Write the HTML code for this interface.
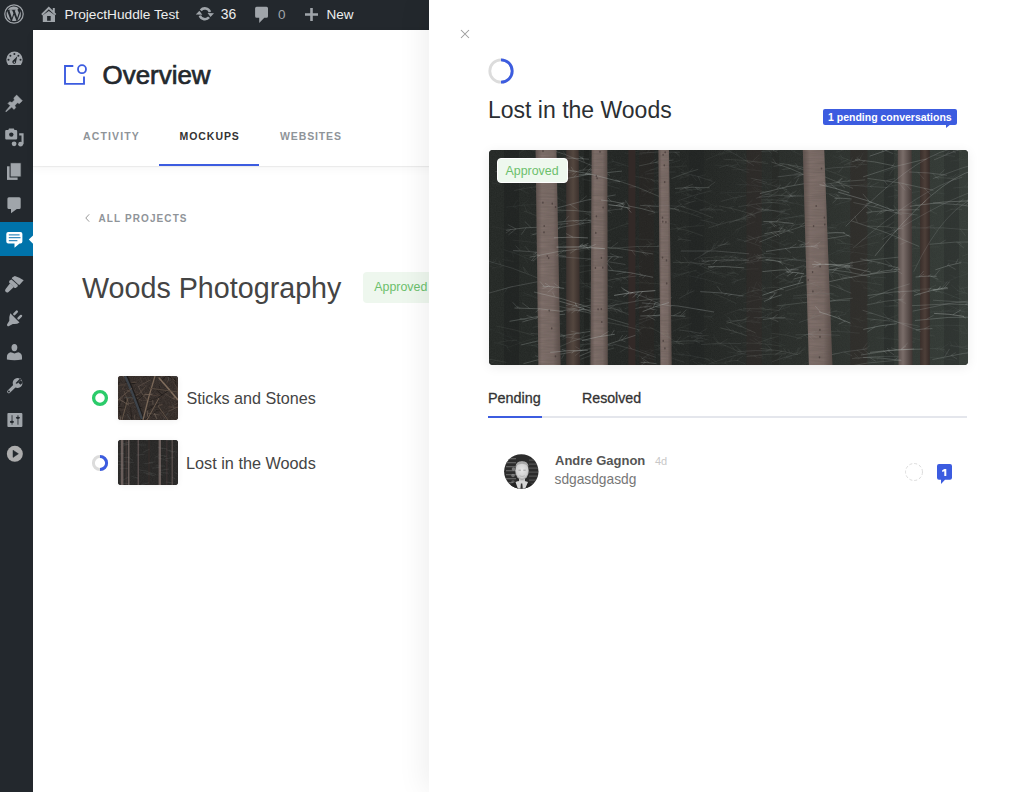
<!DOCTYPE html>
<html><head><meta charset="utf-8">
<style>
*{box-sizing:border-box;margin:0;padding:0}
html,body{width:1024px;height:792px;overflow:hidden;background:#fff;font-family:"Liberation Sans",sans-serif}
.a{position:absolute;white-space:nowrap}
#bar{position:absolute;left:0;top:0;width:1024px;height:30px;background:#23282d}
#side{position:absolute;left:0;top:30px;width:33px;height:762px;background:#23282d}
#main{position:absolute;left:33px;top:30px;width:991px;height:762px;background:#fff}
#hdr{position:absolute;left:33px;top:30px;width:991px;height:136px;background:#fff;box-shadow:0 1px 1px rgba(0,0,0,.055),0 3px 10px rgba(0,0,0,.035)}
#panel{position:absolute;left:429px;top:0;width:595px;height:792px;background:#fff;box-shadow:-4px 0 28px rgba(0,0,0,.07)}
svg{position:absolute;overflow:visible}
</style></head><body>
<div id="bar">
  <!-- WP logo -->
  <svg style="left:4px;top:4px" width="20" height="20" viewBox="0 0 20 20">
    <circle cx="10" cy="10" r="9.2" fill="none" stroke="#a0a5aa" stroke-width="1.2"/>
    <path fill="#a0a5aa" d="M2.6,10 a7.4,7.4 0 0 0 4.2,6.7 L3.2,6.9 A7.3,7.3 0 0 0 2.6,10z M15,9.6 c0-1-.4-1.6-.7-2.2 c-.4-.6-.7-1.1-.7-1.7 c0-.7.5-1.3 1.2-1.3 h.1 A7.4,7.4 0 0 0 3.7,5.8 h.5 c.8,0 2-.1 2-.1 c.4,0 .4.6 0,.6 c0,0-.4,0-.8.1 l2.5,7.5 1.5-4.6 -1.1-2.9 c-.4,0-.7-.1-.7-.1 c-.4,0-.3-.6 0-.6 c0,0 1.2.1 1.9.1 c.8,0 2-.1 2-.1 c.4,0 .4.6 0,.6 c0,0-.4,0-.8.1 l2.5,7.4 .7-2.3 c.3-.9.5-1.6.5-2.2z M10.1,10.7 l-2.1,6.1 a7.4,7.4 0 0 0 4.5-.1 l-.1-.1z M16.1,6.8 c0,.2.1.5.1.8 c0,.8-.1,1.6-.6,2.7 l-2.2,6.5 A7.4,7.4 0 0 0 16.1,6.8z"/>
  </svg>
  <!-- home -->
  <svg style="left:38px;top:2px" width="24" height="24" viewBox="0 0 24 24">
    <path fill="#a0a5aa" d="M3.2,12.1 L10.8,4.5 L14.8,8.5 V6 H16.8 V10.5 L18.3,12 L17,13.3 L10.8,7.2 L4.5,13.4z"/>
    <path fill="#a0a5aa" fill-rule="evenodd" d="M4.8,20 V13.2 L10.8,8.9 L17,13.2 V20z M9.1,14.1 H12.7 V18.8 H9.1z"/>
  </svg>
  <div class="a" style="left:64.5px;top:7.7px;font-size:13.7px;line-height:13.7px;color:#eee">ProjectHuddle Test</div>
  <!-- updates -->
  <svg style="left:190px;top:2px" width="28" height="26" viewBox="0 0 28 26">
    <g fill="none" stroke="#a0a5aa" stroke-width="2.6"><path d="M10.76,8.33 A5.4,5.4 0 0 1 19.97,9.95"/><path d="M19.04,15.27 A5.4,5.4 0 0 1 9.83,13.65"/></g>
    <g fill="#a0a5aa"><path d="M17.6,11 L24,11.2 L20.5,15.1z"/><path d="M5.8,12.4 L9.4,8.7 L12.3,12.8z"/></g>
  </svg>
  <div class="a" style="left:220.8px;top:7.8px;font-size:13.9px;line-height:13.9px;color:#eee">36</div>
  <!-- comment -->
  <svg style="left:250px;top:2px" width="24" height="24" viewBox="0 0 24 24">
    <path fill="#a0a5aa" d="M6.6,4.8 H16.5 Q18,4.8 18,6.3 V14.3 Q18,15.8 16.5,15.8 H14.3 L9.2,20.9 V15.8 H6.6 Q5.1,15.8 5.1,14.3 V6.3 Q5.1,4.8 6.6,4.8z"/>
  </svg>
  <div class="a" style="left:278px;top:7.8px;font-size:13.5px;line-height:13.5px;color:#a0a5aa">0</div>
  <!-- plus -->
  <svg style="left:305px;top:8px" width="13" height="13" viewBox="0 0 13 13">
    <path fill="#a0a5aa" d="M5.2,0 H7.8 V5.2 H13 V7.8 H7.8 V13 H5.2 V7.8 H0 V5.2 H5.2z"/>
  </svg>
  <div class="a" style="left:326.4px;top:8.1px;font-size:13.5px;line-height:13.5px;color:#eee">New</div>
</div>

<div id="side"></div>
<div style="position:absolute;left:0;top:222px;width:33px;height:34px;background:#0073aa"></div>
<svg style="left:0;top:0" width="33" height="792" viewBox="0 0 33 792">
  <g fill="#a0a5aa">
    <!-- dashboard -->
    <path d="M8.16,65 A8.2,8.2 0 1 1 20.84,65z"/>
    <!-- pin -->
    <path stroke="#a0a5aa" stroke-width=".6" stroke-linejoin="round" d="M6.15,111.75 L11.70,107.12 L13.96,109.38 L15.66,107.68 L14.81,105.42 L17.36,102.87 L19.48,103.58 L22.30,100.75 L16.65,95.10 L13.82,97.92 L14.53,100.04 L11.98,102.59 L9.72,101.74 L8.02,103.44 L10.28,105.70 L5.65,111.25z"/>
    <!-- media -->
    <path d="M6.3,130 H8.3 L9,128.6 H13.8 L14.5,130 H16 Q17.2,130 17.2,131.2 V138.3 Q17.2,139.5 16,139.5 H6.3 Q5.2,139.5 5.2,138.3 V131.2 Q5.2,130 6.3,130z"/>
    <path d="M19.2,133.2 H23.6 V144.2 H21.5 V135.4 H19.2z"/>
    <circle cx="14.1" cy="143.8" r="2.4"/><circle cx="20.6" cy="144.2" r="2.4"/>
    <!-- pages -->
    <rect x="7" y="166.3" width="10.6" height="13.6"/>
    <rect x="10.1" y="162.7" width="11.1" height="14.3" stroke="#23282d" stroke-width="1"/>
    <!-- comments -->
    <path d="M7.4,198.7 Q7.4,197.2 8.9,197.2 H19.2 Q20.7,197.2 20.7,198.7 V207.5 Q20.7,209 19.2,209 H16.8 L11,213.3 V209 H8.9 Q7.4,209 7.4,207.5z"/>
    <!-- brush -->
    <path d="M12.18,277.58 L14.8,275.94 Q19.5,277.2 23.67,280.37 L19.4,284.97 L18.09,284.15 L11.85,278.57z"/>
    <path d="M11.5,279.5 L17.8,285.1 L17.5,286.4 L15.8,288.1 L14.6,288 L9.1,282.5 Q8.9,281.4 9.6,280.6z"/>
    <path d="M10.1,283.2 L13.9,287 L8.5,292 Q7,293.2 5.6,291.8 Q4.5,290.4 5.6,289z"/>
    <!-- plugin -->
    <path d="M10.3,313.3 L19.5,322.5 Q16.5,324.6 12.8,323.9 L9.1,325.9 Q8.2,326.6 7.3,325.7 Q6.5,324.8 7.3,323.9 L9.3,320.8 Q8.8,317.2 10.3,313.3z"/>
    <path stroke="#a0a5aa" stroke-width="2.4" stroke-linecap="round" d="M14.3,314.2 L16.8,311.6 M18.5,318.4 L21,315.9"/>
    <!-- users -->
    <ellipse cx="14.4" cy="347.6" rx="2.9" ry="3.7"/>
    <path d="M6.9,359.6 V357 Q6.9,353.3 10.5,352.2 Q12.5,352.5 14.5,353.6 Q16.5,352.5 18.5,352.2 Q22,353.3 22,357 V359.6 Q14.5,360.8 6.9,359.6z"/>
    <!-- tools -->
    <path fill-rule="evenodd" d="M17.6,378.1 A4.9,4.9 0 1 1 17.59,378.1z M18.1,382.4 L20.5,380 L22.9,382.4 L20.5,384.8z M15.4,383.2 L20.3,378.3 L21.4,379.4 L16.5,384.3z"/>
    <path stroke="#a0a5aa" stroke-width="3.3" stroke-linecap="round" d="M15.6,385 L8.8,391.6"/>
    <!-- settings -->
    <rect x="7.4" y="412.9" width="15" height="14" rx="1"/>
  </g>
  <!-- dashboard details -->
  <g fill="#23282d"><circle cx="14.4" cy="53.9" r="1"/><circle cx="10.4" cy="55.8" r="1"/><circle cx="18.4" cy="55.8" r="1"/><circle cx="8.5" cy="59.8" r="1"/><circle cx="20.5" cy="59.8" r="1"/>
    <path d="M17.3,56.3 L16.1,61.6 A1.9,1.9 0 1 1 12.7,60.8z"/></g>
  <circle cx="14.4" cy="62.2" r=".7" fill="#a0a5aa"/>
  <circle cx="11.3" cy="134.6" r="2.2" fill="#23282d"/>
  <circle cx="8.9" cy="391.5" r=".95" fill="#23282d"/>
  <g fill="#5b6065"><rect x="11.3" y="415.2" width="1.5" height="9.5"/><rect x="17.2" y="415.2" width="1.5" height="9.5"/></g>
  <g fill="#23282d"><ellipse cx="11.9" cy="421.9" rx="2.1" ry="1.1"/><ellipse cx="17.9" cy="417.8" rx="2.1" ry="1.1"/></g>
  <circle cx="14.85" cy="453.8" r="8" fill="#adadad"/>
  <path d="M13,450.2 L18.4,453.8 L13,457.4z" fill="#23282d" stroke="#23282d" stroke-width=".5" stroke-linejoin="round"/>
  <!-- active icon -->
  <path fill="#fff" d="M8.3,232 H20.4 Q22.4,232 22.4,234 V241.5 Q22.4,243.5 20.4,243.5 H19.6 L14.5,247.8 V243.5 H8.3 Q6.3,243.5 6.3,241.5 V234 Q6.3,232 8.3,232z"/>
  <g stroke="#3a8dbf" stroke-width="1.3"><path d="M8.8,234.9 H19.6 M8.8,237.7 H20.5 M8.8,240.7 H17.4"/></g>
  <path fill="#fff" d="M33,235.5 L28.8,239.6 L33,243.7z"/>
</svg>
<div id="main"></div>
<div id="hdr">
  <svg style="left:31px;top:34px" width="24" height="22" viewBox="0 0 24 22">
    <path fill="none" stroke="#3c5ce0" stroke-width="1.9" d="M9.3,2 H1 V19.9 H20 V12.6"/>
    <circle cx="18" cy="5.2" r="4" fill="none" stroke="#3c5ce0" stroke-width="1.8"/>
  </svg>
  <div class="a" style="left:69.6px;top:33.3px;font-size:25.9px;line-height:25.9px;color:#23282d;-webkit-text-stroke:0.7px #23282d">Overview</div>
  <div class="a" style="left:50px;top:100.8px;font-size:10.5px;line-height:10.5px;font-weight:bold;letter-spacing:1.13px;color:#8f9499">ACTIVITY</div>
  <div class="a" style="left:146.5px;top:100.8px;font-size:10.5px;line-height:10.5px;font-weight:bold;letter-spacing:0.95px;color:#333">MOCKUPS</div>
  <div class="a" style="left:247px;top:100.8px;font-size:10.5px;line-height:10.5px;font-weight:bold;letter-spacing:0.88px;color:#8f9499">WEBSITES</div>
  <div class="a" style="left:125.8px;top:133.5px;width:100px;height:2px;background:#3c5ce0"></div>
</div>

<!-- body content -->
<svg style="left:85px;top:214.3px" width="5" height="8" viewBox="0 0 5 8"><path d="M4.2,0.3 L0.8,4 L4.2,7.7" fill="none" stroke="#999" stroke-width="1"/></svg>
<div class="a" style="left:98.5px;top:214.1px;font-size:10px;line-height:10px;font-weight:bold;letter-spacing:1.1px;color:#8f9499">ALL PROJECTS</div>
<div class="a" style="left:82px;top:274px;font-size:28.7px;line-height:28.7px;color:#444">Woods Photography</div>
<div class="a" style="left:363px;top:271.5px;width:80px;height:31.5px;border-radius:4px;background:#eef7ee"></div>
<div class="a" style="left:374.3px;top:281.2px;font-size:12.4px;line-height:12.4px;color:#6cbf6c">Approved</div>

<svg style="left:90.6px;top:389px" width="18" height="18" viewBox="0 0 18 18"><circle cx="9" cy="9" r="6.4" fill="none" stroke="#2bcb6a" stroke-width="3.3"/></svg>
<div class="a" style="left:118px;top:376px;width:60px;height:44px;border-radius:3px;background:#3a302c;box-shadow:0 1px 6px rgba(0,0,0,.06)"></div>
<svg class="a" style="left:118px;top:376px" width="60" height="44" viewBox="0 0 60 44"><defs><clipPath id="sc"><rect width="60" height="44" rx="3"/></clipPath><filter id="snz" x="0" y="0" width="100%" height="100%"><feTurbulence type="fractalNoise" baseFrequency="1.2" numOctaves="2" seed="4"/><feColorMatrix values="0 0 0 0 .45  0 0 0 0 .38  0 0 0 0 .33  0 0 0 .2 0"/></filter></defs><g clip-path="url(#sc)"><rect width="60" height="44" fill="#2a2320"/><rect width="60" height="44" filter="url(#snz)"/><path d="M38.6,35.1 l-10.7,8.0" stroke="#1a1614" stroke-width="0.8" opacity=".7"/><path d="M32.1,40.4 l-4.4,3.7" stroke="#5a4a40" stroke-width="0.9" opacity=".7"/><path d="M2.9,20.3 l6.4,6.3" stroke="#16120f" stroke-width="0.5" opacity=".7"/><path d="M46.2,17.0 l10.5,6.8" stroke="#7a6b5f" stroke-width="0.5" opacity=".7"/><path d="M50.8,2.5 l-1.6,4.1" stroke="#5a4a40" stroke-width="1.0" opacity=".7"/><path d="M-4.6,36.8 l-4.8,0.6" stroke="#6b5a4e" stroke-width="0.6" opacity=".7"/><path d="M62.3,24.1 l-2.8,4.5" stroke="#1a1614" stroke-width="0.5" opacity=".7"/><path d="M62.6,15.7 l7.5,0.5" stroke="#6b5a4e" stroke-width="0.6" opacity=".7"/><path d="M18.2,39.1 l-2.6,9.2" stroke="#1a1614" stroke-width="0.6" opacity=".7"/><path d="M16.7,39.2 l0.4,6.5" stroke="#7a6b5f" stroke-width="0.7" opacity=".7"/><path d="M7.3,8.8 l-13.2,2.6" stroke="#4d423c" stroke-width="0.9" opacity=".7"/><path d="M-3.7,37.5 l3.8,8.5" stroke="#5a4a40" stroke-width="0.7" opacity=".7"/><path d="M44.5,28.7 l-4.3,0.6" stroke="#6b5a4e" stroke-width="1.0" opacity=".7"/><path d="M60.9,13.6 l3.9,7.9" stroke="#585c5c" stroke-width="0.7" opacity=".7"/><path d="M36.3,37.2 l2.5,5.7" stroke="#7a6b5f" stroke-width="1.0" opacity=".7"/><path d="M1.4,13.4 l-4.5,12.3" stroke="#4d423c" stroke-width="0.6" opacity=".7"/><path d="M44.2,-0.0 l-3.5,5.3" stroke="#585c5c" stroke-width="0.4" opacity=".7"/><path d="M5.4,32.2 l-4.8,0.0" stroke="#5a4a40" stroke-width="0.4" opacity=".7"/><path d="M37.0,44.9 l11.1,1.1" stroke="#4d423c" stroke-width="0.9" opacity=".7"/><path d="M26.9,17.8 l12.9,2.3" stroke="#5a4a40" stroke-width="0.9" opacity=".7"/><path d="M18.4,6.2 l-9.2,0.5" stroke="#6b5a4e" stroke-width="0.8" opacity=".7"/><path d="M50.2,0.8 l0.9,4.5" stroke="#585c5c" stroke-width="0.7" opacity=".7"/><path d="M4.9,44.8 l-1.8,4.5" stroke="#16120f" stroke-width="0.7" opacity=".7"/><path d="M29.2,34.4 l0.4,6.2" stroke="#7a6b5f" stroke-width="0.9" opacity=".7"/><path d="M2.9,39.4 l-0.5,4.9" stroke="#7a6b5f" stroke-width="0.9" opacity=".7"/><path d="M7.6,21.6 l-0.4,9.0" stroke="#16120f" stroke-width="0.6" opacity=".7"/><path d="M50.0,36.8 l-5.9,8.4" stroke="#585c5c" stroke-width="0.6" opacity=".7"/><path d="M34.2,31.1 l-5.1,2.9" stroke="#1a1614" stroke-width="0.8" opacity=".7"/><path d="M62.0,13.4 l10.5,6.6" stroke="#7a6b5f" stroke-width="0.7" opacity=".7"/><path d="M12.5,31.3 l1.4,11.9" stroke="#1a1614" stroke-width="0.8" opacity=".7"/><path d="M20.0,9.8 l6.2,11.8" stroke="#7a6b5f" stroke-width="0.6" opacity=".7"/><path d="M54.0,42.0 l-7.7,11.4" stroke="#4d423c" stroke-width="0.7" opacity=".7"/><path d="M32.1,4.0 l-11.6,6.5" stroke="#7a6b5f" stroke-width="0.6" opacity=".7"/><path d="M0.5,31.2 l2.5,9.5" stroke="#16120f" stroke-width="0.7" opacity=".7"/><path d="M60.6,11.3 l-2.1,12.4" stroke="#4d423c" stroke-width="0.8" opacity=".7"/><path d="M-3.1,3.6 l1.9,10.0" stroke="#6b5a4e" stroke-width="0.9" opacity=".7"/><path d="M7.6,33.8 l-13.8,0.6" stroke="#6b5a4e" stroke-width="0.4" opacity=".7"/><path d="M4.3,12.1 l4.3,2.8" stroke="#5a4a40" stroke-width="0.6" opacity=".7"/><path d="M19.6,30.8 l5.1,1.2" stroke="#1a1614" stroke-width="0.9" opacity=".7"/><path d="M-5.0,16.9 l4.8,5.8" stroke="#5a4a40" stroke-width="0.8" opacity=".7"/><path d="M33.3,47.1 l-1.0,6.2" stroke="#4d423c" stroke-width="0.7" opacity=".7"/><path d="M18.8,26.4 l-11.9,1.6" stroke="#7a6b5f" stroke-width="0.6" opacity=".7"/><path d="M34.5,24.1 l0.5,4.7" stroke="#7a6b5f" stroke-width="0.7" opacity=".7"/><path d="M62.0,47.3 l-2.3,6.5" stroke="#1a1614" stroke-width="0.4" opacity=".7"/><path d="M2.6,25.6 l-1.6,4.3" stroke="#1a1614" stroke-width="0.9" opacity=".7"/><path d="M34.5,18.2 l-8.4,0.6" stroke="#7a6b5f" stroke-width="1.0" opacity=".7"/><path d="M21.6,46.9 l-9.2,2.6" stroke="#4d423c" stroke-width="0.8" opacity=".7"/><path d="M16.1,8.6 l13.4,0.8" stroke="#4d423c" stroke-width="0.7" opacity=".7"/><path d="M15.0,20.8 l9.1,3.7" stroke="#7a6b5f" stroke-width="0.5" opacity=".7"/><path d="M-2.2,2.4 l2.7,7.8" stroke="#16120f" stroke-width="0.6" opacity=".7"/><path d="M60.5,37.2 l4.3,4.1" stroke="#6b5a4e" stroke-width="0.8" opacity=".7"/><path d="M15.0,21.6 l-8.7,0.2" stroke="#585c5c" stroke-width="0.8" opacity=".7"/><path d="M47.0,1.4 l-4.6,4.3" stroke="#16120f" stroke-width="0.8" opacity=".7"/><path d="M38.0,34.5 l6.8,0.6" stroke="#1a1614" stroke-width="0.8" opacity=".7"/><path d="M36.4,-3.0 l5.6,5.7" stroke="#5a4a40" stroke-width="0.9" opacity=".7"/><path d="M33.2,-4.2 l-5.9,4.9" stroke="#16120f" stroke-width="0.8" opacity=".7"/><path d="M61.7,30.0 l-11.1,5.3" stroke="#7a6b5f" stroke-width="0.6" opacity=".7"/><path d="M54.6,5.6 l7.2,9.7" stroke="#5a4a40" stroke-width="0.6" opacity=".7"/><path d="M-4.8,37.1 l-2.6,9.8" stroke="#7a6b5f" stroke-width="0.9" opacity=".7"/><path d="M5.0,20.8 l-1.3,8.4" stroke="#4d423c" stroke-width="0.7" opacity=".7"/><path d="M24.8,24.2 l10.9,1.7" stroke="#4d423c" stroke-width="0.9" opacity=".7"/><path d="M50.4,30.8 l10.9,0.9" stroke="#5a4a40" stroke-width="1.0" opacity=".7"/><path d="M44.1,-2.4 l-4.8,2.6" stroke="#1a1614" stroke-width="0.9" opacity=".7"/><path d="M2.8,43.3 l-10.8,0.2" stroke="#7a6b5f" stroke-width="0.5" opacity=".7"/><path d="M37.7,17.4 l8.6,4.8" stroke="#5a4a40" stroke-width="0.7" opacity=".7"/><path d="M41.2,35.3 l5.9,7.1" stroke="#5a4a40" stroke-width="0.8" opacity=".7"/><path d="M56.5,2.3 l1.4,6.3" stroke="#16120f" stroke-width="0.7" opacity=".7"/><path d="M19.7,30.4 l-4.4,1.2" stroke="#4d423c" stroke-width="0.5" opacity=".7"/><path d="M39.2,22.3 l-8.7,2.5" stroke="#16120f" stroke-width="0.5" opacity=".7"/><path d="M-0.6,7.7 l-5.3,3.1" stroke="#6b5a4e" stroke-width="0.9" opacity=".7"/><path d="M55.4,19.5 l1.5,4.2" stroke="#5a4a40" stroke-width="0.8" opacity=".7"/><path d="M1.0,31.1 l4.2,1.2" stroke="#16120f" stroke-width="0.7" opacity=".7"/><path d="M22.3,20.0 l-4.2,0.5" stroke="#16120f" stroke-width="0.4" opacity=".7"/><path d="M45.8,-2.1 l12.0,6.1" stroke="#1a1614" stroke-width="0.9" opacity=".7"/><path d="M47.5,-0.5 l-8.1,2.3" stroke="#6b5a4e" stroke-width="0.5" opacity=".7"/><path d="M38.7,14.1 l4.9,4.5" stroke="#16120f" stroke-width="0.8" opacity=".7"/><path d="M50.7,15.4 l-4.5,5.3" stroke="#4d423c" stroke-width="0.9" opacity=".7"/><path d="M25.3,41.0 l-0.5,9.5" stroke="#16120f" stroke-width="0.5" opacity=".7"/><path d="M7.6,-1.6 l5.0,0.6" stroke="#6b5a4e" stroke-width="0.4" opacity=".7"/><path d="M57.2,21.0 l-2.2,2.1" stroke="#7a6b5f" stroke-width="0.6" opacity=".7"/><path d="M60.4,44.8 l4.3,6.9" stroke="#6b5a4e" stroke-width="0.5" opacity=".7"/><path d="M6.1,15.2 l4.5,11.9" stroke="#6b5a4e" stroke-width="0.7" opacity=".7"/><path d="M2.7,39.2 l-7.4,7.3" stroke="#5a4a40" stroke-width="0.7" opacity=".7"/><path d="M-2.8,44.9 l5.3,12.2" stroke="#1a1614" stroke-width="0.4" opacity=".7"/><path d="M27.0,40.8 l10.3,5.5" stroke="#4d423c" stroke-width="0.6" opacity=".7"/><path d="M42.2,34.4 l4.5,2.6" stroke="#5a4a40" stroke-width="0.7" opacity=".7"/><path d="M41.0,28.3 l-10.4,3.0" stroke="#1a1614" stroke-width="0.6" opacity=".7"/><path d="M27.8,10.3 l-7.3,8.1" stroke="#6b5a4e" stroke-width="0.9" opacity=".7"/><path d="M7.3,6.3 l9.6,1.3" stroke="#1a1614" stroke-width="1.0" opacity=".7"/><path d="M-4.6,-1.7 l-5.8,4.8" stroke="#5a4a40" stroke-width="0.4" opacity=".7"/><path d="M53.5,40.2 l-2.7,13.1" stroke="#1a1614" stroke-width="0.4" opacity=".7"/><path d="M57.9,21.5 l-3.5,0.7" stroke="#6b5a4e" stroke-width="0.8" opacity=".7"/><path d="M29.8,37.2 l12.0,1.8" stroke="#7a6b5f" stroke-width="0.6" opacity=".7"/><path d="M-1.4,-3.0 l-5.0,0.4" stroke="#16120f" stroke-width="0.8" opacity=".7"/><path d="M8.2,7.6 l-11.4,2.7" stroke="#5a4a40" stroke-width="0.7" opacity=".7"/><path d="M59.5,27.3 l-4.8,2.3" stroke="#5a4a40" stroke-width="0.7" opacity=".7"/><path d="M20.0,17.9 l-6.5,5.8" stroke="#6b5a4e" stroke-width="0.8" opacity=".7"/><path d="M58.9,11.6 l1.9,11.9" stroke="#6b5a4e" stroke-width="0.7" opacity=".7"/><path d="M4.7,21.1 l-4.5,3.8" stroke="#7a6b5f" stroke-width="0.6" opacity=".7"/><path d="M4.1,-0.6 l2.8,2.7" stroke="#7a6b5f" stroke-width="1.0" opacity=".7"/><path d="M41.6,9.9 l0.1,5.7" stroke="#1a1614" stroke-width="0.5" opacity=".7"/><path d="M15.0,15.2 l7.3,2.3" stroke="#4d423c" stroke-width="0.6" opacity=".7"/><path d="M48.8,-5.0 l8.3,10.4" stroke="#6b5a4e" stroke-width="0.7" opacity=".7"/><path d="M26.0,39.1 l-6.3,11.9" stroke="#1a1614" stroke-width="0.4" opacity=".7"/><path d="M24.9,0.8 l-7.5,5.3" stroke="#4d423c" stroke-width="0.4" opacity=".7"/><path d="M6.9,9.2 l-3.2,5.2" stroke="#5a4a40" stroke-width="0.7" opacity=".7"/><path d="M46.7,-3.5 l12.7,5.1" stroke="#585c5c" stroke-width="0.6" opacity=".7"/><path d="M55.2,46.3 l-1.9,5.2" stroke="#7a6b5f" stroke-width="0.5" opacity=".7"/><path d="M9.1,14.3 l8.5,4.8" stroke="#6b5a4e" stroke-width="0.8" opacity=".7"/><path d="M1.7,23.6 l9.3,5.5" stroke="#7a6b5f" stroke-width="0.9" opacity=".7"/><path d="M25.4,18.2 l3.9,6.8" stroke="#6b5a4e" stroke-width="0.7" opacity=".7"/><path d="M25.4,18.8 l-9.9,8.9" stroke="#16120f" stroke-width="0.7" opacity=".7"/><path d="M29.4,-4.9 l11.4,4.8" stroke="#1a1614" stroke-width="0.4" opacity=".7"/><path d="M63.5,-3.2 l-2.0,8.1" stroke="#4d423c" stroke-width="0.6" opacity=".7"/><path d="M10.1,10.0 l7.4,5.4" stroke="#4d423c" stroke-width="0.9" opacity=".7"/><path d="M50.0,14.8 l-9.9,6.8" stroke="#1a1614" stroke-width="0.9" opacity=".7"/><path d="M54.5,28.4 l1.4,4.4" stroke="#585c5c" stroke-width="0.5" opacity=".7"/><path d="M21.7,0.1 l3.6,10.7" stroke="#4d423c" stroke-width="0.9" opacity=".7"/><path d="M9.0,38.0 l5.5,8.9" stroke="#585c5c" stroke-width="0.7" opacity=".7"/><path d="M1.4,5.7 l-2.3,3.4" stroke="#16120f" stroke-width="0.8" opacity=".7"/><path d="M8,0 Q15,16 25,44" stroke="#1a1816" stroke-width="3.6" fill="none" opacity=".8"/><path d="M7,0 Q14,15 24,43" stroke="#3d434a" stroke-width="2.4" fill="none"/><path d="M37,0 Q30,22 25,44" stroke="#7a6858" stroke-width="1.3" fill="none"/><path d="M41,2 Q50,12 60,24" stroke="#7f6c5c" stroke-width="1.6" fill="none"/><path d="M31,12 L60,16" stroke="#55493f" stroke-width="1" fill="none"/><path d="M0,24 L14,12" stroke="#5f5046" stroke-width="1" fill="none"/><path d="M29,44 L41,22" stroke="#6e5e50" stroke-width="1" fill="none"/><path d="M4,44 L10,22" stroke="#6a5a4c" stroke-width=".9" fill="none"/><path d="M50,44 L40,30" stroke="#625446" stroke-width=".9" fill="none"/></g></svg>
<div class="a" style="left:186.5px;top:389.9px;font-size:16.15px;line-height:16.15px;color:#444">Sticks and Stones</div>

<svg style="left:91px;top:454px" width="18" height="18" viewBox="0 0 18 18">
  <circle cx="9" cy="9" r="6.6" fill="none" stroke="#dcdcdc" stroke-width="3"/>
  <path d="M9,2.4 A6.6,6.6 0 0 1 9,15.6" fill="none" stroke="#3c5ce0" stroke-width="3"/>
</svg>
<div class="a" style="left:118px;top:440px;width:60px;height:45px;border-radius:3px;background:#2a2826;box-shadow:0 1px 6px rgba(0,0,0,.06)"></div>
<svg class="a" style="left:118px;top:440px" width="60" height="45" viewBox="0 0 60 45"><defs><clipPath id="wc"><rect width="60" height="45" rx="3"/></clipPath><filter id="wnz" x="0" y="0" width="100%" height="100%"><feTurbulence type="fractalNoise" baseFrequency="1.1" numOctaves="2" seed="8"/><feColorMatrix values="0 0 0 0 .5  0 0 0 0 .52  0 0 0 0 .5  0 0 0 .09 0"/></filter></defs><g clip-path="url(#wc)"><rect width="60" height="45" fill="#242322"/><rect width="60" height="45" filter="url(#wnz)"/><rect x="2.8" y="0" width="2.6" height="45" fill="#6a5e5b"/><rect x="7.5" y="0" width="1.5" height="45" fill="#3b3331"/><rect x="9.9" y="0" width="1.6" height="45" fill="#655a57"/><rect x="19.6" y="0" width="1.3" height="45" fill="#5c5250"/><rect x="30" y="0" width="2" height="45" fill="#312b29"/><rect x="40.6" y="0" width="2.4" height="45" fill="#6a5e5b"/><rect x="48" y="0" width="1.5" height="45" fill="#383030"/><rect x="53.6" y="0" width="1.2" height="45" fill="#5a504e"/><path d="M11.1,17.5 l-5.2,0.1" stroke="#8d9592" stroke-width=".4" opacity=".35"/><path d="M30.8,22.6 l6.8,-0.8" stroke="#8d9592" stroke-width=".4" opacity=".35"/><path d="M47.3,26.1 l-9.5,-0.3" stroke="#8d9592" stroke-width=".4" opacity=".35"/><path d="M47.9,16.3 l-7.2,-1.6" stroke="#8d9592" stroke-width=".4" opacity=".35"/><path d="M4.7,3.9 l5.5,-1.5" stroke="#8d9592" stroke-width=".4" opacity=".35"/><path d="M55.8,12.4 l-8.0,-2.8" stroke="#8d9592" stroke-width=".4" opacity=".35"/><path d="M5.3,43.3 l5.1,0.4" stroke="#8d9592" stroke-width=".4" opacity=".35"/><path d="M50.3,33.2 l-7.3,-0.6" stroke="#8d9592" stroke-width=".4" opacity=".35"/><path d="M5.5,5.4 l5.4,-1.0" stroke="#8d9592" stroke-width=".4" opacity=".35"/><path d="M0.2,17.6 l-4.2,1.6" stroke="#8d9592" stroke-width=".4" opacity=".35"/><path d="M36.8,17.4 l3.8,-1.8" stroke="#8d9592" stroke-width=".4" opacity=".35"/><path d="M6.0,13.2 l-8.6,1.5" stroke="#8d9592" stroke-width=".4" opacity=".35"/><path d="M10.0,28.5 l-8.4,0.3" stroke="#8d9592" stroke-width=".4" opacity=".35"/><path d="M34.2,28.2 l7.5,-0.9" stroke="#8d9592" stroke-width=".4" opacity=".35"/><path d="M25.5,23.8 l9.3,-0.9" stroke="#8d9592" stroke-width=".4" opacity=".35"/><path d="M5.1,40.0 l5.3,-2.8" stroke="#8d9592" stroke-width=".4" opacity=".35"/><path d="M6.9,25.3 l-7.2,-0.8" stroke="#8d9592" stroke-width=".4" opacity=".35"/><path d="M19.6,4.6 l8.5,0.6" stroke="#8d9592" stroke-width=".4" opacity=".35"/><path d="M3.7,21.8 l-8.8,-1.4" stroke="#8d9592" stroke-width=".4" opacity=".35"/><path d="M51.0,29.0 l-9.5,1.5" stroke="#8d9592" stroke-width=".4" opacity=".35"/><path d="M36.9,35.9 l-8.9,-2.0" stroke="#8d9592" stroke-width=".4" opacity=".35"/><path d="M9.4,4.2 l-4.1,-0.1" stroke="#8d9592" stroke-width=".4" opacity=".35"/><path d="M26.5,14.5 l-8.4,0.6" stroke="#8d9592" stroke-width=".4" opacity=".35"/><path d="M55.4,43.1 l-7.4,-1.2" stroke="#8d9592" stroke-width=".4" opacity=".35"/><path d="M48.9,8.8 l-5.3,-0.7" stroke="#8d9592" stroke-width=".4" opacity=".35"/><path d="M40.8,33.4 l3.6,1.7" stroke="#8d9592" stroke-width=".4" opacity=".35"/><path d="M28.0,0.3 l9.9,-2.3" stroke="#8d9592" stroke-width=".4" opacity=".35"/><path d="M0.2,17.1 l-5.4,-0.5" stroke="#8d9592" stroke-width=".4" opacity=".35"/><path d="M56.3,32.1 l3.1,2.0" stroke="#8d9592" stroke-width=".4" opacity=".35"/><path d="M45.1,8.8 l-5.4,-1.5" stroke="#8d9592" stroke-width=".4" opacity=".35"/><path d="M29.9,31.4 l-8.5,-1.5" stroke="#8d9592" stroke-width=".4" opacity=".35"/><path d="M20.2,38.2 l-6.6,-1.9" stroke="#8d9592" stroke-width=".4" opacity=".35"/><path d="M59.2,12.2 l-8.0,-1.6" stroke="#8d9592" stroke-width=".4" opacity=".35"/><path d="M5.8,21.5 l9.9,1.3" stroke="#8d9592" stroke-width=".4" opacity=".35"/><path d="M14.7,20.4 l-3.9,-3.0" stroke="#8d9592" stroke-width=".4" opacity=".35"/><path d="M46.0,16.2 l3.1,-0.2" stroke="#8d9592" stroke-width=".4" opacity=".35"/><path d="M57.4,39.1 l-3.5,-2.0" stroke="#8d9592" stroke-width=".4" opacity=".35"/><path d="M48.2,0.5 l6.6,-0.0" stroke="#8d9592" stroke-width=".4" opacity=".35"/><path d="M50.4,21.2 l-3.2,-1.0" stroke="#8d9592" stroke-width=".4" opacity=".35"/><path d="M46.7,19.6 l-7.2,-1.9" stroke="#8d9592" stroke-width=".4" opacity=".35"/><path d="M25.3,32.5 l8.7,1.6" stroke="#8d9592" stroke-width=".4" opacity=".35"/><path d="M22.7,45.0 l8.3,-2.3" stroke="#8d9592" stroke-width=".4" opacity=".35"/><path d="M46.9,19.0 l9.8,-1.9" stroke="#8d9592" stroke-width=".4" opacity=".35"/><path d="M25.3,12.2 l6.3,-3.0" stroke="#8d9592" stroke-width=".4" opacity=".35"/><path d="M38.0,34.6 l-8.3,-2.6" stroke="#8d9592" stroke-width=".4" opacity=".35"/></g></svg>
<div class="a" style="left:186px;top:455.3px;font-size:16.25px;line-height:16.25px;color:#444">Lost in the Woods</div>

<div id="panel">
  <svg style="left:32px;top:30px" width="8" height="8" viewBox="0 0 8 8"><path d="M0,0 L8,8 M8,0 L0,8" stroke="#9a9a9a" stroke-width="1.05"/></svg>
  <svg style="left:59px;top:57.5px" width="26" height="26" viewBox="0 0 26 26">
    <circle cx="13" cy="13" r="11.2" fill="none" stroke="#dcdcdc" stroke-width="2.8"/>
    <path d="M13,1.8 A11.2,11.2 0 0 1 13,24.2" fill="none" stroke="#3c5ce0" stroke-width="2.8"/>
  </svg>
  <div class="a" style="left:59px;top:98.9px;font-size:23px;line-height:23px;color:#2b2f33">Lost in the Woods</div>
  <div class="a" style="left:393.5px;top:108.7px;width:134.5px;height:16px;border-radius:2px;background:#3c5ce0"></div>
  <svg style="left:517px;top:124px" width="6" height="5" viewBox="0 0 6 5"><path d="M0,0 H5 L0,4z" fill="#3c5ce0"/></svg>
  <div class="a" style="left:399px;top:111.6px;font-size:10.5px;line-height:10.5px;font-weight:bold;color:#fff">1 pending conversations</div>

  <div class="a" style="left:59.5px;top:149.5px;width:479px;height:215px;border-radius:4px;background:#2b2f2c;box-shadow:0 2px 12px rgba(0,0,0,.08)"></div>
  <svg class="a" style="left:59.5px;top:149.5px;border-radius:4px" width="479" height="215" viewBox="0 0 479 215">
<defs><clipPath id="fc"><rect width="479" height="215" rx="4"/></clipPath><linearGradient id="bg" x1="0" y1="0" x2="1" y2="0"><stop offset="0" stop-color="#222623"/><stop offset=".35" stop-color="#1f2220"/><stop offset=".7" stop-color="#242724"/><stop offset="1" stop-color="#2a2f2b"/></linearGradient><linearGradient id="tr" x1="0" y1="0" x2="1" y2="0"><stop offset="0" stop-color="#5f524e"/><stop offset=".25" stop-color="#85746f"/><stop offset=".7" stop-color="#7e6e69"/><stop offset="1" stop-color="#574a46"/></linearGradient><linearGradient id="trd" x1="0" y1="0" x2="1" y2="0"><stop offset="0" stop-color="#3b322f"/><stop offset=".5" stop-color="#54473f"/><stop offset="1" stop-color="#372d2a"/></linearGradient><filter id="nz" x="0" y="0" width="100%" height="100%"><feTurbulence type="fractalNoise" baseFrequency=".8" numOctaves="2" seed="3"/><feColorMatrix values="0 0 0 0 .55  0 0 0 0 .58  0 0 0 0 .56  0 0 0 .07 0"/></filter><filter id="nz2" x="0" y="0" width="100%" height="100%"><feTurbulence type="fractalNoise" baseFrequency=".05 .6" numOctaves="2" seed="9"/><feColorMatrix values="0 0 0 0 .1  0 0 0 0 .08  0 0 0 0 .07  0 0 0 .5 0"/><feComposite in2="SourceGraphic" operator="in"/></filter><linearGradient id="tri" x1="0" y1="0" x2="1" y2="0"><stop offset="0" stop-color="#5a4f4c"/><stop offset=".35" stop-color="#7a6d69"/><stop offset="1" stop-color="#3f3533"/></linearGradient><linearGradient id="trj" x1="0" y1="0" x2="1" y2="0"><stop offset="0" stop-color="#3a2f2b"/><stop offset=".5" stop-color="#4d3f39"/><stop offset="1" stop-color="#342a27"/></linearGradient><linearGradient id="hz" x1="0" y1="0" x2="1" y2="0"><stop offset=".45" stop-color="#46504a" stop-opacity="0"/><stop offset="1" stop-color="#46504a" stop-opacity=".35"/></linearGradient></defs><g clip-path="url(#fc)">
<rect width="479" height="215" fill="url(#bg)"/>
<rect width="479" height="215" filter="url(#nz)"/>
<rect width="479" height="215" fill="url(#hz)"/>
<rect x="15" y="0" width="15" height="215" fill="#1c1f1d" opacity="0.4"/>
<rect x="95" y="0" width="5" height="215" fill="#1b1d1b" opacity="0.5"/>
<rect x="150" y="0" width="15" height="215" fill="#2c2624" opacity="0.4"/>
<rect x="200" y="0" width="15" height="215" fill="#1f2321" opacity="0.35"/>
<rect x="257.4" y="0" width="15.300000000000011" height="215" fill="#342b28" opacity="0.45"/>
<rect x="283" y="0" width="7" height="215" fill="#242422" opacity="0.35"/>
<rect x="361.4" y="0" width="17.0" height="215" fill="#302826" opacity="0.45"/>
<rect x="395" y="0" width="10" height="215" fill="#202321" opacity="0.35"/>
<rect x="455" y="0" width="15" height="215" fill="#252927" opacity="0.35"/>
<path d="M214.8,120.4 Q225.5,122.9 236.2,127.2" stroke="#8c9591" stroke-width="0.60" fill="none" opacity="0.12"/>
<path d="M226.1,123.5 l7.3,-0.6" stroke="#8c9591" stroke-width="0.48" opacity="0.10"/>
<path d="M223.2,122.6 l3.4,-1.2" stroke="#8c9591" stroke-width="0.48" opacity="0.10"/>
<path d="M224.8,123.1 l5.8,-2.2" stroke="#8c9591" stroke-width="0.48" opacity="0.10"/>
<path d="M232.2,125.7 l3.4,-0.5" stroke="#8c9591" stroke-width="0.48" opacity="0.10"/>
<path d="M222.1,122.3 l2.2,2.4" stroke="#8c9591" stroke-width="0.48" opacity="0.10"/>
<path d="M286.7,42.0 Q272.5,40.9 258.2,42.0" stroke="#8c9591" stroke-width="0.60" fill="none" opacity="0.18"/>
<path d="M267.5,41.5 l-4.4,-3.9" stroke="#8c9591" stroke-width="0.48" opacity="0.14"/>
<path d="M275.2,41.4 l-4.3,1.6" stroke="#8c9591" stroke-width="0.48" opacity="0.14"/>
<path d="M269.6,41.4 l-2.6,-2.7" stroke="#8c9591" stroke-width="0.48" opacity="0.14"/>
<path d="M273.6,41.4 l-8.7,-4.3" stroke="#8c9591" stroke-width="0.48" opacity="0.14"/>
<path d="M461.1,11.2 Q480.7,7.9 500.3,7.7" stroke="#8c9591" stroke-width="0.60" fill="none" opacity="0.11"/>
<path d="M491.4,8.0 l4.0,-2.8" stroke="#8c9591" stroke-width="0.48" opacity="0.09"/>
<path d="M467.5,10.3 l5.1,-2.9" stroke="#8c9591" stroke-width="0.48" opacity="0.09"/>
<path d="M346.9,2.4 Q363.0,-3.6 379.1,-6.9" stroke="#8c9591" stroke-width="0.60" fill="none" opacity="0.17"/>
<path d="M364.9,-3.5 l6.5,-7.4" stroke="#8c9591" stroke-width="0.48" opacity="0.13"/>
<path d="M361.7,-2.6 l4.7,-3.4" stroke="#8c9591" stroke-width="0.48" opacity="0.13"/>
<path d="M374.0,-5.8 l8.2,5.5" stroke="#8c9591" stroke-width="0.48" opacity="0.13"/>
<path d="M352.3,0.4 l3.4,-2.6" stroke="#8c9591" stroke-width="0.48" opacity="0.13"/>
<path d="M56.0,94.9 Q39.8,91.2 23.6,90.1" stroke="#8c9591" stroke-width="0.60" fill="none" opacity="0.14"/>
<path d="M49.2,93.5 l-3.9,-2.2" stroke="#8c9591" stroke-width="0.48" opacity="0.11"/>
<path d="M171.3,133.8 Q152.0,131.9 132.7,133.2" stroke="#8c9591" stroke-width="0.60" fill="none" opacity="0.17"/>
<path d="M159.9,133.0 l-2.9,-2.9" stroke="#8c9591" stroke-width="0.48" opacity="0.14"/>
<path d="M157.8,132.9 l-3.2,-2.9" stroke="#8c9591" stroke-width="0.48" opacity="0.14"/>
<path d="M153.5,132.7 l-5.3,-3.5" stroke="#8c9591" stroke-width="0.48" opacity="0.14"/>
<path d="M162.3,133.1 l-2.9,1.5" stroke="#8c9591" stroke-width="0.48" opacity="0.14"/>
<path d="M345.7,55.3 Q354.0,52.1 362.4,50.4" stroke="#8c9591" stroke-width="0.60" fill="none" opacity="0.19"/>
<path d="M349.9,53.8 l4.5,-4.5" stroke="#8c9591" stroke-width="0.48" opacity="0.15"/>
<path d="M456.1,43.9 Q451.0,43.1 445.9,43.1" stroke="#8c9591" stroke-width="0.60" fill="none" opacity="0.13"/>
<path d="M453.1,43.5 l-5.0,-2.6" stroke="#8c9591" stroke-width="0.48" opacity="0.10"/>
<path d="M51.8,96.8 Q66.1,98.1 80.5,101.6" stroke="#8c9591" stroke-width="0.60" fill="none" opacity="0.17"/>
<path d="M69.6,99.3 l5.2,7.9" stroke="#8c9591" stroke-width="0.48" opacity="0.14"/>
<path d="M72.2,99.8 l8.6,-4.6" stroke="#8c9591" stroke-width="0.48" opacity="0.14"/>
<path d="M18.8,14.5 Q27.1,17.6 35.3,22.1" stroke="#8c9591" stroke-width="0.60" fill="none" opacity="0.11"/>
<path d="M26.2,17.5 l3.1,-1.1" stroke="#8c9591" stroke-width="0.48" opacity="0.09"/>
<path d="M33.4,21.1 l1.7,5.2" stroke="#8c9591" stroke-width="0.48" opacity="0.09"/>
<path d="M32.8,20.8 l5.5,-2.1" stroke="#8c9591" stroke-width="0.48" opacity="0.09"/>
<path d="M28.9,18.8 l4.1,6.1" stroke="#8c9591" stroke-width="0.48" opacity="0.09"/>
<path d="M21.5,15.5 l3.4,-0.9" stroke="#8c9591" stroke-width="0.48" opacity="0.09"/>
<path d="M495.5,189.2 Q505.5,190.4 515.5,193.3" stroke="#8c9591" stroke-width="0.60" fill="none" opacity="0.17"/>
<path d="M505.9,190.9 l6.5,-2.0" stroke="#8c9591" stroke-width="0.48" opacity="0.14"/>
<path d="M499.9,189.8 l2.9,-1.2" stroke="#8c9591" stroke-width="0.48" opacity="0.14"/>
<path d="M508.4,191.4 l4.9,8.1" stroke="#8c9591" stroke-width="0.48" opacity="0.14"/>
<path d="M504.4,190.6 l3.7,-1.6" stroke="#8c9591" stroke-width="0.48" opacity="0.14"/>
<path d="M371.2,73.6 Q382.9,70.0 394.5,68.3" stroke="#8c9591" stroke-width="0.60" fill="none" opacity="0.15"/>
<path d="M378.4,71.6 l3.1,-5.2" stroke="#8c9591" stroke-width="0.48" opacity="0.12"/>
<path d="M381.9,70.7 l6.9,1.6" stroke="#8c9591" stroke-width="0.48" opacity="0.12"/>
<path d="M377.2,71.9 l3.2,-4.4" stroke="#8c9591" stroke-width="0.48" opacity="0.12"/>
<path d="M473.1,59.5 Q467.2,58.9 461.4,59.2" stroke="#8c9591" stroke-width="0.60" fill="none" opacity="0.21"/>
<path d="M467.8,59.1 l-5.1,4.3" stroke="#8c9591" stroke-width="0.48" opacity="0.17"/>
<path d="M463.5,59.1 l-6.9,2.6" stroke="#8c9591" stroke-width="0.48" opacity="0.17"/>
<path d="M471.0,59.3 l-6.8,-6.1" stroke="#8c9591" stroke-width="0.48" opacity="0.17"/>
<path d="M468.7,59.2 l-4.2,-3.6" stroke="#8c9591" stroke-width="0.48" opacity="0.17"/>
<path d="M190.3,40.8 Q197.7,37.8 205.1,36.0" stroke="#8c9591" stroke-width="0.60" fill="none" opacity="0.11"/>
<path d="M197.8,38.1 l6.4,3.8" stroke="#8c9591" stroke-width="0.48" opacity="0.08"/>
<path d="M335.3,42.9 Q343.2,43.7 351.2,45.9" stroke="#8c9591" stroke-width="0.60" fill="none" opacity="0.19"/>
<path d="M346.7,44.8 l2.5,3.4" stroke="#8c9591" stroke-width="0.48" opacity="0.15"/>
<path d="M344.5,44.3 l9.0,-3.5" stroke="#8c9591" stroke-width="0.48" opacity="0.15"/>
<path d="M347.7,45.0 l8.7,-3.4" stroke="#8c9591" stroke-width="0.48" opacity="0.15"/>
<path d="M349.0,45.3 l4.1,4.0" stroke="#8c9591" stroke-width="0.48" opacity="0.15"/>
<path d="M345.6,44.5 l6.4,6.9" stroke="#8c9591" stroke-width="0.48" opacity="0.15"/>
<path d="M318.7,108.1 Q330.1,108.7 341.4,111.1" stroke="#8c9591" stroke-width="0.60" fill="none" opacity="0.12"/>
<path d="M326.0,108.6 l6.9,-6.2" stroke="#8c9591" stroke-width="0.48" opacity="0.10"/>
<path d="M258.7,170.0 Q266.7,170.9 274.8,173.1" stroke="#8c9591" stroke-width="0.60" fill="none" opacity="0.10"/>
<path d="M262.2,170.5 l3.6,4.9" stroke="#8c9591" stroke-width="0.48" opacity="0.08"/>
<path d="M267.4,171.4 l3.0,-1.2" stroke="#8c9591" stroke-width="0.48" opacity="0.08"/>
<path d="M261.5,170.4 l6.2,-2.7" stroke="#8c9591" stroke-width="0.48" opacity="0.08"/>
<path d="M274.0,172.9 l4.8,8.0" stroke="#8c9591" stroke-width="0.48" opacity="0.08"/>
<path d="M267.4,171.4 l8.2,-5.1" stroke="#8c9591" stroke-width="0.48" opacity="0.08"/>
<path d="M208.1,120.1 Q196.2,122.8 184.4,127.4" stroke="#8c9591" stroke-width="0.60" fill="none" opacity="0.17"/>
<path d="M191.8,124.7 l-9.5,-2.0" stroke="#8c9591" stroke-width="0.48" opacity="0.13"/>
<path d="M201.8,121.7 l-4.0,5.5" stroke="#8c9591" stroke-width="0.48" opacity="0.13"/>
<path d="M200.7,122.0 l-6.3,-2.4" stroke="#8c9591" stroke-width="0.48" opacity="0.13"/>
<path d="M-5.6,208.4 Q6.0,212.7 17.5,218.9" stroke="#8c9591" stroke-width="0.60" fill="none" opacity="0.11"/>
<path d="M10.7,215.4 l1.9,2.9" stroke="#8c9591" stroke-width="0.48" opacity="0.09"/>
<path d="M476.6,198.5 Q484.6,197.9 492.5,198.4" stroke="#8c9591" stroke-width="0.60" fill="none" opacity="0.14"/>
<path d="M485.7,198.2 l3.0,2.3" stroke="#8c9591" stroke-width="0.48" opacity="0.11"/>
<path d="M490.8,198.3 l3.6,-1.4" stroke="#8c9591" stroke-width="0.48" opacity="0.11"/>
<path d="M481.0,198.3 l2.7,1.5" stroke="#8c9591" stroke-width="0.48" opacity="0.11"/>
<path d="M483.5,198.2 l6.0,-4.2" stroke="#8c9591" stroke-width="0.48" opacity="0.11"/>
<path d="M282.2,183.2 Q297.4,184.6 312.7,188.6" stroke="#8c9591" stroke-width="0.60" fill="none" opacity="0.21"/>
<path d="M295.9,185.0 l5.3,-2.6" stroke="#8c9591" stroke-width="0.48" opacity="0.16"/>
<path d="M428.3,114.8 Q416.4,117.6 404.5,122.3" stroke="#8c9591" stroke-width="0.60" fill="none" opacity="0.17"/>
<path d="M420.3,116.9 l-3.5,7.4" stroke="#8c9591" stroke-width="0.48" opacity="0.14"/>
<path d="M418.8,117.4 l-5.1,-0.8" stroke="#8c9591" stroke-width="0.48" opacity="0.14"/>
<path d="M498.1,190.8 Q480.9,183.6 463.6,179.3" stroke="#8c9591" stroke-width="0.60" fill="none" opacity="0.11"/>
<path d="M490.3,187.7 l-8.4,2.7" stroke="#8c9591" stroke-width="0.48" opacity="0.09"/>
<path d="M473.5,182.0 l-3.3,-2.9" stroke="#8c9591" stroke-width="0.48" opacity="0.09"/>
<path d="M477.2,183.2 l-5.5,0.5" stroke="#8c9591" stroke-width="0.48" opacity="0.09"/>
<path d="M479.0,183.7 l-3.8,-7.4" stroke="#8c9591" stroke-width="0.48" opacity="0.09"/>
<path d="M230.2,5.2 Q236.3,3.0 242.4,1.8" stroke="#8c9591" stroke-width="0.60" fill="none" opacity="0.12"/>
<path d="M241.7,1.9 l5.7,-7.6" stroke="#8c9591" stroke-width="0.48" opacity="0.10"/>
<path d="M233.3,4.1 l4.0,-6.6" stroke="#8c9591" stroke-width="0.48" opacity="0.10"/>
<path d="M149.6,100.4 Q160.5,100.5 171.3,102.3" stroke="#8c9591" stroke-width="0.60" fill="none" opacity="0.10"/>
<path d="M167.5,101.7 l3.5,2.5" stroke="#8c9591" stroke-width="0.48" opacity="0.08"/>
<path d="M172.1,198.2 Q166.8,199.2 161.5,201.0" stroke="#8c9591" stroke-width="0.60" fill="none" opacity="0.14"/>
<path d="M163.7,200.3 l-4.9,6.2" stroke="#8c9591" stroke-width="0.48" opacity="0.11"/>
<path d="M79.1,125.7 Q95.6,120.8 112.1,118.6" stroke="#8c9591" stroke-width="0.60" fill="none" opacity="0.21"/>
<path d="M105.6,119.6 l4.8,3.3" stroke="#8c9591" stroke-width="0.48" opacity="0.17"/>
<path d="M102.4,120.1 l6.0,-5.8" stroke="#8c9591" stroke-width="0.48" opacity="0.17"/>
<path d="M355.0,15.2 Q363.3,11.4 371.6,9.1" stroke="#8c9591" stroke-width="0.60" fill="none" opacity="0.21"/>
<path d="M358.2,13.8 l4.8,0.9" stroke="#8c9591" stroke-width="0.48" opacity="0.17"/>
<path d="M366.3,10.8 l4.3,-5.5" stroke="#8c9591" stroke-width="0.48" opacity="0.17"/>
<path d="M370.8,9.4 l3.4,-6.7" stroke="#8c9591" stroke-width="0.48" opacity="0.17"/>
<path d="M370.5,9.5 l1.5,-2.8" stroke="#8c9591" stroke-width="0.48" opacity="0.17"/>
<path d="M360.9,12.7 l2.7,-5.2" stroke="#8c9591" stroke-width="0.48" opacity="0.17"/>
<path d="M316.3,2.3 Q323.8,4.5 331.4,7.9" stroke="#8c9591" stroke-width="0.60" fill="none" opacity="0.17"/>
<path d="M323.6,4.7 l6.3,-2.1" stroke="#8c9591" stroke-width="0.48" opacity="0.13"/>
<path d="M328.3,6.5 l3.5,-0.7" stroke="#8c9591" stroke-width="0.48" opacity="0.13"/>
<path d="M329.9,7.2 l5.2,-2.4" stroke="#8c9591" stroke-width="0.48" opacity="0.13"/>
<path d="M325.1,5.2 l2.6,6.7" stroke="#8c9591" stroke-width="0.48" opacity="0.13"/>
<path d="M323.6,4.7 l4.2,5.2" stroke="#8c9591" stroke-width="0.48" opacity="0.13"/>
<path d="M128.3,140.8 Q142.6,142.8 156.9,147.1" stroke="#8c9591" stroke-width="0.60" fill="none" opacity="0.10"/>
<path d="M146.0,144.2 l4.3,6.1" stroke="#8c9591" stroke-width="0.48" opacity="0.08"/>
<path d="M141.5,143.2 l7.7,5.2" stroke="#8c9591" stroke-width="0.48" opacity="0.08"/>
<path d="M493.2,203.1 Q476.9,197.7 460.6,195.1" stroke="#8c9591" stroke-width="0.60" fill="none" opacity="0.19"/>
<path d="M462.9,195.4 l-2.2,-4.2" stroke="#8c9591" stroke-width="0.48" opacity="0.15"/>
<path d="M469.5,196.7 l-3.9,-4.9" stroke="#8c9591" stroke-width="0.48" opacity="0.15"/>
<path d="M485.3,200.6 l-7.3,1.2" stroke="#8c9591" stroke-width="0.48" opacity="0.15"/>
<path d="M426.9,76.7 Q420.9,75.9 415.0,76.1" stroke="#8c9591" stroke-width="0.60" fill="none" opacity="0.18"/>
<path d="M419.4,76.1 l-6.6,3.5" stroke="#8c9591" stroke-width="0.48" opacity="0.14"/>
<path d="M418.0,76.1 l-5.4,-6.8" stroke="#8c9591" stroke-width="0.48" opacity="0.14"/>
<path d="M418.1,76.1 l-3.7,-2.9" stroke="#8c9591" stroke-width="0.48" opacity="0.14"/>
<path d="M422.2,76.2 l-5.9,2.8" stroke="#8c9591" stroke-width="0.48" opacity="0.14"/>
<path d="M296.5,155.9 Q282.7,157.9 268.9,162.1" stroke="#8c9591" stroke-width="0.60" fill="none" opacity="0.12"/>
<path d="M281.3,158.8 l-6.3,-4.2" stroke="#8c9591" stroke-width="0.48" opacity="0.10"/>
<path d="M291.5,156.7 l-2.6,2.2" stroke="#8c9591" stroke-width="0.48" opacity="0.10"/>
<path d="M-6.0,8.2 Q-17.8,2.5 -29.6,-1.1" stroke="#8c9591" stroke-width="0.60" fill="none" opacity="0.11"/>
<path d="M-20.0,2.2 l-7.2,1.7" stroke="#8c9591" stroke-width="0.48" opacity="0.09"/>
<path d="M-16.3,3.7 l-5.0,1.9" stroke="#8c9591" stroke-width="0.48" opacity="0.09"/>
<path d="M415.2,16.0 Q404.5,18.2 393.8,22.2" stroke="#8c9591" stroke-width="0.60" fill="none" opacity="0.20"/>
<path d="M404.4,18.7 l-4.1,7.2" stroke="#8c9591" stroke-width="0.48" opacity="0.16"/>
<path d="M405.7,18.3 l-5.4,5.3" stroke="#8c9591" stroke-width="0.48" opacity="0.16"/>
<path d="M373.9,177.6 Q363.1,175.5 352.4,175.2" stroke="#8c9591" stroke-width="0.60" fill="none" opacity="0.11"/>
<path d="M369.3,176.8 l-2.8,2.2" stroke="#8c9591" stroke-width="0.48" opacity="0.09"/>
<path d="M362.7,175.9 l-7.7,-4.2" stroke="#8c9591" stroke-width="0.48" opacity="0.09"/>
<path d="M367.0,176.5 l-5.2,-5.6" stroke="#8c9591" stroke-width="0.48" opacity="0.09"/>
<path d="M236.8,164.3 Q244.9,161.0 253.0,159.1" stroke="#8c9591" stroke-width="0.60" fill="none" opacity="0.14"/>
<path d="M244.0,161.6 l3.6,1.3" stroke="#8c9591" stroke-width="0.48" opacity="0.11"/>
<path d="M251.1,159.5 l9.2,2.5" stroke="#8c9591" stroke-width="0.48" opacity="0.11"/>
<path d="M249.6,159.9 l5.1,0.8" stroke="#8c9591" stroke-width="0.48" opacity="0.11"/>
<path d="M482.3,156.9 Q477.1,158.0 472.0,159.9" stroke="#8c9591" stroke-width="0.60" fill="none" opacity="0.10"/>
<path d="M475.9,158.6 l-4.2,7.4" stroke="#8c9591" stroke-width="0.48" opacity="0.08"/>
<path d="M476.3,158.5 l-8.7,-1.4" stroke="#8c9591" stroke-width="0.48" opacity="0.08"/>
<path d="M474.5,159.0 l-4.5,8.0" stroke="#8c9591" stroke-width="0.48" opacity="0.08"/>
<path d="M478.9,157.7 l-3.2,-1.2" stroke="#8c9591" stroke-width="0.48" opacity="0.08"/>
<path d="M481.6,140.0 Q486.6,139.8 491.6,140.4" stroke="#8c9591" stroke-width="0.60" fill="none" opacity="0.19"/>
<path d="M485.8,140.0 l3.5,-3.5" stroke="#8c9591" stroke-width="0.48" opacity="0.16"/>
<path d="M24.0,136.3 Q18.6,137.4 13.3,139.4" stroke="#8c9591" stroke-width="0.60" fill="none" opacity="0.15"/>
<path d="M18.2,137.8 l-4.9,8.0" stroke="#8c9591" stroke-width="0.48" opacity="0.12"/>
<path d="M19.0,137.5 l-3.0,4.4" stroke="#8c9591" stroke-width="0.48" opacity="0.12"/>
<path d="M236.2,115.5 Q221.9,119.7 207.5,126.4" stroke="#8c9591" stroke-width="0.60" fill="none" opacity="0.15"/>
<path d="M212.3,124.2 l-7.8,-3.8" stroke="#8c9591" stroke-width="0.48" opacity="0.12"/>
<path d="M209.9,125.3 l-3.5,6.6" stroke="#8c9591" stroke-width="0.48" opacity="0.12"/>
<path d="M213.5,123.7 l-2.2,5.5" stroke="#8c9591" stroke-width="0.48" opacity="0.12"/>
<path d="M107.5,34.9 Q122.3,31.4 137.1,30.2" stroke="#8c9591" stroke-width="0.60" fill="none" opacity="0.15"/>
<path d="M118.9,32.5 l7.1,-6.7" stroke="#8c9591" stroke-width="0.48" opacity="0.12"/>
<path d="M129.2,31.0 l3.1,-4.1" stroke="#8c9591" stroke-width="0.48" opacity="0.12"/>
<path d="M116.2,33.0 l3.4,0.7" stroke="#8c9591" stroke-width="0.48" opacity="0.12"/>
<path d="M123.3,31.8 l8.3,2.1" stroke="#8c9591" stroke-width="0.48" opacity="0.12"/>
<path d="M116.3,33.0 l3.1,-3.3" stroke="#8c9591" stroke-width="0.48" opacity="0.12"/>
<path d="M224.9,109.4 Q231.8,107.5 238.6,106.7" stroke="#8c9591" stroke-width="0.60" fill="none" opacity="0.12"/>
<path d="M233.8,107.4 l7.9,5.5" stroke="#8c9591" stroke-width="0.48" opacity="0.10"/>
<path d="M232.3,107.7 l5.1,2.8" stroke="#8c9591" stroke-width="0.48" opacity="0.10"/>
<path d="M235.4,107.1 l2.7,-2.5" stroke="#8c9591" stroke-width="0.48" opacity="0.10"/>
<path d="M92.8,28.9 Q111.8,32.3 130.8,38.9" stroke="#8c9591" stroke-width="0.60" fill="none" opacity="0.19"/>
<path d="M118.5,34.9 l4.0,-2.4" stroke="#8c9591" stroke-width="0.48" opacity="0.15"/>
<path d="M449.8,96.8 Q434.5,96.9 419.1,99.6" stroke="#8c9591" stroke-width="0.60" fill="none" opacity="0.12"/>
<path d="M426.3,98.5 l-3.3,-2.2" stroke="#8c9591" stroke-width="0.48" opacity="0.10"/>
<path d="M420.8,99.3 l-4.6,-1.6" stroke="#8c9591" stroke-width="0.48" opacity="0.10"/>
<path d="M379.8,0.3 Q363.8,-7.2 347.8,-11.9" stroke="#8c9591" stroke-width="0.60" fill="none" opacity="0.13"/>
<path d="M372.5,-3.0 l-6.4,0.2" stroke="#8c9591" stroke-width="0.48" opacity="0.11"/>
<path d="M355.8,-9.4 l-6.8,-0.0" stroke="#8c9591" stroke-width="0.48" opacity="0.11"/>
<path d="M370.2,-4.0 l-1.9,-3.9" stroke="#8c9591" stroke-width="0.48" opacity="0.11"/>
<path d="M363.7,-6.5 l-3.2,0.8" stroke="#8c9591" stroke-width="0.48" opacity="0.11"/>
<path d="M371.0,-3.6 l-8.7,1.3" stroke="#8c9591" stroke-width="0.48" opacity="0.11"/>
<path d="M190.4,119.6 Q204.1,113.0 217.7,108.8" stroke="#8c9591" stroke-width="0.60" fill="none" opacity="0.11"/>
<path d="M196.8,116.7 l5.4,2.0" stroke="#8c9591" stroke-width="0.48" opacity="0.09"/>
<path d="M211.6,110.8 l3.9,-0.1" stroke="#8c9591" stroke-width="0.48" opacity="0.09"/>
<path d="M175.7,152.7 Q167.5,149.1 159.3,146.9" stroke="#8c9591" stroke-width="0.60" fill="none" opacity="0.19"/>
<path d="M161.4,147.5 l-3.6,2.0" stroke="#8c9591" stroke-width="0.48" opacity="0.15"/>
<path d="M163.4,148.1 l-9.2,2.9" stroke="#8c9591" stroke-width="0.48" opacity="0.15"/>
<path d="M25.1,40.6 Q40.6,37.0 56.2,35.9" stroke="#8c9591" stroke-width="0.60" fill="none" opacity="0.21"/>
<path d="M41.4,37.5 l6.0,4.4" stroke="#8c9591" stroke-width="0.48" opacity="0.17"/>
<path d="M32.1,39.1 l3.4,-2.1" stroke="#8c9591" stroke-width="0.48" opacity="0.17"/>
<path d="M45.4,36.9 l3.2,-2.8" stroke="#8c9591" stroke-width="0.48" opacity="0.17"/>
<path d="M50.6,36.4 l6.1,-3.7" stroke="#8c9591" stroke-width="0.48" opacity="0.17"/>
<path d="M30.6,39.4 l9.1,4.0" stroke="#8c9591" stroke-width="0.48" opacity="0.17"/>
<path d="M17.7,197.9 Q35.6,190.6 53.5,186.3" stroke="#8c9591" stroke-width="0.60" fill="none" opacity="0.12"/>
<path d="M46.6,188.0 l5.0,2.8" stroke="#8c9591" stroke-width="0.48" opacity="0.10"/>
<path d="M40.9,189.7 l6.9,4.2" stroke="#8c9591" stroke-width="0.48" opacity="0.10"/>
<path d="M389.8,141.9 Q382.0,139.1 374.1,137.6" stroke="#8c9591" stroke-width="0.60" fill="none" opacity="0.14"/>
<path d="M386.1,140.7 l-5.0,2.7" stroke="#8c9591" stroke-width="0.48" opacity="0.11"/>
<path d="M377.1,138.2 l-5.3,-5.0" stroke="#8c9591" stroke-width="0.48" opacity="0.11"/>
<path d="M380.7,139.1 l-3.5,-3.7" stroke="#8c9591" stroke-width="0.48" opacity="0.11"/>
<path d="M381.2,139.2 l-1.7,-3.6" stroke="#8c9591" stroke-width="0.48" opacity="0.11"/>
<path d="M247.8,153.8 Q235.8,147.5 223.9,143.3" stroke="#8c9591" stroke-width="0.60" fill="none" opacity="0.18"/>
<path d="M241.6,150.7 l-6.1,1.9" stroke="#8c9591" stroke-width="0.48" opacity="0.14"/>
<path d="M150.8,199.7 Q158.6,201.8 166.5,205.2" stroke="#8c9591" stroke-width="0.60" fill="none" opacity="0.15"/>
<path d="M156.2,201.3 l6.7,-2.1" stroke="#8c9591" stroke-width="0.48" opacity="0.12"/>
<path d="M156.5,201.4 l5.1,7.9" stroke="#8c9591" stroke-width="0.48" opacity="0.12"/>
<path d="M43.7,177.3 Q58.5,174.3 73.4,173.7" stroke="#8c9591" stroke-width="0.60" fill="none" opacity="0.19"/>
<path d="M67.9,174.0 l3.3,-2.8" stroke="#8c9591" stroke-width="0.48" opacity="0.15"/>
<path d="M57.7,175.0 l6.9,-5.0" stroke="#8c9591" stroke-width="0.48" opacity="0.15"/>
<path d="M64.1,174.3 l7.0,4.3" stroke="#8c9591" stroke-width="0.48" opacity="0.15"/>
<path d="M312.3,164.1 Q305.1,163.3 297.9,163.7" stroke="#8c9591" stroke-width="0.60" fill="none" opacity="0.12"/>
<path d="M308.8,163.8 l-4.8,3.3" stroke="#8c9591" stroke-width="0.48" opacity="0.09"/>
<path d="M307.1,163.7 l-6.6,2.4" stroke="#8c9591" stroke-width="0.48" opacity="0.09"/>
<path d="M301.2,163.6 l-6.7,-4.5" stroke="#8c9591" stroke-width="0.48" opacity="0.09"/>
<path d="M304.4,163.6 l-3.2,1.9" stroke="#8c9591" stroke-width="0.48" opacity="0.09"/>
<path d="M303.8,148.2 Q319.8,146.7 335.8,147.8" stroke="#8c9591" stroke-width="0.60" fill="none" opacity="0.22"/>
<path d="M329.7,147.5 l2.6,-2.8" stroke="#8c9591" stroke-width="0.48" opacity="0.18"/>
<path d="M322.0,147.3 l5.7,3.5" stroke="#8c9591" stroke-width="0.48" opacity="0.18"/>
<path d="M309.2,147.8 l7.1,6.1" stroke="#8c9591" stroke-width="0.48" opacity="0.18"/>
<path d="M331.6,147.6 l6.1,5.4" stroke="#8c9591" stroke-width="0.48" opacity="0.18"/>
<path d="M138.2,127.6 Q130.6,129.3 123.1,132.3" stroke="#8c9591" stroke-width="0.60" fill="none" opacity="0.13"/>
<path d="M124.1,131.9 l-6.0,-2.0" stroke="#8c9591" stroke-width="0.48" opacity="0.10"/>
<path d="M133.0,128.9 l-2.1,4.7" stroke="#8c9591" stroke-width="0.48" opacity="0.10"/>
<path d="M125.3,131.4 l-4.5,8.9" stroke="#8c9591" stroke-width="0.48" opacity="0.10"/>
<path d="M130.8,129.6 l-8.0,-3.3" stroke="#8c9591" stroke-width="0.48" opacity="0.10"/>
<path d="M198.8,26.4 Q193.4,27.3 188.0,29.2" stroke="#8c9591" stroke-width="0.60" fill="none" opacity="0.11"/>
<path d="M192.2,27.9 l-4.6,4.1" stroke="#8c9591" stroke-width="0.48" opacity="0.09"/>
<path d="M194.6,27.3 l-5.0,-1.7" stroke="#8c9591" stroke-width="0.48" opacity="0.09"/>
<path d="M193.3,27.6 l-6.5,-1.9" stroke="#8c9591" stroke-width="0.48" opacity="0.09"/>
<path d="M192.1,27.9 l-3.1,-1.1" stroke="#8c9591" stroke-width="0.48" opacity="0.09"/>
<path d="M194.5,27.3 l-4.4,-2.9" stroke="#8c9591" stroke-width="0.48" opacity="0.09"/>
<path d="M487.2,101.6 Q480.3,103.3 473.4,106.1" stroke="#8c9591" stroke-width="0.60" fill="none" opacity="0.18"/>
<path d="M483.0,102.7 l-3.8,8.0" stroke="#8c9591" stroke-width="0.48" opacity="0.15"/>
<path d="M-11.7,136.6 Q-23.9,132.7 -36.1,130.9" stroke="#8c9591" stroke-width="0.60" fill="none" opacity="0.21"/>
<path d="M-28.0,132.3 l-4.2,3.0" stroke="#8c9591" stroke-width="0.48" opacity="0.17"/>
<path d="M122.2,90.4 Q113.5,93.3 104.9,97.6" stroke="#8c9591" stroke-width="0.60" fill="none" opacity="0.19"/>
<path d="M118.5,91.7 l-3.1,3.3" stroke="#8c9591" stroke-width="0.48" opacity="0.15"/>
<path d="M110.0,95.2 l-4.8,-1.0" stroke="#8c9591" stroke-width="0.48" opacity="0.15"/>
<path d="M115.5,92.8 l-4.7,-1.3" stroke="#8c9591" stroke-width="0.48" opacity="0.15"/>
<path d="M116.4,92.5 l-4.9,-1.5" stroke="#8c9591" stroke-width="0.48" opacity="0.15"/>
<path d="M123.7,137.6 Q113.0,132.6 102.4,129.3" stroke="#8c9591" stroke-width="0.60" fill="none" opacity="0.21"/>
<path d="M111.5,132.4 l-3.2,0.9" stroke="#8c9591" stroke-width="0.48" opacity="0.17"/>
<path d="M199.8,122.2 Q191.4,123.5 183.1,126.0" stroke="#8c9591" stroke-width="0.60" fill="none" opacity="0.13"/>
<path d="M187.5,124.8 l-2.6,-1.9" stroke="#8c9591" stroke-width="0.48" opacity="0.10"/>
<path d="M196.8,122.7 l-5.2,3.4" stroke="#8c9591" stroke-width="0.48" opacity="0.10"/>
<path d="M185.4,125.4 l-3.1,-1.4" stroke="#8c9591" stroke-width="0.48" opacity="0.10"/>
<path d="M314.7,77.3 Q331.3,76.2 347.8,77.8" stroke="#8c9591" stroke-width="0.60" fill="none" opacity="0.16"/>
<path d="M339.4,77.2 l6.2,-2.6" stroke="#8c9591" stroke-width="0.48" opacity="0.13"/>
<path d="M331.2,76.9 l5.5,5.4" stroke="#8c9591" stroke-width="0.48" opacity="0.13"/>
<path d="M340.6,77.2 l3.7,2.8" stroke="#8c9591" stroke-width="0.48" opacity="0.13"/>
<path d="M342.2,77.4 l6.7,2.7" stroke="#8c9591" stroke-width="0.48" opacity="0.13"/>
<path d="M335.5,77.0 l5.5,5.9" stroke="#8c9591" stroke-width="0.48" opacity="0.13"/>
<path d="M73.4,32.6 Q60.2,35.2 46.9,39.9" stroke="#8c9591" stroke-width="0.60" fill="none" opacity="0.16"/>
<path d="M51.3,38.4 l-2.7,-1.7" stroke="#8c9591" stroke-width="0.48" opacity="0.13"/>
<path d="M57.4,36.5 l-6.2,-2.7" stroke="#8c9591" stroke-width="0.48" opacity="0.13"/>
<path d="M68.3,33.7 l-3.0,5.2" stroke="#8c9591" stroke-width="0.48" opacity="0.13"/>
<path d="M363.3,167.9 Q368.5,168.9 373.7,170.8" stroke="#8c9591" stroke-width="0.60" fill="none" opacity="0.12"/>
<path d="M366.9,168.7 l5.1,4.0" stroke="#8c9591" stroke-width="0.48" opacity="0.10"/>
<path d="M368.2,169.1 l5.0,-2.4" stroke="#8c9591" stroke-width="0.48" opacity="0.10"/>
<path d="M372.8,170.5 l3.9,-0.6" stroke="#8c9591" stroke-width="0.48" opacity="0.10"/>
<path d="M216.3,160.2 Q212.3,159.5 208.2,159.5" stroke="#8c9591" stroke-width="0.60" fill="none" opacity="0.16"/>
<path d="M212.6,159.7 l-3.7,3.5" stroke="#8c9591" stroke-width="0.48" opacity="0.13"/>
<path d="M484.3,146.2 Q476.0,142.6 467.8,140.5" stroke="#8c9591" stroke-width="0.60" fill="none" opacity="0.20"/>
<path d="M475.7,142.9 l-9.4,1.7" stroke="#8c9591" stroke-width="0.48" opacity="0.16"/>
<path d="M469.3,140.9 l-7.2,-6.1" stroke="#8c9591" stroke-width="0.48" opacity="0.16"/>
<path d="M476.5,143.1 l-3.6,-6.6" stroke="#8c9591" stroke-width="0.48" opacity="0.16"/>
<path d="M474.3,142.4 l-5.7,-7.5" stroke="#8c9591" stroke-width="0.48" opacity="0.16"/>
<path d="M183.9,181.3 Q193.2,176.6 202.5,173.5" stroke="#8c9591" stroke-width="0.60" fill="none" opacity="0.15"/>
<path d="M189.4,178.6 l3.7,-5.7" stroke="#8c9591" stroke-width="0.48" opacity="0.12"/>
<path d="M192.7,177.2 l7.0,1.4" stroke="#8c9591" stroke-width="0.48" opacity="0.12"/>
<path d="M234.4,134.7 Q217.2,128.8 200.0,125.7" stroke="#8c9591" stroke-width="0.60" fill="none" opacity="0.15"/>
<path d="M228.0,132.6 l-4.5,2.0" stroke="#8c9591" stroke-width="0.48" opacity="0.12"/>
<path d="M249.3,159.4 Q262.3,160.1 275.2,162.8" stroke="#8c9591" stroke-width="0.60" fill="none" opacity="0.13"/>
<path d="M260.7,160.4 l3.5,2.1" stroke="#8c9591" stroke-width="0.48" opacity="0.10"/>
<path d="M105.0,180.5 Q100.7,179.4 96.5,179.1" stroke="#8c9591" stroke-width="0.60" fill="none" opacity="0.15"/>
<path d="M97.9,179.2 l-4.7,3.2" stroke="#8c9591" stroke-width="0.48" opacity="0.12"/>
<path d="M249.5,11.8 Q263.2,10.6 277.0,11.5" stroke="#8c9591" stroke-width="0.60" fill="none" opacity="0.12"/>
<path d="M266.7,11.1 l2.7,1.7" stroke="#8c9591" stroke-width="0.48" opacity="0.10"/>
<path d="M264.1,11.1 l6.9,3.8" stroke="#8c9591" stroke-width="0.48" opacity="0.10"/>
<path d="M263.6,11.1 l3.9,-4.0" stroke="#8c9591" stroke-width="0.48" opacity="0.10"/>
<path d="M265.4,11.1 l5.2,-3.3" stroke="#8c9591" stroke-width="0.48" opacity="0.10"/>
<path d="M272.7,11.3 l3.9,2.3" stroke="#8c9591" stroke-width="0.48" opacity="0.10"/>
<path d="M297.3,30.2 Q281.3,28.6 265.4,29.7" stroke="#8c9591" stroke-width="0.60" fill="none" opacity="0.10"/>
<path d="M275.6,29.3 l-2.7,-2.1" stroke="#8c9591" stroke-width="0.48" opacity="0.08"/>
<path d="M283.5,29.3 l-3.5,1.7" stroke="#8c9591" stroke-width="0.48" opacity="0.08"/>
<path d="M276.3,29.3 l-3.3,1.4" stroke="#8c9591" stroke-width="0.48" opacity="0.08"/>
<path d="M235.8,105.3 Q244.2,106.2 252.7,108.4" stroke="#8c9591" stroke-width="0.60" fill="none" opacity="0.13"/>
<path d="M241.1,106.0 l5.4,6.4" stroke="#8c9591" stroke-width="0.48" opacity="0.10"/>
<path d="M241.6,106.1 l2.0,3.1" stroke="#8c9591" stroke-width="0.48" opacity="0.10"/>
<path d="M249.2,107.5 l4.0,4.9" stroke="#8c9591" stroke-width="0.48" opacity="0.10"/>
<path d="M245.8,106.8 l6.3,-4.7" stroke="#8c9591" stroke-width="0.48" opacity="0.10"/>
<path d="M42.5,195.6 Q50.8,194.0 59.1,193.8" stroke="#8c9591" stroke-width="0.60" fill="none" opacity="0.20"/>
<path d="M51.2,194.3 l5.1,1.5" stroke="#8c9591" stroke-width="0.48" opacity="0.16"/>
<path d="M45.4,195.1 l4.5,2.7" stroke="#8c9591" stroke-width="0.48" opacity="0.16"/>
<path d="M48.4,194.6 l5.4,-5.5" stroke="#8c9591" stroke-width="0.48" opacity="0.16"/>
<path d="M179.5,73.4 Q183.9,73.9 188.4,75.0" stroke="#8c9591" stroke-width="0.60" fill="none" opacity="0.13"/>
<path d="M185.3,74.3 l4.8,5.5" stroke="#8c9591" stroke-width="0.48" opacity="0.10"/>
<path d="M13.0,14.7 Q31.0,11.4 49.0,11.0" stroke="#8c9591" stroke-width="0.60" fill="none" opacity="0.21"/>
<path d="M41.5,11.3 l7.1,3.1" stroke="#8c9591" stroke-width="0.48" opacity="0.17"/>
<path d="M167.0,210.1 Q153.6,206.2 140.2,204.6" stroke="#8c9591" stroke-width="0.60" fill="none" opacity="0.13"/>
<path d="M158.0,207.7 l-3.0,0.4" stroke="#8c9591" stroke-width="0.48" opacity="0.10"/>
<path d="M151.3,206.3 l-5.7,-6.9" stroke="#8c9591" stroke-width="0.48" opacity="0.10"/>
<path d="M271.0,178.7 Q278.8,175.2 286.5,173.1" stroke="#8c9591" stroke-width="0.60" fill="none" opacity="0.10"/>
<path d="M282.0,174.5 l3.4,-7.0" stroke="#8c9591" stroke-width="0.48" opacity="0.08"/>
<path d="M275.3,176.9 l6.7,3.0" stroke="#8c9591" stroke-width="0.48" opacity="0.08"/>
<path d="M132.4,89.2 Q148.4,88.4 164.4,90.1" stroke="#8c9591" stroke-width="0.60" fill="none" opacity="0.13"/>
<path d="M146.5,89.0 l5.7,-5.6" stroke="#8c9591" stroke-width="0.48" opacity="0.10"/>
<path d="M162.5,89.9 l7.9,3.7" stroke="#8c9591" stroke-width="0.48" opacity="0.10"/>
<path d="M214.4,166.0 Q219.0,166.1 223.6,167.0" stroke="#8c9591" stroke-width="0.60" fill="none" opacity="0.15"/>
<path d="M216.2,166.1 l4.0,2.6" stroke="#8c9591" stroke-width="0.48" opacity="0.12"/>
<path d="M220.4,166.5 l4.7,2.9" stroke="#8c9591" stroke-width="0.48" opacity="0.12"/>
<path d="M222.1,166.7 l3.8,-2.3" stroke="#8c9591" stroke-width="0.48" opacity="0.12"/>
<path d="M218.9,166.3 l5.1,6.1" stroke="#8c9591" stroke-width="0.48" opacity="0.12"/>
<path d="M45.0,81.0 Q52.4,78.3 59.8,76.9" stroke="#8c9591" stroke-width="0.60" fill="none" opacity="0.10"/>
<path d="M55.4,77.8 l6.2,-5.9" stroke="#8c9591" stroke-width="0.48" opacity="0.08"/>
<path d="M50.4,79.2 l4.6,1.3" stroke="#8c9591" stroke-width="0.48" opacity="0.08"/>
<path d="M55.3,77.9 l2.2,-3.3" stroke="#8c9591" stroke-width="0.48" opacity="0.08"/>
<path d="M48.6,79.8 l3.2,0.8" stroke="#8c9591" stroke-width="0.48" opacity="0.08"/>
<path d="M53.6,78.3 l8.4,2.1" stroke="#8c9591" stroke-width="0.48" opacity="0.08"/>
<path d="M-6.2,116.7 Q0.0,113.6 6.3,111.7" stroke="#8c9591" stroke-width="0.60" fill="none" opacity="0.15"/>
<path d="M-2.1,114.8 l7.5,2.9" stroke="#8c9591" stroke-width="0.48" opacity="0.12"/>
<path d="M5.5,111.9 l3.0,-4.9" stroke="#8c9591" stroke-width="0.48" opacity="0.12"/>
<path d="M3.7,112.5 l1.6,-3.7" stroke="#8c9591" stroke-width="0.48" opacity="0.12"/>
<path d="M268.7,192.8 Q279.1,188.6 289.5,186.3" stroke="#8c9591" stroke-width="0.60" fill="none" opacity="0.21"/>
<path d="M281.2,188.4 l3.9,0.8" stroke="#8c9591" stroke-width="0.48" opacity="0.16"/>
<path d="M275.6,190.2 l6.0,2.1" stroke="#8c9591" stroke-width="0.48" opacity="0.16"/>
<path d="M281.1,188.5 l1.8,-3.7" stroke="#8c9591" stroke-width="0.48" opacity="0.16"/>
<path d="M140.5,16.9 Q131.6,13.2 122.7,11.1" stroke="#8c9591" stroke-width="0.60" fill="none" opacity="0.19"/>
<path d="M131.0,13.4 l-5.6,1.9" stroke="#8c9591" stroke-width="0.48" opacity="0.16"/>
<path d="M134.8,14.7 l-7.2,1.3" stroke="#8c9591" stroke-width="0.48" opacity="0.16"/>
<path d="M124.5,11.5 l-8.6,3.0" stroke="#8c9591" stroke-width="0.48" opacity="0.16"/>
<path d="M124.4,11.5 l-1.3,-3.0" stroke="#8c9591" stroke-width="0.48" opacity="0.16"/>
<path d="M259.7,145.1 Q269.3,146.4 278.8,149.4" stroke="#8c9591" stroke-width="0.60" fill="none" opacity="0.14"/>
<path d="M269.7,146.9 l7.4,-5.4" stroke="#8c9591" stroke-width="0.48" opacity="0.11"/>
<path d="M262.8,145.6 l5.7,-3.5" stroke="#8c9591" stroke-width="0.48" opacity="0.11"/>
<path d="M273.8,147.9 l4.7,-3.4" stroke="#8c9591" stroke-width="0.48" opacity="0.11"/>
<path d="M269.9,147.0 l6.8,5.7" stroke="#8c9591" stroke-width="0.48" opacity="0.11"/>
<path d="M276.4,148.7 l3.1,-0.8" stroke="#8c9591" stroke-width="0.48" opacity="0.11"/>
<path d="M181.6,79.4 Q198.4,76.0 215.3,75.4" stroke="#8c9591" stroke-width="0.60" fill="none" opacity="0.18"/>
<path d="M195.1,77.2 l3.0,1.8" stroke="#8c9591" stroke-width="0.48" opacity="0.14"/>
<path d="M193.8,77.3 l3.8,-2.5" stroke="#8c9591" stroke-width="0.48" opacity="0.14"/>
<path d="M206.7,75.9 l5.8,-3.6" stroke="#8c9591" stroke-width="0.48" opacity="0.14"/>
<path d="M34.9,30.7 Q41.2,27.4 47.6,25.1" stroke="#8c9591" stroke-width="0.60" fill="none" opacity="0.15"/>
<path d="M40.9,27.8 l3.7,-3.7" stroke="#8c9591" stroke-width="0.48" opacity="0.12"/>
<path d="M70.6,14.3 Q57.5,11.2 44.4,10.2" stroke="#8c9591" stroke-width="0.60" fill="none" opacity="0.16"/>
<path d="M56.2,11.5 l-5.1,-6.8" stroke="#8c9591" stroke-width="0.48" opacity="0.13"/>
<path d="M65.2,13.1 l-4.5,3.5" stroke="#8c9591" stroke-width="0.48" opacity="0.13"/>
<path d="M383.6,112.9 Q377.3,113.1 371.0,114.4" stroke="#8c9591" stroke-width="0.60" fill="none" opacity="0.15"/>
<path d="M379.6,113.2 l-4.5,5.8" stroke="#8c9591" stroke-width="0.48" opacity="0.12"/>
<path d="M306.3,108.5 Q300.4,109.3 294.6,111.0" stroke="#8c9591" stroke-width="0.60" fill="none" opacity="0.19"/>
<path d="M298.3,110.0 l-4.0,4.3" stroke="#8c9591" stroke-width="0.48" opacity="0.15"/>
<path d="M301.0,109.4 l-6.2,-2.7" stroke="#8c9591" stroke-width="0.48" opacity="0.15"/>
<path d="M304.2,108.8 l-5.6,4.8" stroke="#8c9591" stroke-width="0.48" opacity="0.15"/>
<path d="M304.1,108.9 l-2.7,2.0" stroke="#8c9591" stroke-width="0.48" opacity="0.15"/>
<path d="M223.2,213.5 Q230.3,212.7 237.3,213.1" stroke="#8c9591" stroke-width="0.60" fill="none" opacity="0.17"/>
<path d="M235.1,213.0 l3.6,1.4" stroke="#8c9591" stroke-width="0.48" opacity="0.13"/>
<path d="M77.0,198.6 Q60.3,201.7 43.6,207.5" stroke="#8c9591" stroke-width="0.60" fill="none" opacity="0.16"/>
<path d="M70.3,200.0 l-6.7,6.1" stroke="#8c9591" stroke-width="0.48" opacity="0.13"/>
<path d="M50.5,205.3 l-5.3,-3.2" stroke="#8c9591" stroke-width="0.48" opacity="0.13"/>
<path d="M66.8,200.8 l-4.9,-0.6" stroke="#8c9591" stroke-width="0.48" opacity="0.13"/>
<path d="M268.0,169.2 Q284.8,161.2 301.6,156.1" stroke="#8c9591" stroke-width="0.60" fill="none" opacity="0.16"/>
<path d="M293.8,158.6 l2.9,-6.2" stroke="#8c9591" stroke-width="0.48" opacity="0.13"/>
<path d="M58.8,78.7 Q50.1,81.3 41.4,85.5" stroke="#8c9591" stroke-width="0.60" fill="none" opacity="0.21"/>
<path d="M44.6,84.0 l-3.7,-1.1" stroke="#8c9591" stroke-width="0.48" opacity="0.17"/>
<path d="M55.7,79.6 l-2.8,7.2" stroke="#8c9591" stroke-width="0.48" opacity="0.17"/>
<path d="M17.3,212.4 Q5.0,209.4 -7.4,208.4" stroke="#8c9591" stroke-width="0.60" fill="none" opacity="0.21"/>
<path d="M2.5,209.5 l-9.8,1.9" stroke="#8c9591" stroke-width="0.48" opacity="0.17"/>
<path d="M6.9,210.2 l-4.5,2.6" stroke="#8c9591" stroke-width="0.48" opacity="0.17"/>
<path d="M88.3,45.1 Q81.5,45.0 74.8,46.0" stroke="#8c9591" stroke-width="0.60" fill="none" opacity="0.10"/>
<path d="M85.0,45.1 l-8.0,5.3" stroke="#8c9591" stroke-width="0.48" opacity="0.08"/>
<path d="M86.1,45.1 l-2.7,-2.1" stroke="#8c9591" stroke-width="0.48" opacity="0.08"/>
<path d="M82.4,45.2 l-4.5,2.6" stroke="#8c9591" stroke-width="0.48" opacity="0.08"/>
<path d="M17.1,57.2 Q34.2,54.4 51.2,54.4" stroke="#8c9591" stroke-width="0.60" fill="none" opacity="0.15"/>
<path d="M25.6,56.0 l3.4,1.4" stroke="#8c9591" stroke-width="0.48" opacity="0.12"/>
<path d="M38.0,54.8 l3.6,3.5" stroke="#8c9591" stroke-width="0.48" opacity="0.12"/>
<path d="M24.3,56.1 l4.6,-6.0" stroke="#8c9591" stroke-width="0.48" opacity="0.12"/>
<path d="M32.8,55.2 l6.5,-5.1" stroke="#8c9591" stroke-width="0.48" opacity="0.12"/>
<path d="M24.0,56.2 l5.0,3.2" stroke="#8c9591" stroke-width="0.48" opacity="0.12"/>
<path d="M321.8,57.5 Q307.4,53.1 293.0,51.0" stroke="#8c9591" stroke-width="0.60" fill="none" opacity="0.15"/>
<path d="M303.8,52.9 l-8.5,3.1" stroke="#8c9591" stroke-width="0.48" opacity="0.12"/>
<path d="M309.6,54.2 l-5.7,-6.6" stroke="#8c9591" stroke-width="0.48" opacity="0.12"/>
<path d="M31.6,192.8 Q16.4,184.6 1.2,179.1" stroke="#8c9591" stroke-width="0.60" fill="none" opacity="0.10"/>
<path d="M10.8,182.8 l-2.4,-4.9" stroke="#8c9591" stroke-width="0.48" opacity="0.08"/>
<path d="M23.3,188.5 l-1.9,-3.0" stroke="#8c9591" stroke-width="0.48" opacity="0.08"/>
<path d="M19.4,186.6 l-2.2,-7.4" stroke="#8c9591" stroke-width="0.48" opacity="0.08"/>
<path d="M3.3,179.9 l-9.8,1.5" stroke="#8c9591" stroke-width="0.48" opacity="0.08"/>
<path d="M21.5,187.6 l-1.9,-6.5" stroke="#8c9591" stroke-width="0.48" opacity="0.08"/>
<path d="M14.5,99.4 Q30.0,104.2 45.5,111.6" stroke="#8c9591" stroke-width="0.60" fill="none" opacity="0.16"/>
<path d="M24.4,102.7 l5.4,-1.3" stroke="#8c9591" stroke-width="0.48" opacity="0.13"/>
<path d="M21.6,101.7 l8.5,-0.5" stroke="#8c9591" stroke-width="0.48" opacity="0.13"/>
<path d="M35.3,107.0 l3.5,6.5" stroke="#8c9591" stroke-width="0.48" opacity="0.13"/>
<path d="M43.2,110.5 l6.2,-1.2" stroke="#8c9591" stroke-width="0.48" opacity="0.13"/>
<path d="M23.0,102.2 l1.9,5.3" stroke="#8c9591" stroke-width="0.48" opacity="0.13"/>
<path d="M444.9,5.2 Q455.5,4.9 466.1,6.3" stroke="#8c9591" stroke-width="0.60" fill="none" opacity="0.22"/>
<path d="M453.2,5.2 l6.2,-2.1" stroke="#8c9591" stroke-width="0.48" opacity="0.17"/>
<path d="M103.5,142.5 Q111.9,143.9 120.4,146.7" stroke="#8c9591" stroke-width="0.60" fill="none" opacity="0.13"/>
<path d="M112.3,144.3 l7.7,6.2" stroke="#8c9591" stroke-width="0.48" opacity="0.10"/>
<path d="M107.4,143.2 l3.4,-2.0" stroke="#8c9591" stroke-width="0.48" opacity="0.10"/>
<path d="M112.8,144.4 l3.8,-1.3" stroke="#8c9591" stroke-width="0.48" opacity="0.10"/>
<path d="M114.3,144.8 l8.6,-2.9" stroke="#8c9591" stroke-width="0.48" opacity="0.10"/>
<path d="M-14.4,33.1 Q-29.9,34.7 -45.4,38.9" stroke="#8c9591" stroke-width="0.60" fill="none" opacity="0.12"/>
<path d="M-34.4,36.2 l-4.5,3.7" stroke="#8c9591" stroke-width="0.48" opacity="0.10"/>
<path d="M-43.0,38.2 l-7.0,-2.7" stroke="#8c9591" stroke-width="0.48" opacity="0.10"/>
<path d="M-26.5,34.7 l-3.9,-2.2" stroke="#8c9591" stroke-width="0.48" opacity="0.10"/>
<path d="M-29.5,35.2 l-8.1,-4.5" stroke="#8c9591" stroke-width="0.48" opacity="0.10"/>
<path d="M-41.0,37.7 l-9.0,-3.5" stroke="#8c9591" stroke-width="0.48" opacity="0.10"/>
<path d="M135.4,159.0 Q142.4,155.7 149.4,153.6" stroke="#8c9591" stroke-width="0.60" fill="none" opacity="0.20"/>
<path d="M141.5,156.3 l6.0,0.3" stroke="#8c9591" stroke-width="0.48" opacity="0.16"/>
<path d="M141.0,156.5 l3.7,-5.6" stroke="#8c9591" stroke-width="0.48" opacity="0.16"/>
<path d="M143.6,155.5 l2.8,-5.1" stroke="#8c9591" stroke-width="0.48" opacity="0.16"/>
<path d="M145.5,154.9 l3.1,0.8" stroke="#8c9591" stroke-width="0.48" opacity="0.16"/>
<path d="M99.5,161.1 Q115.2,158.1 130.8,157.7" stroke="#8c9591" stroke-width="0.60" fill="none" opacity="0.17"/>
<path d="M104.4,160.3 l5.7,-4.3" stroke="#8c9591" stroke-width="0.48" opacity="0.14"/>
<path d="M290.4,79.3 Q297.6,80.4 304.7,82.7" stroke="#8c9591" stroke-width="0.60" fill="none" opacity="0.11"/>
<path d="M298.2,80.9 l5.4,3.8" stroke="#8c9591" stroke-width="0.48" opacity="0.09"/>
<path d="M293.6,79.9 l2.6,4.0" stroke="#8c9591" stroke-width="0.48" opacity="0.09"/>
<path d="M469.8,139.2 Q480.0,136.4 490.3,135.3" stroke="#8c9591" stroke-width="0.60" fill="none" opacity="0.18"/>
<path d="M479.4,136.9 l4.3,1.5" stroke="#8c9591" stroke-width="0.48" opacity="0.15"/>
<path d="M144.7,176.2 Q157.9,169.6 171.2,165.4" stroke="#8c9591" stroke-width="0.60" fill="none" opacity="0.19"/>
<path d="M157.0,170.6 l1.2,-3.4" stroke="#8c9591" stroke-width="0.48" opacity="0.15"/>
<path d="M311.5,4.8 Q299.4,-1.8 287.4,-6.3" stroke="#8c9591" stroke-width="0.60" fill="none" opacity="0.19"/>
<path d="M301.4,-0.4 l-4.8,-5.6" stroke="#8c9591" stroke-width="0.48" opacity="0.15"/>
<path d="M306.3,2.0 l-4.4,-6.5" stroke="#8c9591" stroke-width="0.48" opacity="0.15"/>
<path d="M299.2,-1.4 l-3.2,-5.1" stroke="#8c9591" stroke-width="0.48" opacity="0.15"/>
<path d="M290.5,-5.1 l-2.3,-7.8" stroke="#8c9591" stroke-width="0.48" opacity="0.15"/>
<path d="M164.7,178.8 Q149.5,176.2 134.4,176.1" stroke="#8c9591" stroke-width="0.60" fill="none" opacity="0.18"/>
<path d="M157.4,177.7 l-7.2,-5.5" stroke="#8c9591" stroke-width="0.48" opacity="0.15"/>
<path d="M147.1,176.6 l-7.7,-4.4" stroke="#8c9591" stroke-width="0.48" opacity="0.15"/>
<path d="M153.5,177.2 l-4.3,4.0" stroke="#8c9591" stroke-width="0.48" opacity="0.15"/>
<path d="M155.3,177.4 l-6.9,3.9" stroke="#8c9591" stroke-width="0.48" opacity="0.15"/>
<path d="M143.4,176.4 l-5.4,1.8" stroke="#8c9591" stroke-width="0.48" opacity="0.15"/>
<path d="M365.3,35.8 Q372.4,34.3 379.6,33.9" stroke="#8c9591" stroke-width="0.60" fill="none" opacity="0.12"/>
<path d="M371.8,34.6 l7.8,3.8" stroke="#8c9591" stroke-width="0.48" opacity="0.10"/>
<path d="M374.2,34.3 l4.6,-4.2" stroke="#8c9591" stroke-width="0.48" opacity="0.10"/>
<path d="M378.7,33.9 l5.0,1.8" stroke="#8c9591" stroke-width="0.48" opacity="0.10"/>
<path d="M115.6,157.0 Q108.1,153.4 100.5,151.0" stroke="#8c9591" stroke-width="0.60" fill="none" opacity="0.20"/>
<path d="M110.4,154.7 l-2.3,-3.8" stroke="#8c9591" stroke-width="0.48" opacity="0.16"/>
<path d="M101.6,151.3 l-9.2,1.6" stroke="#8c9591" stroke-width="0.48" opacity="0.16"/>
<path d="M111.9,155.3 l-2.0,-3.8" stroke="#8c9591" stroke-width="0.48" opacity="0.16"/>
<path d="M107.3,153.4 l-3.9,1.1" stroke="#8c9591" stroke-width="0.48" opacity="0.16"/>
<path d="M266.2,71.6 Q256.0,75.2 245.8,80.5" stroke="#8c9591" stroke-width="0.60" fill="none" opacity="0.14"/>
<path d="M261.6,73.3 l-7.6,-3.7" stroke="#8c9591" stroke-width="0.48" opacity="0.11"/>
<path d="M249.1,78.8 l-5.5,6.0" stroke="#8c9591" stroke-width="0.48" opacity="0.11"/>
<path d="M250.7,78.1 l-3.1,6.4" stroke="#8c9591" stroke-width="0.48" opacity="0.11"/>
<path d="M168.9,204.5 Q182.1,207.3 195.3,212.3" stroke="#8c9591" stroke-width="0.60" fill="none" opacity="0.22"/>
<path d="M178.1,206.7 l1.7,2.6" stroke="#8c9591" stroke-width="0.48" opacity="0.17"/>
<path d="M128.7,120.6 Q140.2,117.3 151.7,115.9" stroke="#8c9591" stroke-width="0.60" fill="none" opacity="0.13"/>
<path d="M149.5,116.2 l4.0,0.9" stroke="#8c9591" stroke-width="0.48" opacity="0.11"/>
<path d="M148.0,116.4 l6.0,-6.6" stroke="#8c9591" stroke-width="0.48" opacity="0.11"/>
<path d="M145.7,116.8 l6.4,2.1" stroke="#8c9591" stroke-width="0.48" opacity="0.11"/>
<path d="M201.7,167.7 Q190.1,168.6 178.6,171.5" stroke="#8c9591" stroke-width="0.60" fill="none" opacity="0.14"/>
<path d="M180.8,171.0 l-3.7,5.4" stroke="#8c9591" stroke-width="0.48" opacity="0.11"/>
<path d="M196.8,168.2 l-6.4,-2.3" stroke="#8c9591" stroke-width="0.48" opacity="0.11"/>
<path d="M-18.6,200.7 Q-25.7,199.3 -32.8,199.1" stroke="#8c9591" stroke-width="0.60" fill="none" opacity="0.14"/>
<path d="M-21.4,200.2 l-6.6,-3.9" stroke="#8c9591" stroke-width="0.48" opacity="0.11"/>
<path d="M-25.4,199.6 l-3.1,-2.6" stroke="#8c9591" stroke-width="0.48" opacity="0.11"/>
<path d="M332.6,18.5 Q345.5,22.4 358.4,28.5" stroke="#8c9591" stroke-width="0.60" fill="none" opacity="0.21"/>
<path d="M345.1,22.8 l6.0,-2.1" stroke="#8c9591" stroke-width="0.48" opacity="0.16"/>
<path d="M-4.7,202.1 Q-10.7,200.5 -16.8,200.0" stroke="#8c9591" stroke-width="0.60" fill="none" opacity="0.14"/>
<path d="M-15.6,200.1 l-5.5,-8.1" stroke="#8c9591" stroke-width="0.48" opacity="0.11"/>
<path d="M-15.6,200.1 l-2.6,1.8" stroke="#8c9591" stroke-width="0.48" opacity="0.11"/>
<path d="M-16.2,200.0 l-5.5,4.3" stroke="#8c9591" stroke-width="0.48" opacity="0.11"/>
<path d="M24.8,111.6 Q19.2,110.2 13.5,109.6" stroke="#8c9591" stroke-width="0.60" fill="none" opacity="0.14"/>
<path d="M19.4,110.4 l-2.6,-3.1" stroke="#8c9591" stroke-width="0.48" opacity="0.11"/>
<path d="M249.8,124.7 Q246.0,122.9 242.3,121.8" stroke="#8c9591" stroke-width="0.60" fill="none" opacity="0.20"/>
<path d="M243.7,122.2 l-5.8,0.5" stroke="#8c9591" stroke-width="0.48" opacity="0.16"/>
<path d="M246.3,123.2 l-6.0,-7.1" stroke="#8c9591" stroke-width="0.48" opacity="0.16"/>
<path d="M245.1,122.7 l-6.5,1.6" stroke="#8c9591" stroke-width="0.48" opacity="0.16"/>
<path d="M246.5,123.3 l-7.5,0.5" stroke="#8c9591" stroke-width="0.48" opacity="0.16"/>
<path d="M57.8,54.5 Q64.9,56.6 71.9,59.9" stroke="#8c9591" stroke-width="0.60" fill="none" opacity="0.12"/>
<path d="M62.9,56.1 l3.5,5.7" stroke="#8c9591" stroke-width="0.48" opacity="0.10"/>
<path d="M60.2,55.2 l5.1,-0.7" stroke="#8c9591" stroke-width="0.48" opacity="0.10"/>
<path d="M63.7,56.4 l7.5,-3.1" stroke="#8c9591" stroke-width="0.48" opacity="0.10"/>
<path d="M66.0,57.3 l3.5,-0.8" stroke="#8c9591" stroke-width="0.48" opacity="0.10"/>
<path d="M60.5,55.3 l6.8,-1.2" stroke="#8c9591" stroke-width="0.48" opacity="0.10"/>
<path d="M165.0,195.9 Q185.0,192.9 204.9,193.0" stroke="#8c9591" stroke-width="0.60" fill="none" opacity="0.18"/>
<path d="M181.8,193.9 l6.2,5.8" stroke="#8c9591" stroke-width="0.48" opacity="0.14"/>
<path d="M188.9,193.4 l7.5,-6.0" stroke="#8c9591" stroke-width="0.48" opacity="0.14"/>
<path d="M404.7,3.0 Q408.9,4.4 413.1,6.5" stroke="#8c9591" stroke-width="0.60" fill="none" opacity="0.15"/>
<path d="M406.9,3.8 l1.4,4.2" stroke="#8c9591" stroke-width="0.48" opacity="0.12"/>
<path d="M412.2,6.0 l5.4,-0.1" stroke="#8c9591" stroke-width="0.48" opacity="0.12"/>
<path d="M350.8,203.3 Q343.2,204.0 335.5,206.0" stroke="#8c9591" stroke-width="0.60" fill="none" opacity="0.13"/>
<path d="M344.0,204.2 l-6.7,4.6" stroke="#8c9591" stroke-width="0.48" opacity="0.10"/>
<path d="M337.8,205.5 l-6.3,7.6" stroke="#8c9591" stroke-width="0.48" opacity="0.10"/>
<path d="M347.0,203.7 l-5.0,-1.6" stroke="#8c9591" stroke-width="0.48" opacity="0.10"/>
<path d="M342.1,204.5 l-5.2,7.0" stroke="#8c9591" stroke-width="0.48" opacity="0.10"/>
<path d="M253.4,203.6 Q240.2,196.6 227.0,191.8" stroke="#8c9591" stroke-width="0.60" fill="none" opacity="0.21"/>
<path d="M245.5,199.6 l-5.9,-7.8" stroke="#8c9591" stroke-width="0.48" opacity="0.17"/>
<path d="M232.7,194.0 l-9.7,1.1" stroke="#8c9591" stroke-width="0.48" opacity="0.17"/>
<path d="M228.4,192.3 l-4.1,-4.9" stroke="#8c9591" stroke-width="0.48" opacity="0.17"/>
<path d="M229.5,192.7 l-5.3,-8.3" stroke="#8c9591" stroke-width="0.48" opacity="0.17"/>
<path d="M237.1,195.8 l-6.8,0.1" stroke="#8c9591" stroke-width="0.48" opacity="0.17"/>
<path d="M69.8,158.3 Q52.1,149.0 34.3,142.7" stroke="#8c9591" stroke-width="0.60" fill="none" opacity="0.15"/>
<path d="M47.1,147.6 l-2.2,-2.6" stroke="#8c9591" stroke-width="0.48" opacity="0.12"/>
<path d="M64.1,155.4 l-3.0,-4.1" stroke="#8c9591" stroke-width="0.48" opacity="0.12"/>
<path d="M40.4,144.9 l-6.9,0.5" stroke="#8c9591" stroke-width="0.48" opacity="0.12"/>
<path d="M43.4,146.1 l-1.4,-3.9" stroke="#8c9591" stroke-width="0.48" opacity="0.12"/>
<path d="M281.5,89.6 Q289.0,92.1 296.5,95.8" stroke="#8c9591" stroke-width="0.60" fill="none" opacity="0.16"/>
<path d="M294.0,94.6 l9.0,-1.8" stroke="#8c9591" stroke-width="0.48" opacity="0.13"/>
<path d="M290.5,93.0 l8.5,-4.1" stroke="#8c9591" stroke-width="0.48" opacity="0.13"/>
<path d="M287.5,91.8 l4.7,5.1" stroke="#8c9591" stroke-width="0.48" opacity="0.13"/>
<path d="M295.1,95.2 l4.8,-1.4" stroke="#8c9591" stroke-width="0.48" opacity="0.13"/>
<path d="M283.8,90.4 l6.2,-1.4" stroke="#8c9591" stroke-width="0.48" opacity="0.13"/>
<path d="M458.8,110.6 Q473.6,111.5 488.4,114.8" stroke="#8c9591" stroke-width="0.60" fill="none" opacity="0.15"/>
<path d="M476.9,112.6 l6.4,3.7" stroke="#8c9591" stroke-width="0.48" opacity="0.12"/>
<path d="M470.8,111.7 l6.4,-3.9" stroke="#8c9591" stroke-width="0.48" opacity="0.12"/>
<path d="M486.3,114.3 l4.3,2.5" stroke="#8c9591" stroke-width="0.48" opacity="0.12"/>
<path d="M469.9,111.6 l2.1,2.6" stroke="#8c9591" stroke-width="0.48" opacity="0.12"/>
<path d="M112.2,194.1 Q101.4,193.8 90.5,195.1" stroke="#8c9591" stroke-width="0.60" fill="none" opacity="0.21"/>
<path d="M94.1,194.7 l-2.7,3.0" stroke="#8c9591" stroke-width="0.48" opacity="0.17"/>
<path d="M100.2,194.3 l-4.3,-3.2" stroke="#8c9591" stroke-width="0.48" opacity="0.17"/>
<path d="M97.0,194.5 l-3.8,4.8" stroke="#8c9591" stroke-width="0.48" opacity="0.17"/>
<path d="M93.1,194.9 l-5.3,5.7" stroke="#8c9591" stroke-width="0.48" opacity="0.17"/>
<path d="M395.9,37.9 Q404.5,35.2 413.1,34.0" stroke="#8c9591" stroke-width="0.60" fill="none" opacity="0.21"/>
<path d="M411.7,34.2 l6.5,3.9" stroke="#8c9591" stroke-width="0.48" opacity="0.17"/>
<path d="M296.9,195.9 Q278.1,188.6 259.3,184.4" stroke="#8c9591" stroke-width="0.60" fill="none" opacity="0.13"/>
<path d="M265.1,185.7 l-2.9,-4.3" stroke="#8c9591" stroke-width="0.48" opacity="0.10"/>
<path d="M268.0,186.5 l-2.5,-4.2" stroke="#8c9591" stroke-width="0.48" opacity="0.10"/>
<path d="M271.1,187.3 l-5.4,2.7" stroke="#8c9591" stroke-width="0.48" opacity="0.10"/>
<path d="M387.6,187.8 Q406.6,188.6 425.5,192.4" stroke="#8c9591" stroke-width="0.60" fill="none" opacity="0.16"/>
<path d="M414.9,190.5 l2.9,-1.5" stroke="#8c9591" stroke-width="0.48" opacity="0.13"/>
<path d="M423.0,191.9 l3.8,-2.6" stroke="#8c9591" stroke-width="0.48" opacity="0.13"/>
<path d="M408.9,189.7 l3.5,3.9" stroke="#8c9591" stroke-width="0.48" opacity="0.13"/>
<path d="M394.1,188.2 l4.5,-1.9" stroke="#8c9591" stroke-width="0.48" opacity="0.13"/>
<path d="M461.2,196.0 Q473.7,195.9 486.2,197.7" stroke="#8c9591" stroke-width="0.60" fill="none" opacity="0.14"/>
<path d="M480.4,197.0 l4.6,2.7" stroke="#8c9591" stroke-width="0.48" opacity="0.11"/>
<path d="M484.7,197.5 l2.6,-2.3" stroke="#8c9591" stroke-width="0.48" opacity="0.11"/>
<path d="M475.6,196.5 l5.7,-2.6" stroke="#8c9591" stroke-width="0.48" opacity="0.11"/>
<path d="M483.6,197.4 l4.6,3.1" stroke="#8c9591" stroke-width="0.48" opacity="0.11"/>
<path d="M16.3,11.2 Q24.6,13.2 32.9,16.6" stroke="#8c9591" stroke-width="0.60" fill="none" opacity="0.20"/>
<path d="M24.3,13.5 l5.3,-2.5" stroke="#8c9591" stroke-width="0.48" opacity="0.16"/>
<path d="M31.0,15.8 l2.2,2.8" stroke="#8c9591" stroke-width="0.48" opacity="0.16"/>
<path d="M27.9,14.7 l4.7,6.9" stroke="#8c9591" stroke-width="0.48" opacity="0.16"/>
<path d="M24.4,13.5 l3.1,-0.4" stroke="#8c9591" stroke-width="0.48" opacity="0.16"/>
<path d="M29.0,15.1 l3.4,-0.4" stroke="#8c9591" stroke-width="0.48" opacity="0.16"/>
<path d="M482.9,169.2 Q490.9,170.7 498.9,173.5" stroke="#8c9591" stroke-width="0.60" fill="none" opacity="0.10"/>
<path d="M491.1,171.1 l5.0,-3.3" stroke="#8c9591" stroke-width="0.48" opacity="0.08"/>
<path d="M80.6,54.3 Q69.0,47.9 57.4,43.5" stroke="#8c9591" stroke-width="0.60" fill="none" opacity="0.16"/>
<path d="M69.0,48.4 l-3.8,0.7" stroke="#8c9591" stroke-width="0.48" opacity="0.12"/>
<path d="M62.5,45.6 l-2.0,-4.3" stroke="#8c9591" stroke-width="0.48" opacity="0.12"/>
<path d="M65.7,46.9 l-2.0,-2.6" stroke="#8c9591" stroke-width="0.48" opacity="0.12"/>
<path d="M66.5,47.3 l-5.8,-0.3" stroke="#8c9591" stroke-width="0.48" opacity="0.12"/>
<path d="M69.9,48.8 l-3.9,-4.9" stroke="#8c9591" stroke-width="0.48" opacity="0.12"/>
<path d="M107.3,159.4 Q125.9,160.2 144.6,163.9" stroke="#8c9591" stroke-width="0.60" fill="none" opacity="0.14"/>
<path d="M119.5,160.2 l5.9,6.8" stroke="#8c9591" stroke-width="0.48" opacity="0.11"/>
<path d="M431.4,41.2 Q415.0,42.9 398.6,47.2" stroke="#8c9591" stroke-width="0.60" fill="none" opacity="0.15"/>
<path d="M409.1,44.7 l-3.4,2.8" stroke="#8c9591" stroke-width="0.48" opacity="0.12"/>
<path d="M410.1,44.5 l-3.9,4.4" stroke="#8c9591" stroke-width="0.48" opacity="0.12"/>
<path d="M424.2,42.1 l-5.2,6.3" stroke="#8c9591" stroke-width="0.48" opacity="0.12"/>
<path d="M331.8,108.5 Q348.8,100.4 365.7,95.3" stroke="#8c9591" stroke-width="0.60" fill="none" opacity="0.13"/>
<path d="M356.5,98.3 l9.4,2.0" stroke="#8c9591" stroke-width="0.48" opacity="0.10"/>
<path d="M354.6,99.0 l2.5,-3.9" stroke="#8c9591" stroke-width="0.48" opacity="0.10"/>
<path d="M488.6,73.5 Q492.9,72.8 497.1,72.8" stroke="#8c9591" stroke-width="0.60" fill="none" opacity="0.19"/>
<path d="M490.5,73.2 l5.1,2.4" stroke="#8c9591" stroke-width="0.48" opacity="0.15"/>
<path d="M496.4,72.8 l7.8,2.5" stroke="#8c9591" stroke-width="0.48" opacity="0.15"/>
<path d="M493.8,72.9 l8.3,2.7" stroke="#8c9591" stroke-width="0.48" opacity="0.15"/>
<path d="M487.4,153.1 Q503.3,153.0 519.2,155.3" stroke="#8c9591" stroke-width="0.60" fill="none" opacity="0.13"/>
<path d="M502.6,153.6 l3.8,-1.4" stroke="#8c9591" stroke-width="0.48" opacity="0.10"/>
<path d="M512.1,154.4 l4.8,-2.2" stroke="#8c9591" stroke-width="0.48" opacity="0.10"/>
<path d="M506.6,153.9 l5.6,3.7" stroke="#8c9591" stroke-width="0.48" opacity="0.10"/>
<path d="M515.7,154.8 l6.2,5.9" stroke="#8c9591" stroke-width="0.48" opacity="0.10"/>
<path d="M499.6,153.4 l6.2,6.0" stroke="#8c9591" stroke-width="0.48" opacity="0.10"/>
<path d="M30.9,10.4 Q42.3,14.6 53.6,20.7" stroke="#8c9591" stroke-width="0.60" fill="none" opacity="0.17"/>
<path d="M40.7,14.4 l8.3,0.6" stroke="#8c9591" stroke-width="0.48" opacity="0.13"/>
<path d="M44.2,16.0 l1.5,3.9" stroke="#8c9591" stroke-width="0.48" opacity="0.13"/>
<path d="M41.2,14.6 l2.3,4.3" stroke="#8c9591" stroke-width="0.48" opacity="0.13"/>
<path d="M246.6,116.0 Q260.4,110.4 274.3,107.2" stroke="#8c9591" stroke-width="0.60" fill="none" opacity="0.14"/>
<path d="M256.3,112.4 l1.8,-3.8" stroke="#8c9591" stroke-width="0.48" opacity="0.11"/>
<path d="M264.8,109.7 l2.2,-2.3" stroke="#8c9591" stroke-width="0.48" opacity="0.11"/>
<path d="M261.6,110.7 l4.2,-6.6" stroke="#8c9591" stroke-width="0.48" opacity="0.11"/>
<path d="M257.2,112.1 l4.9,2.1" stroke="#8c9591" stroke-width="0.48" opacity="0.11"/>
<path d="M258.2,111.7 l4.2,-8.1" stroke="#8c9591" stroke-width="0.48" opacity="0.11"/>
<path d="M344.0,5.9 Q356.5,10.5 369.0,17.3" stroke="#8c9591" stroke-width="0.60" fill="none" opacity="0.13"/>
<path d="M359.8,12.6 l2.0,4.9" stroke="#8c9591" stroke-width="0.48" opacity="0.10"/>
<path d="M365.5,15.4 l3.9,-1.7" stroke="#8c9591" stroke-width="0.48" opacity="0.10"/>
<path d="M331.4,36.9 Q344.9,34.0 358.5,33.2" stroke="#8c9591" stroke-width="0.60" fill="none" opacity="0.19"/>
<path d="M354.4,33.5 l4.4,1.1" stroke="#8c9591" stroke-width="0.48" opacity="0.15"/>
<path d="M346.1,34.3 l4.9,-5.9" stroke="#8c9591" stroke-width="0.48" opacity="0.15"/>
<path d="M350.2,33.9 l8.3,-4.9" stroke="#8c9591" stroke-width="0.48" opacity="0.15"/>
<path d="M3.0,75.9 Q15.9,79.1 28.8,84.4" stroke="#8c9591" stroke-width="0.60" fill="none" opacity="0.11"/>
<path d="M15.5,79.5 l8.9,-3.0" stroke="#8c9591" stroke-width="0.48" opacity="0.09"/>
<path d="M2.7,32.8 Q7.4,33.6 12.2,35.2" stroke="#8c9591" stroke-width="0.60" fill="none" opacity="0.13"/>
<path d="M6.8,33.7 l4.6,-3.1" stroke="#8c9591" stroke-width="0.48" opacity="0.10"/>
<path d="M135.6,3.2 Q144.5,3.2 153.4,4.7" stroke="#8c9591" stroke-width="0.60" fill="none" opacity="0.13"/>
<path d="M140.6,3.3 l3.3,-1.5" stroke="#8c9591" stroke-width="0.48" opacity="0.11"/>
<path d="M440.4,162.1 Q455.5,160.9 470.6,162.1" stroke="#8c9591" stroke-width="0.60" fill="none" opacity="0.15"/>
<path d="M453.7,161.5 l3.9,2.8" stroke="#8c9591" stroke-width="0.48" opacity="0.12"/>
<path d="M457.8,161.5 l7.5,-4.1" stroke="#8c9591" stroke-width="0.48" opacity="0.12"/>
<path d="M452.1,161.6 l4.5,-3.6" stroke="#8c9591" stroke-width="0.48" opacity="0.12"/>
<path d="M451.8,161.6 l3.3,2.8" stroke="#8c9591" stroke-width="0.48" opacity="0.12"/>
<path d="M366.4,97.7 Q378.1,93.9 389.8,92.1" stroke="#8c9591" stroke-width="0.60" fill="none" opacity="0.17"/>
<path d="M371.3,96.2 l4.4,1.8" stroke="#8c9591" stroke-width="0.48" opacity="0.14"/>
<path d="M379.5,94.1 l4.8,1.9" stroke="#8c9591" stroke-width="0.48" opacity="0.14"/>
<path d="M494.0,16.2 Q490.0,14.6 486.0,13.7" stroke="#8c9591" stroke-width="0.60" fill="none" opacity="0.15"/>
<path d="M489.9,14.8 l-9.3,3.4" stroke="#8c9591" stroke-width="0.48" opacity="0.12"/>
<path d="M263.7,12.0 Q258.7,12.7 253.7,14.2" stroke="#8c9591" stroke-width="0.60" fill="none" opacity="0.13"/>
<path d="M260.5,12.5 l-2.9,5.4" stroke="#8c9591" stroke-width="0.48" opacity="0.10"/>
<path d="M254.9,13.9 l-7.1,-1.8" stroke="#8c9591" stroke-width="0.48" opacity="0.10"/>
<path d="M257.0,13.3 l-4.3,-1.2" stroke="#8c9591" stroke-width="0.48" opacity="0.10"/>
<path d="M259.7,12.7 l-3.4,-2.6" stroke="#8c9591" stroke-width="0.48" opacity="0.10"/>
<path d="M75.5,40.5 Q60.5,33.1 45.6,28.3" stroke="#8c9591" stroke-width="0.60" fill="none" opacity="0.10"/>
<path d="M52.1,30.5 l-2.7,-6.9" stroke="#8c9591" stroke-width="0.48" opacity="0.08"/>
<path d="M55.6,31.8 l-9.0,4.2" stroke="#8c9591" stroke-width="0.48" opacity="0.08"/>
<path d="M365.1,68.7 Q352.2,72.7 339.4,79.0" stroke="#8c9591" stroke-width="0.60" fill="none" opacity="0.11"/>
<path d="M355.0,72.2 l-5.5,7.3" stroke="#8c9591" stroke-width="0.48" opacity="0.08"/>
<path d="M347.9,75.1 l-5.9,-0.6" stroke="#8c9591" stroke-width="0.48" opacity="0.08"/>
<path d="M355.5,72.0 l-9.4,-0.0" stroke="#8c9591" stroke-width="0.48" opacity="0.08"/>
<path d="M357.4,71.3 l-1.6,4.4" stroke="#8c9591" stroke-width="0.48" opacity="0.08"/>
<path d="M347.5,75.2 l-1.3,3.6" stroke="#8c9591" stroke-width="0.48" opacity="0.08"/>
<path d="M146.1,1.5 Q157.9,-0.6 169.7,-0.9" stroke="#8c9591" stroke-width="0.60" fill="none" opacity="0.16"/>
<path d="M151.8,0.6 l4.7,2.8" stroke="#8c9591" stroke-width="0.48" opacity="0.13"/>
<path d="M182.1,202.7 Q175.4,199.1 168.8,196.7" stroke="#8c9591" stroke-width="0.60" fill="none" opacity="0.18"/>
<path d="M173.4,198.5 l-5.9,1.8" stroke="#8c9591" stroke-width="0.48" opacity="0.14"/>
<path d="M179.2,201.3 l-6.0,-6.8" stroke="#8c9591" stroke-width="0.48" opacity="0.14"/>
<path d="M176.0,199.7 l-4.4,1.1" stroke="#8c9591" stroke-width="0.48" opacity="0.14"/>
<path d="M172.2,198.0 l-4.8,-6.8" stroke="#8c9591" stroke-width="0.48" opacity="0.14"/>
<path d="M179.4,201.3 l-1.6,-4.7" stroke="#8c9591" stroke-width="0.48" opacity="0.14"/>
<path d="M105.4,139.1 Q100.4,136.6 95.4,135.0" stroke="#8c9591" stroke-width="0.60" fill="none" opacity="0.20"/>
<path d="M96.0,135.2 l-5.6,-6.6" stroke="#8c9591" stroke-width="0.48" opacity="0.16"/>
<path d="M102.4,137.7 l-6.1,0.4" stroke="#8c9591" stroke-width="0.48" opacity="0.16"/>
<path d="M98.8,136.2 l-1.6,-3.9" stroke="#8c9591" stroke-width="0.48" opacity="0.16"/>
<path d="M97.6,135.7 l-5.7,1.5" stroke="#8c9591" stroke-width="0.48" opacity="0.16"/>
<path d="M99.8,136.6 l-5.7,0.7" stroke="#8c9591" stroke-width="0.48" opacity="0.16"/>
<path d="M492.6,6.0 Q511.5,3.2 530.4,3.5" stroke="#8c9591" stroke-width="0.60" fill="none" opacity="0.19"/>
<path d="M507.0,4.4 l4.4,-2.4" stroke="#8c9591" stroke-width="0.48" opacity="0.16"/>
<path d="M522.5,3.5 l5.8,-7.1" stroke="#8c9591" stroke-width="0.48" opacity="0.16"/>
<path d="M499.5,5.1 l4.6,2.0" stroke="#8c9591" stroke-width="0.48" opacity="0.16"/>
<path d="M528.5,3.5 l2.7,-2.5" stroke="#8c9591" stroke-width="0.48" opacity="0.16"/>
<path d="M429.0,73.5 Q434.3,75.4 439.6,78.2" stroke="#8c9591" stroke-width="0.60" fill="none" opacity="0.19"/>
<path d="M435.6,76.2 l2.1,7.4" stroke="#8c9591" stroke-width="0.48" opacity="0.15"/>
<path d="M437.7,77.2 l7.6,-0.5" stroke="#8c9591" stroke-width="0.48" opacity="0.15"/>
<path d="M434.8,75.8 l3.6,-0.6" stroke="#8c9591" stroke-width="0.48" opacity="0.15"/>
<path d="M280.4,44.8 Q287.4,43.9 294.5,44.2" stroke="#8c9591" stroke-width="0.60" fill="none" opacity="0.20"/>
<path d="M285.5,44.3 l4.3,-3.5" stroke="#8c9591" stroke-width="0.48" opacity="0.16"/>
<path d="M116.4,81.8 Q131.3,75.3 146.1,71.4" stroke="#8c9591" stroke-width="0.60" fill="none" opacity="0.18"/>
<path d="M136.1,74.3 l4.7,-4.1" stroke="#8c9591" stroke-width="0.48" opacity="0.15"/>
<path d="M137.9,73.8 l4.6,0.5" stroke="#8c9591" stroke-width="0.48" opacity="0.15"/>
<path d="M131.9,75.7 l6.2,1.0" stroke="#8c9591" stroke-width="0.48" opacity="0.15"/>
<path d="M271.6,51.9 Q284.2,52.2 296.7,54.5" stroke="#8c9591" stroke-width="0.60" fill="none" opacity="0.21"/>
<path d="M277.9,52.2 l6.4,-3.2" stroke="#8c9591" stroke-width="0.48" opacity="0.17"/>
<path d="M292.3,53.8 l5.8,-3.5" stroke="#8c9591" stroke-width="0.48" opacity="0.17"/>
<path d="M330.1,208.1 Q320.9,211.0 311.7,215.4" stroke="#8c9591" stroke-width="0.60" fill="none" opacity="0.12"/>
<path d="M317.2,212.9 l-2.3,6.4" stroke="#8c9591" stroke-width="0.48" opacity="0.09"/>
<path d="M326.5,209.3 l-5.0,5.6" stroke="#8c9591" stroke-width="0.48" opacity="0.09"/>
<path d="M326.9,209.2 l-4.1,-0.2" stroke="#8c9591" stroke-width="0.48" opacity="0.09"/>
<path d="M160.7,20.0 Q179.3,16.5 197.9,15.9" stroke="#8c9591" stroke-width="0.60" fill="none" opacity="0.18"/>
<path d="M192.6,16.1 l4.2,-5.4" stroke="#8c9591" stroke-width="0.48" opacity="0.14"/>
<path d="M186.4,16.5 l8.8,4.5" stroke="#8c9591" stroke-width="0.48" opacity="0.14"/>
<path d="M174.8,17.8 l5.3,-2.7" stroke="#8c9591" stroke-width="0.48" opacity="0.14"/>
<path d="M227.3,56.6 Q216.0,51.1 204.7,47.5" stroke="#8c9591" stroke-width="0.60" fill="none" opacity="0.12"/>
<path d="M217.3,52.1 l-3.7,0.0" stroke="#8c9591" stroke-width="0.48" opacity="0.09"/>
<path d="M212.9,50.4 l-5.9,1.0" stroke="#8c9591" stroke-width="0.48" opacity="0.09"/>
<path d="M207.3,48.3 l-6.1,2.0" stroke="#8c9591" stroke-width="0.48" opacity="0.09"/>
<path d="M208.5,48.7 l-2.6,-2.5" stroke="#8c9591" stroke-width="0.48" opacity="0.09"/>
<path d="M216.7,51.8 l-2.0,-2.9" stroke="#8c9591" stroke-width="0.48" opacity="0.09"/>
<path d="M275.2,21.1 Q259.0,19.0 242.8,19.5" stroke="#8c9591" stroke-width="0.60" fill="none" opacity="0.14"/>
<path d="M260.4,19.7 l-8.6,-3.6" stroke="#8c9591" stroke-width="0.48" opacity="0.11"/>
<path d="M266.0,20.1 l-3.6,-1.8" stroke="#8c9591" stroke-width="0.48" opacity="0.11"/>
<path d="M247.3,19.4 l-6.3,-5.3" stroke="#8c9591" stroke-width="0.48" opacity="0.11"/>
<path d="M60.3,71.6 Q47.7,65.2 35.0,61.1" stroke="#8c9591" stroke-width="0.60" fill="none" opacity="0.21"/>
<path d="M42.3,63.7 l-4.2,-4.3" stroke="#8c9591" stroke-width="0.48" opacity="0.17"/>
<path d="M55.8,69.4 l-7.5,1.3" stroke="#8c9591" stroke-width="0.48" opacity="0.17"/>
<path d="M37.9,62.1 l-2.9,-7.8" stroke="#8c9591" stroke-width="0.48" opacity="0.17"/>
<path d="M72.6,106.4 Q90.7,100.2 108.8,97.0" stroke="#8c9591" stroke-width="0.60" fill="none" opacity="0.18"/>
<path d="M90.2,101.1 l3.7,1.7" stroke="#8c9591" stroke-width="0.48" opacity="0.14"/>
<path d="M146.3,155.7 Q129.6,150.4 113.0,147.9" stroke="#8c9591" stroke-width="0.60" fill="none" opacity="0.20"/>
<path d="M116.0,148.4 l-7.1,-5.6" stroke="#8c9591" stroke-width="0.48" opacity="0.16"/>
<path d="M127.5,150.6 l-7.9,4.5" stroke="#8c9591" stroke-width="0.48" opacity="0.16"/>
<path d="M132.3,151.7 l-4.1,-4.3" stroke="#8c9591" stroke-width="0.48" opacity="0.16"/>
<path d="M138.1,153.3 l-2.8,-2.4" stroke="#8c9591" stroke-width="0.48" opacity="0.16"/>
<path d="M130.1,151.2 l-8.5,2.7" stroke="#8c9591" stroke-width="0.48" opacity="0.16"/>
<path d="M171.5,37.8 Q165.5,38.4 159.6,40.0" stroke="#8c9591" stroke-width="0.60" fill="none" opacity="0.17"/>
<path d="M160.3,39.8 l-6.5,5.9" stroke="#8c9591" stroke-width="0.48" opacity="0.14"/>
<path d="M163.5,39.1 l-3.3,4.5" stroke="#8c9591" stroke-width="0.48" opacity="0.14"/>
<path d="M168.5,38.2 l-3.6,3.1" stroke="#8c9591" stroke-width="0.48" opacity="0.14"/>
<path d="M161.6,39.5 l-7.0,-5.0" stroke="#8c9591" stroke-width="0.48" opacity="0.14"/>
<path d="M166.0,38.6 l-5.6,5.0" stroke="#8c9591" stroke-width="0.48" opacity="0.14"/>
<path d="M275.2,208.4 Q256.7,203.7 238.3,202.0" stroke="#8c9591" stroke-width="0.60" fill="none" opacity="0.15"/>
<path d="M249.0,203.3 l-6.9,-7.1" stroke="#8c9591" stroke-width="0.48" opacity="0.12"/>
<path d="M383.5,105.3 Q365.6,101.5 347.7,100.6" stroke="#8c9591" stroke-width="0.60" fill="none" opacity="0.16"/>
<path d="M355.2,101.1 l-8.8,3.5" stroke="#8c9591" stroke-width="0.48" opacity="0.13"/>
<path d="M364.4,102.1 l-4.0,2.1" stroke="#8c9591" stroke-width="0.48" opacity="0.13"/>
<path d="M-13.8,90.2 Q-30.4,90.3 -47.0,93.1" stroke="#8c9591" stroke-width="0.60" fill="none" opacity="0.10"/>
<path d="M-31.2,91.1 l-5.8,2.8" stroke="#8c9591" stroke-width="0.48" opacity="0.08"/>
<path d="M-30.0,90.9 l-4.9,-2.4" stroke="#8c9591" stroke-width="0.48" opacity="0.08"/>
<path d="M-43.3,92.5 l-8.6,-2.9" stroke="#8c9591" stroke-width="0.48" opacity="0.08"/>
<path d="M-40.3,92.1 l-3.1,-1.8" stroke="#8c9591" stroke-width="0.48" opacity="0.08"/>
<path d="M72.8,132.6 Q92.6,132.4 112.4,135.3" stroke="#8c9591" stroke-width="0.60" fill="none" opacity="0.21"/>
<path d="M102.8,134.1 l6.6,3.5" stroke="#8c9591" stroke-width="0.48" opacity="0.17"/>
<path d="M142.3,25.7 Q158.8,27.9 175.3,32.9" stroke="#8c9591" stroke-width="0.60" fill="none" opacity="0.21"/>
<path d="M162.3,29.4 l7.0,4.9" stroke="#8c9591" stroke-width="0.48" opacity="0.17"/>
<path d="M151.1,27.1 l2.7,-2.0" stroke="#8c9591" stroke-width="0.48" opacity="0.17"/>
<path d="M167.8,30.8 l3.5,-1.4" stroke="#8c9591" stroke-width="0.48" opacity="0.17"/>
<path d="M162.1,29.4 l4.0,2.9" stroke="#8c9591" stroke-width="0.48" opacity="0.17"/>
<path d="M156.1,28.0 l3.9,4.5" stroke="#8c9591" stroke-width="0.48" opacity="0.17"/>
<path d="M28.3,190.1 Q18.8,190.5 9.3,192.5" stroke="#8c9591" stroke-width="0.60" fill="none" opacity="0.18"/>
<path d="M19.2,190.9 l-6.0,-2.9" stroke="#8c9591" stroke-width="0.48" opacity="0.14"/>
<path d="M24.8,190.3 l-2.9,1.7" stroke="#8c9591" stroke-width="0.48" opacity="0.14"/>
<path d="M51.4,42.5 Q55.1,43.8 58.8,45.8" stroke="#8c9591" stroke-width="0.60" fill="none" opacity="0.20"/>
<path d="M56.2,44.5 l4.1,4.8" stroke="#8c9591" stroke-width="0.48" opacity="0.16"/>
<path d="M57.0,44.9 l8.4,-2.3" stroke="#8c9591" stroke-width="0.48" opacity="0.16"/>
<path d="M54.6,43.8 l5.5,-2.3" stroke="#8c9591" stroke-width="0.48" opacity="0.16"/>
<path d="M55.3,44.1 l2.7,2.9" stroke="#8c9591" stroke-width="0.48" opacity="0.16"/>
<path d="M127.8,182.1 Q138.7,180.8 149.7,181.3" stroke="#8c9591" stroke-width="0.60" fill="none" opacity="0.16"/>
<path d="M145.0,181.1 l4.5,4.8" stroke="#8c9591" stroke-width="0.48" opacity="0.12"/>
<path d="M143.3,181.1 l3.4,2.3" stroke="#8c9591" stroke-width="0.48" opacity="0.12"/>
<path d="M147.4,181.2 l5.4,4.2" stroke="#8c9591" stroke-width="0.48" opacity="0.12"/>
<path d="M96.5,75.4 Q87.5,73.6 78.5,73.3" stroke="#8c9591" stroke-width="0.60" fill="none" opacity="0.14"/>
<path d="M92.9,74.8 l-7.2,3.1" stroke="#8c9591" stroke-width="0.48" opacity="0.11"/>
<path d="M91.1,74.5 l-4.3,3.2" stroke="#8c9591" stroke-width="0.48" opacity="0.11"/>
<path d="M99.8,155.7 Q92.6,154.3 85.5,154.1" stroke="#8c9591" stroke-width="0.60" fill="none" opacity="0.16"/>
<path d="M89.2,154.3 l-4.5,2.5" stroke="#8c9591" stroke-width="0.48" opacity="0.13"/>
<path d="M26.2,21.6 Q43.8,13.0 61.4,7.5" stroke="#8c9591" stroke-width="0.60" fill="none" opacity="0.14"/>
<path d="M58.5,8.4 l3.7,-8.8" stroke="#8c9591" stroke-width="0.48" opacity="0.11"/>
<path d="M40.8,15.0 l6.7,-6.8" stroke="#8c9591" stroke-width="0.48" opacity="0.11"/>
<path d="M40.0,15.3 l6.1,0.5" stroke="#8c9591" stroke-width="0.48" opacity="0.11"/>
<path d="M446.0,186.1 Q441.3,184.8 436.5,184.3" stroke="#8c9591" stroke-width="0.60" fill="none" opacity="0.14"/>
<path d="M441.5,185.0 l-3.5,0.7" stroke="#8c9591" stroke-width="0.48" opacity="0.11"/>
<path d="M442.7,185.3 l-7.5,3.1" stroke="#8c9591" stroke-width="0.48" opacity="0.11"/>
<path d="M440.8,184.9 l-7.8,3.1" stroke="#8c9591" stroke-width="0.48" opacity="0.11"/>
<path d="M440.4,184.8 l-5.4,2.0" stroke="#8c9591" stroke-width="0.48" opacity="0.11"/>
<path d="M216.7,9.8 Q232.4,2.6 248.1,-1.9" stroke="#8c9591" stroke-width="0.60" fill="none" opacity="0.17"/>
<path d="M228.8,4.6 l3.4,-3.7" stroke="#8c9591" stroke-width="0.48" opacity="0.14"/>
<path d="M397.2,127.9 Q387.5,126.7 377.7,127.0" stroke="#8c9591" stroke-width="0.60" fill="none" opacity="0.16"/>
<path d="M387.8,127.1 l-5.5,2.0" stroke="#8c9591" stroke-width="0.48" opacity="0.13"/>
<path d="M180.4,58.0 Q196.4,61.5 212.4,67.6" stroke="#8c9591" stroke-width="0.60" fill="none" opacity="0.21"/>
<path d="M202.4,64.0 l5.5,-2.9" stroke="#8c9591" stroke-width="0.48" opacity="0.17"/>
<path d="M206.3,65.4 l6.3,-2.4" stroke="#8c9591" stroke-width="0.48" opacity="0.17"/>
<path d="M48.9,1.6 Q30.9,-3.6 12.9,-5.8" stroke="#8c9591" stroke-width="0.60" fill="none" opacity="0.21"/>
<path d="M40.2,-0.7 l-7.4,1.1" stroke="#8c9591" stroke-width="0.48" opacity="0.17"/>
<path d="M37.0,-1.5 l-6.5,4.9" stroke="#8c9591" stroke-width="0.48" opacity="0.17"/>
<path d="M31.7,-2.7 l-4.1,-4.7" stroke="#8c9591" stroke-width="0.48" opacity="0.17"/>
<path d="M23.3,-4.2 l-3.3,1.4" stroke="#8c9591" stroke-width="0.48" opacity="0.17"/>
<path d="M155.5,22.4 Q173.5,14.8 191.4,10.2" stroke="#8c9591" stroke-width="0.60" fill="none" opacity="0.15"/>
<path d="M176.8,14.5 l4.3,-4.9" stroke="#8c9591" stroke-width="0.48" opacity="0.12"/>
<path d="M172.7,15.8 l6.3,0.6" stroke="#8c9591" stroke-width="0.48" opacity="0.12"/>
<path d="M169.8,16.8 l1.6,-2.7" stroke="#8c9591" stroke-width="0.48" opacity="0.12"/>
<path d="M82.8,196.3 Q96.4,193.4 109.9,192.7" stroke="#8c9591" stroke-width="0.60" fill="none" opacity="0.22"/>
<path d="M101.1,193.4 l2.1,-3.3" stroke="#8c9591" stroke-width="0.48" opacity="0.18"/>
<path d="M107.5,192.9 l8.3,-4.9" stroke="#8c9591" stroke-width="0.48" opacity="0.18"/>
<path d="M89.4,195.0 l3.1,1.7" stroke="#8c9591" stroke-width="0.48" opacity="0.18"/>
<path d="M210.7,59.8 Q216.7,58.5 222.7,58.2" stroke="#8c9591" stroke-width="0.60" fill="none" opacity="0.21"/>
<path d="M221.7,58.3 l5.9,4.1" stroke="#8c9591" stroke-width="0.48" opacity="0.17"/>
<path d="M213.8,59.2 l4.0,-2.6" stroke="#8c9591" stroke-width="0.48" opacity="0.17"/>
<path d="M219.6,58.4 l2.2,-3.1" stroke="#8c9591" stroke-width="0.48" opacity="0.17"/>
<path d="M416.6,182.4 Q428.7,176.7 440.9,173.0" stroke="#8c9591" stroke-width="0.60" fill="none" opacity="0.19"/>
<path d="M421.1,180.4 l3.4,0.0" stroke="#8c9591" stroke-width="0.48" opacity="0.15"/>
<path d="M283.6,147.7 Q269.1,149.0 254.7,152.7" stroke="#8c9591" stroke-width="0.60" fill="none" opacity="0.14"/>
<path d="M261.7,151.1 l-4.1,3.9" stroke="#8c9591" stroke-width="0.48" opacity="0.12"/>
<path d="M86.5,97.0 Q80.5,99.2 74.6,102.4" stroke="#8c9591" stroke-width="0.60" fill="none" opacity="0.21"/>
<path d="M83.4,98.2 l-9.4,-2.7" stroke="#8c9591" stroke-width="0.48" opacity="0.17"/>
<path d="M84.5,97.8 l-8.6,-2.7" stroke="#8c9591" stroke-width="0.48" opacity="0.17"/>
<path d="M298.5,76.2 Q312.6,73.2 326.7,72.4" stroke="#8c9591" stroke-width="0.60" fill="none" opacity="0.22"/>
<path d="M323.3,72.6 l6.2,4.6" stroke="#8c9591" stroke-width="0.48" opacity="0.17"/>
<path d="M324.4,72.6 l7.8,3.8" stroke="#8c9591" stroke-width="0.48" opacity="0.17"/>
<path d="M303.1,75.3 l4.3,-5.9" stroke="#8c9591" stroke-width="0.48" opacity="0.17"/>
<path d="M316.5,73.2 l3.8,-4.0" stroke="#8c9591" stroke-width="0.48" opacity="0.17"/>
<path d="M310.0,74.1 l5.6,3.2" stroke="#8c9591" stroke-width="0.48" opacity="0.17"/>
<path d="M422.6,166.0 Q411.8,169.0 401.1,173.8" stroke="#8c9591" stroke-width="0.60" fill="none" opacity="0.15"/>
<path d="M409.8,170.2 l-8.2,-4.7" stroke="#8c9591" stroke-width="0.48" opacity="0.12"/>
<path d="M184.9,59.1 Q172.0,60.8 159.1,64.7" stroke="#8c9591" stroke-width="0.60" fill="none" opacity="0.19"/>
<path d="M168.7,62.1 l-5.7,-1.8" stroke="#8c9591" stroke-width="0.48" opacity="0.15"/>
<path d="M487.2,42.1 Q494.2,38.3 501.1,35.8" stroke="#8c9591" stroke-width="0.60" fill="none" opacity="0.14"/>
<path d="M493.1,39.1 l8.6,2.6" stroke="#8c9591" stroke-width="0.48" opacity="0.11"/>
<path d="M493.3,39.0 l5.3,2.4" stroke="#8c9591" stroke-width="0.48" opacity="0.11"/>
<path d="M497.9,37.0 l2.9,-8.1" stroke="#8c9591" stroke-width="0.48" opacity="0.11"/>
<path d="M364.6,11.9 Q357.1,8.5 349.6,6.4" stroke="#8c9591" stroke-width="0.60" fill="none" opacity="0.20"/>
<path d="M353.1,7.4 l-2.1,-3.5" stroke="#8c9591" stroke-width="0.48" opacity="0.16"/>
<path d="M355.1,8.1 l-3.8,1.0" stroke="#8c9591" stroke-width="0.48" opacity="0.16"/>
<path d="M359.1,9.6 l-9.0,4.1" stroke="#8c9591" stroke-width="0.48" opacity="0.16"/>
<path d="M353.6,7.6 l-2.2,-2.3" stroke="#8c9591" stroke-width="0.48" opacity="0.16"/>
<path d="M358.7,9.4 l-6.6,3.1" stroke="#8c9591" stroke-width="0.48" opacity="0.16"/>
<path d="M486.7,120.9 Q469.6,126.0 452.6,134.0" stroke="#8c9591" stroke-width="0.60" fill="none" opacity="0.13"/>
<path d="M479.1,123.3 l-6.9,-1.6" stroke="#8c9591" stroke-width="0.48" opacity="0.10"/>
<path d="M467.6,127.5 l-7.3,-2.7" stroke="#8c9591" stroke-width="0.48" opacity="0.10"/>
<path d="M467.2,127.6 l-3.0,-0.0" stroke="#8c9591" stroke-width="0.48" opacity="0.10"/>
<path d="M440.2,176.0 Q457.9,174.5 475.6,175.8" stroke="#8c9591" stroke-width="0.60" fill="none" opacity="0.15"/>
<path d="M446.6,175.5 l5.1,4.3" stroke="#8c9591" stroke-width="0.48" opacity="0.12"/>
<path d="M448.8,175.4 l7.0,4.0" stroke="#8c9591" stroke-width="0.48" opacity="0.12"/>
<path d="M467.4,175.4 l5.8,4.1" stroke="#8c9591" stroke-width="0.48" opacity="0.12"/>
<path d="M413.2,185.7 Q422.6,187.2 431.9,190.2" stroke="#8c9591" stroke-width="0.60" fill="none" opacity="0.14"/>
<path d="M429.7,189.5 l3.2,-1.8" stroke="#8c9591" stroke-width="0.48" opacity="0.12"/>
<path d="M430.7,189.8 l6.7,-2.5" stroke="#8c9591" stroke-width="0.48" opacity="0.12"/>
<path d="M450.4,151.8 Q463.2,156.0 476.1,162.6" stroke="#8c9591" stroke-width="0.60" fill="none" opacity="0.14"/>
<path d="M456.0,153.7 l3.1,-0.1" stroke="#8c9591" stroke-width="0.48" opacity="0.11"/>
<path d="M466.2,157.9 l3.6,4.6" stroke="#8c9591" stroke-width="0.48" opacity="0.11"/>
<path d="M77.8,92.5 Q82.3,92.6 86.8,93.4" stroke="#8c9591" stroke-width="0.60" fill="none" opacity="0.20"/>
<path d="M80.9,92.7 l2.7,2.8" stroke="#8c9591" stroke-width="0.48" opacity="0.16"/>
<path d="M412.4,156.3 Q403.6,155.7 394.9,156.4" stroke="#8c9591" stroke-width="0.60" fill="none" opacity="0.16"/>
<path d="M396.8,156.2 l-4.8,-4.8" stroke="#8c9591" stroke-width="0.48" opacity="0.13"/>
<path d="M421.4,46.5 Q413.4,42.4 405.3,39.7" stroke="#8c9591" stroke-width="0.60" fill="none" opacity="0.21"/>
<path d="M407.8,40.6 l-5.9,-6.8" stroke="#8c9591" stroke-width="0.48" opacity="0.16"/>
<path d="M413.4,42.7 l-5.1,-5.2" stroke="#8c9591" stroke-width="0.48" opacity="0.16"/>
<path d="M412.1,42.2 l-3.4,0.0" stroke="#8c9591" stroke-width="0.48" opacity="0.16"/>
<path d="M363.8,94.6 Q355.9,93.3 348.0,93.2" stroke="#8c9591" stroke-width="0.60" fill="none" opacity="0.20"/>
<path d="M354.5,93.5 l-3.9,-4.1" stroke="#8c9591" stroke-width="0.48" opacity="0.16"/>
<path d="M472.0,149.3 Q453.4,141.4 434.7,136.7" stroke="#8c9591" stroke-width="0.60" fill="none" opacity="0.20"/>
<path d="M449.9,141.1 l-3.5,0.9" stroke="#8c9591" stroke-width="0.48" opacity="0.16"/>
<path d="M464.9,146.4 l-3.4,1.8" stroke="#8c9591" stroke-width="0.48" opacity="0.16"/>
<path d="M182.3,211.6 Q177.3,211.0 172.3,211.2" stroke="#8c9591" stroke-width="0.60" fill="none" opacity="0.17"/>
<path d="M178.8,211.3 l-4.7,4.2" stroke="#8c9591" stroke-width="0.48" opacity="0.13"/>
<path d="M294.6,102.4 Q277.0,92.9 259.4,86.5" stroke="#8c9591" stroke-width="0.60" fill="none" opacity="0.13"/>
<path d="M272.6,91.8 l-3.5,-6.6" stroke="#8c9591" stroke-width="0.48" opacity="0.11"/>
<path d="M214.3,86.0 Q200.8,80.7 187.3,77.7" stroke="#8c9591" stroke-width="0.60" fill="none" opacity="0.21"/>
<path d="M191.1,78.6 l-3.8,2.0" stroke="#8c9591" stroke-width="0.48" opacity="0.17"/>
<path d="M192.8,79.0 l-4.5,0.7" stroke="#8c9591" stroke-width="0.48" opacity="0.17"/>
<path d="M200.6,81.2 l-5.2,3.3" stroke="#8c9591" stroke-width="0.48" opacity="0.17"/>
<path d="M204.0,82.3 l-5.4,2.6" stroke="#8c9591" stroke-width="0.48" opacity="0.17"/>
<path d="M438.0,198.6 Q446.9,198.3 455.7,199.4" stroke="#8c9591" stroke-width="0.60" fill="none" opacity="0.22"/>
<path d="M447.8,198.7 l3.5,-1.9" stroke="#8c9591" stroke-width="0.48" opacity="0.17"/>
<path d="M454.7,199.3 l5.6,6.1" stroke="#8c9591" stroke-width="0.48" opacity="0.17"/>
<path d="M451.1,198.9 l7.1,5.5" stroke="#8c9591" stroke-width="0.48" opacity="0.17"/>
<path d="M451.9,199.0 l7.9,-5.5" stroke="#8c9591" stroke-width="0.48" opacity="0.17"/>
<path d="M446.5,198.6 l2.9,2.8" stroke="#8c9591" stroke-width="0.48" opacity="0.17"/>
<path d="M51.2,109.4 Q56.6,107.0 62.0,105.5" stroke="#8c9591" stroke-width="0.60" fill="none" opacity="0.11"/>
<path d="M60.4,106.0 l3.0,-6.2" stroke="#8c9591" stroke-width="0.48" opacity="0.09"/>
<path d="M455.6,132.2 Q451.3,131.3 447.0,131.1" stroke="#8c9591" stroke-width="0.60" fill="none" opacity="0.11"/>
<path d="M450.2,131.4 l-4.0,-2.7" stroke="#8c9591" stroke-width="0.48" opacity="0.09"/>
<path d="M451.9,131.6 l-6.7,-5.9" stroke="#8c9591" stroke-width="0.48" opacity="0.09"/>
<path d="M90.0,88.6 Q74.0,92.6 58.0,99.4" stroke="#8c9591" stroke-width="0.60" fill="none" opacity="0.12"/>
<path d="M76.2,92.6 l-5.1,-1.8" stroke="#8c9591" stroke-width="0.48" opacity="0.09"/>
<path d="M453.2,160.6 Q468.9,160.2 484.5,162.3" stroke="#8c9591" stroke-width="0.60" fill="none" opacity="0.13"/>
<path d="M464.4,160.7 l6.6,-6.3" stroke="#8c9591" stroke-width="0.48" opacity="0.11"/>
<path d="M466.6,160.7 l8.8,-4.0" stroke="#8c9591" stroke-width="0.48" opacity="0.11"/>
<path d="M315.7,66.8 Q299.4,66.6 283.1,69.1" stroke="#8c9591" stroke-width="0.60" fill="none" opacity="0.13"/>
<path d="M308.2,66.8 l-6.2,-5.7" stroke="#8c9591" stroke-width="0.48" opacity="0.10"/>
<path d="M222.7,40.7 Q206.1,44.3 189.6,50.6" stroke="#8c9591" stroke-width="0.60" fill="none" opacity="0.22"/>
<path d="M202.4,46.1 l-4.4,-1.7" stroke="#8c9591" stroke-width="0.48" opacity="0.17"/>
<path d="M209.1,44.1 l-4.1,3.9" stroke="#8c9591" stroke-width="0.48" opacity="0.17"/>
<path d="M200.7,46.6 l-8.3,-3.6" stroke="#8c9591" stroke-width="0.48" opacity="0.17"/>
<path d="M211.3,43.5 l-3.4,-1.8" stroke="#8c9591" stroke-width="0.48" opacity="0.17"/>
<path d="M203.2,45.8 l-6.1,-2.7" stroke="#8c9591" stroke-width="0.48" opacity="0.17"/>
<path d="M269.4,118.8 Q260.8,118.7 252.1,120.0" stroke="#8c9591" stroke-width="0.60" fill="none" opacity="0.14"/>
<path d="M253.7,119.7 l-3.9,3.2" stroke="#8c9591" stroke-width="0.48" opacity="0.11"/>
<path d="M215.6,38.3 Q200.7,39.5 185.8,43.1" stroke="#8c9591" stroke-width="0.60" fill="none" opacity="0.20"/>
<path d="M206.6,39.3 l-3.1,-1.7" stroke="#8c9591" stroke-width="0.48" opacity="0.16"/>
<path d="M335.2,171.0 Q346.2,166.6 357.2,163.9" stroke="#8c9591" stroke-width="0.60" fill="none" opacity="0.16"/>
<path d="M350.6,165.7 l2.6,-3.7" stroke="#8c9591" stroke-width="0.48" opacity="0.13"/>
<path d="M355.6,164.3 l5.0,-5.3" stroke="#8c9591" stroke-width="0.48" opacity="0.13"/>
<path d="M345.1,167.4 l4.0,-4.5" stroke="#8c9591" stroke-width="0.48" opacity="0.13"/>
<path d="M341.1,168.8 l6.1,2.3" stroke="#8c9591" stroke-width="0.48" opacity="0.13"/>
<path d="M345.3,167.3 l2.4,-2.7" stroke="#8c9591" stroke-width="0.48" opacity="0.13"/>
<path d="M370.6,183.2 Q354.1,181.0 337.6,181.4" stroke="#8c9591" stroke-width="0.60" fill="none" opacity="0.19"/>
<path d="M343.6,181.3 l-6.2,4.6" stroke="#8c9591" stroke-width="0.48" opacity="0.15"/>
<path d="M350.9,181.5 l-2.9,-2.1" stroke="#8c9591" stroke-width="0.48" opacity="0.15"/>
<path d="M340.1,181.3 l-5.2,-3.6" stroke="#8c9591" stroke-width="0.48" opacity="0.15"/>
<path d="M349.3,181.4 l-3.3,-3.9" stroke="#8c9591" stroke-width="0.48" opacity="0.15"/>
<path d="M361.0,182.1 l-6.1,-5.2" stroke="#8c9591" stroke-width="0.48" opacity="0.15"/>
<path d="M95.2,62.8 Q98.9,64.1 102.7,66.1" stroke="#8c9591" stroke-width="0.60" fill="none" opacity="0.21"/>
<path d="M96.8,63.4 l7.9,-3.2" stroke="#8c9591" stroke-width="0.48" opacity="0.17"/>
<path d="M98.5,64.1 l4.8,-1.3" stroke="#8c9591" stroke-width="0.48" opacity="0.17"/>
<path d="M102.2,65.9 l8.2,-3.0" stroke="#8c9591" stroke-width="0.48" opacity="0.17"/>
<path d="M99.9,64.7 l3.1,4.3" stroke="#8c9591" stroke-width="0.48" opacity="0.17"/>
<path d="M247.2,126.7 Q235.6,123.6 224.0,122.4" stroke="#8c9591" stroke-width="0.60" fill="none" opacity="0.12"/>
<path d="M239.8,125.0 l-4.1,2.1" stroke="#8c9591" stroke-width="0.48" opacity="0.10"/>
<path d="M238.7,124.7 l-6.5,3.5" stroke="#8c9591" stroke-width="0.48" opacity="0.10"/>
<path d="M464.4,38.0 Q474.1,36.7 483.9,36.9" stroke="#8c9591" stroke-width="0.60" fill="none" opacity="0.22"/>
<path d="M478.0,36.9 l4.2,2.3" stroke="#8c9591" stroke-width="0.48" opacity="0.17"/>
<path d="M482.9,36.9 l4.8,3.2" stroke="#8c9591" stroke-width="0.48" opacity="0.17"/>
<path d="M475.5,37.0 l4.2,-5.4" stroke="#8c9591" stroke-width="0.48" opacity="0.17"/>
<path d="M478.9,36.9 l3.3,-1.5" stroke="#8c9591" stroke-width="0.48" opacity="0.17"/>
<path d="M7.4,176.0 Q26.3,179.3 45.2,185.7" stroke="#8c9591" stroke-width="0.60" fill="none" opacity="0.21"/>
<path d="M38.5,183.5 l3.0,-0.8" stroke="#8c9591" stroke-width="0.48" opacity="0.17"/>
<path d="M335.2,84.1 Q346.1,87.9 357.0,93.6" stroke="#8c9591" stroke-width="0.60" fill="none" opacity="0.18"/>
<path d="M348.8,89.6 l9.2,-1.8" stroke="#8c9591" stroke-width="0.48" opacity="0.14"/>
<path d="M344.8,87.8 l2.6,7.6" stroke="#8c9591" stroke-width="0.48" opacity="0.14"/>
<path d="M230.6,43.1 Q246.7,41.6 262.7,42.7" stroke="#8c9591" stroke-width="0.60" fill="none" opacity="0.13"/>
<path d="M237.8,42.5 l4.0,-2.4" stroke="#8c9591" stroke-width="0.48" opacity="0.10"/>
<path d="M186.4,21.9 Q171.4,21.8 156.4,24.1" stroke="#8c9591" stroke-width="0.60" fill="none" opacity="0.19"/>
<path d="M173.9,22.2 l-8.6,5.0" stroke="#8c9591" stroke-width="0.48" opacity="0.15"/>
<path d="M305.4,54.0 Q288.7,46.7 272.0,42.2" stroke="#8c9591" stroke-width="0.60" fill="none" opacity="0.11"/>
<path d="M295.1,49.8 l-4.8,0.9" stroke="#8c9591" stroke-width="0.48" opacity="0.08"/>
<path d="M219.9,185.6 Q208.8,185.0 197.7,186.3" stroke="#8c9591" stroke-width="0.60" fill="none" opacity="0.18"/>
<path d="M202.6,185.8 l-3.4,-3.3" stroke="#8c9591" stroke-width="0.48" opacity="0.15"/>
<path d="M215.1,185.4 l-3.9,2.3" stroke="#8c9591" stroke-width="0.48" opacity="0.15"/>
<path d="M199.8,186.1 l-5.2,3.0" stroke="#8c9591" stroke-width="0.48" opacity="0.15"/>
<path d="M216.4,185.4 l-8.9,4.3" stroke="#8c9591" stroke-width="0.48" opacity="0.15"/>
<path d="M321.8,198.2 Q330.9,197.6 339.9,198.6" stroke="#8c9591" stroke-width="0.60" fill="none" opacity="0.14"/>
<path d="M327.7,198.0 l4.7,2.8" stroke="#8c9591" stroke-width="0.48" opacity="0.11"/>
<path d="M336.6,198.3 l4.2,4.6" stroke="#8c9591" stroke-width="0.48" opacity="0.11"/>
<path d="M324.8,198.0 l3.8,3.6" stroke="#8c9591" stroke-width="0.48" opacity="0.11"/>
<path d="M332.4,198.1 l5.2,4.1" stroke="#8c9591" stroke-width="0.48" opacity="0.11"/>
<path d="M34.5,105.8 Q50.6,103.5 66.6,103.8" stroke="#8c9591" stroke-width="0.60" fill="none" opacity="0.17"/>
<path d="M58.3,103.8 l3.3,-2.4" stroke="#8c9591" stroke-width="0.48" opacity="0.14"/>
<path d="M418.9,161.2 Q401.9,167.0 384.8,175.8" stroke="#8c9591" stroke-width="0.60" fill="none" opacity="0.14"/>
<path d="M392.9,171.8 l-6.5,0.2" stroke="#8c9591" stroke-width="0.48" opacity="0.12"/>
<path d="M377.9,14.5 Q373.6,14.2 369.2,14.5" stroke="#8c9591" stroke-width="0.60" fill="none" opacity="0.20"/>
<path d="M373.1,14.4 l-7.0,-5.0" stroke="#8c9591" stroke-width="0.48" opacity="0.16"/>
<path d="M375.3,14.4 l-3.1,-1.7" stroke="#8c9591" stroke-width="0.48" opacity="0.16"/>
<path d="M371.1,14.4 l-5.0,4.1" stroke="#8c9591" stroke-width="0.48" opacity="0.16"/>
<path d="M372.7,14.4 l-6.2,4.2" stroke="#8c9591" stroke-width="0.48" opacity="0.16"/>
<path d="M410.6,78.7 Q391.6,82.7 372.7,89.9" stroke="#8c9591" stroke-width="0.60" fill="none" opacity="0.19"/>
<path d="M388.9,84.3 l-6.5,-2.8" stroke="#8c9591" stroke-width="0.48" opacity="0.15"/>
<path d="M397.4,81.9 l-4.2,5.9" stroke="#8c9591" stroke-width="0.48" opacity="0.15"/>
<path d="M391.9,83.4 l-2.1,4.2" stroke="#8c9591" stroke-width="0.48" opacity="0.15"/>
<path d="M404.7,80.0 l-2.8,2.8" stroke="#8c9591" stroke-width="0.48" opacity="0.15"/>
<path d="M391.3,83.6 l-5.4,-2.7" stroke="#8c9591" stroke-width="0.48" opacity="0.15"/>
<path d="M399.9,156.0 Q411.1,154.6 422.2,154.9" stroke="#8c9591" stroke-width="0.60" fill="none" opacity="0.18"/>
<path d="M407.0,155.3 l3.8,-3.1" stroke="#8c9591" stroke-width="0.48" opacity="0.14"/>
<path d="M412.5,154.9 l3.8,-4.1" stroke="#8c9591" stroke-width="0.48" opacity="0.14"/>
<path d="M414.9,154.9 l6.1,-2.9" stroke="#8c9591" stroke-width="0.48" opacity="0.14"/>
<path d="M497.3,16.6 Q513.8,17.5 530.4,21.0" stroke="#8c9591" stroke-width="0.60" fill="none" opacity="0.12"/>
<path d="M511.5,17.8 l5.8,-4.7" stroke="#8c9591" stroke-width="0.48" opacity="0.09"/>
<path d="M526.2,20.2 l7.4,-3.8" stroke="#8c9591" stroke-width="0.48" opacity="0.09"/>
<path d="M523.9,19.7 l4.5,-2.2" stroke="#8c9591" stroke-width="0.48" opacity="0.09"/>
<path d="M378.1,211.6 Q389.7,209.4 401.3,209.1" stroke="#8c9591" stroke-width="0.60" fill="none" opacity="0.11"/>
<path d="M397.8,209.2 l3.4,2.5" stroke="#8c9591" stroke-width="0.48" opacity="0.09"/>
<path d="M382.7,210.8 l7.5,5.1" stroke="#8c9591" stroke-width="0.48" opacity="0.09"/>
<path d="M382.4,210.8 l9.0,3.4" stroke="#8c9591" stroke-width="0.48" opacity="0.09"/>
<path d="M397.7,209.3 l4.1,-5.2" stroke="#8c9591" stroke-width="0.48" opacity="0.09"/>
<path d="M391.8,209.7 l4.5,1.7" stroke="#8c9591" stroke-width="0.48" opacity="0.09"/>
<path d="M2.3,118.6 Q8.6,116.7 14.8,115.9" stroke="#8c9591" stroke-width="0.60" fill="none" opacity="0.11"/>
<path d="M10.6,116.6 l5.2,3.3" stroke="#8c9591" stroke-width="0.48" opacity="0.09"/>
<path d="M52.7,80.6 Q60.8,82.8 68.9,86.4" stroke="#8c9591" stroke-width="0.60" fill="none" opacity="0.14"/>
<path d="M57.7,82.1 l4.2,4.3" stroke="#8c9591" stroke-width="0.48" opacity="0.11"/>
<path d="M64.6,84.6 l2.6,3.2" stroke="#8c9591" stroke-width="0.48" opacity="0.11"/>
<path d="M107.7,65.1 Q101.2,64.0 94.6,64.0" stroke="#8c9591" stroke-width="0.60" fill="none" opacity="0.11"/>
<path d="M103.0,64.5 l-2.6,-3.3" stroke="#8c9591" stroke-width="0.48" opacity="0.09"/>
<path d="M98.4,64.1 l-6.5,6.1" stroke="#8c9591" stroke-width="0.48" opacity="0.09"/>
<path d="M101.4,64.3 l-6.4,-3.1" stroke="#8c9591" stroke-width="0.48" opacity="0.09"/>
<path d="M274.1,86.0 Q278.1,86.6 282.1,87.8" stroke="#8c9591" stroke-width="0.60" fill="none" opacity="0.11"/>
<path d="M275.3,86.2 l7.2,-3.6" stroke="#8c9591" stroke-width="0.48" opacity="0.09"/>
<path d="M276.2,86.4 l6.8,-3.6" stroke="#8c9591" stroke-width="0.48" opacity="0.09"/>
<path d="M276.3,86.4 l5.4,4.5" stroke="#8c9591" stroke-width="0.48" opacity="0.09"/>
<path d="M278.7,86.9 l6.5,6.1" stroke="#8c9591" stroke-width="0.48" opacity="0.09"/>
<path d="M106.0,115.0 Q89.0,115.7 71.9,119.0" stroke="#8c9591" stroke-width="0.60" fill="none" opacity="0.19"/>
<path d="M83.9,117.0 l-6.0,4.3" stroke="#8c9591" stroke-width="0.48" opacity="0.15"/>
<path d="M74.6,61.7 Q64.7,62.4 54.9,64.8" stroke="#8c9591" stroke-width="0.60" fill="none" opacity="0.19"/>
<path d="M61.0,63.5 l-8.1,4.9" stroke="#8c9591" stroke-width="0.48" opacity="0.15"/>
<path d="M69.4,62.2 l-4.8,4.3" stroke="#8c9591" stroke-width="0.48" opacity="0.15"/>
<path d="M247.3,148.0 Q256.4,143.2 265.6,140.0" stroke="#8c9591" stroke-width="0.60" fill="none" opacity="0.20"/>
<path d="M252.9,145.2 l9.5,2.1" stroke="#8c9591" stroke-width="0.48" opacity="0.16"/>
<path d="M262.8,141.0 l7.3,3.3" stroke="#8c9591" stroke-width="0.48" opacity="0.16"/>
<path d="M263.8,140.7 l4.1,-9.1" stroke="#8c9591" stroke-width="0.48" opacity="0.16"/>
<path d="M258.8,142.6 l2.0,-6.0" stroke="#8c9591" stroke-width="0.48" opacity="0.16"/>
<path d="M217.2,214.7 Q213.1,214.6 208.9,215.2" stroke="#8c9591" stroke-width="0.60" fill="none" opacity="0.20"/>
<path d="M212.8,214.8 l-3.9,3.2" stroke="#8c9591" stroke-width="0.48" opacity="0.16"/>
<path d="M214.0,214.7 l-5.1,-2.7" stroke="#8c9591" stroke-width="0.48" opacity="0.16"/>
<path d="M211.3,214.9 l-4.4,3.7" stroke="#8c9591" stroke-width="0.48" opacity="0.16"/>
<path d="M209.7,215.1 l-5.6,-3.8" stroke="#8c9591" stroke-width="0.48" opacity="0.16"/>
<path d="M392.9,134.9 Q378.6,131.8 364.3,131.0" stroke="#8c9591" stroke-width="0.60" fill="none" opacity="0.18"/>
<path d="M369.7,131.4 l-4.7,-4.4" stroke="#8c9591" stroke-width="0.48" opacity="0.14"/>
<path d="M387.4,133.8 l-2.6,-3.9" stroke="#8c9591" stroke-width="0.48" opacity="0.14"/>
<path d="M483.1,165.4 Q498.4,167.9 513.7,172.8" stroke="#8c9591" stroke-width="0.60" fill="none" opacity="0.22"/>
<path d="M497.0,168.2 l6.8,4.7" stroke="#8c9591" stroke-width="0.48" opacity="0.17"/>
<path d="M499.1,168.7 l4.1,-2.6" stroke="#8c9591" stroke-width="0.48" opacity="0.17"/>
<path d="M500.1,168.9 l6.6,-4.3" stroke="#8c9591" stroke-width="0.48" opacity="0.17"/>
<path d="M488.8,166.4 l6.4,5.8" stroke="#8c9591" stroke-width="0.48" opacity="0.17"/>
<path d="M5.2,192.6 Q12.2,193.9 19.1,196.3" stroke="#8c9591" stroke-width="0.60" fill="none" opacity="0.16"/>
<path d="M16.7,195.5 l4.7,6.5" stroke="#8c9591" stroke-width="0.48" opacity="0.13"/>
<path d="M73.5,204.7 Q56.5,198.2 39.4,194.6" stroke="#8c9591" stroke-width="0.60" fill="none" opacity="0.13"/>
<path d="M61.1,200.3 l-3.0,-3.1" stroke="#8c9591" stroke-width="0.48" opacity="0.10"/>
<path d="M43.7,195.6 l-2.5,-2.4" stroke="#8c9591" stroke-width="0.48" opacity="0.10"/>
<path d="M42.4,195.3 l-5.9,0.8" stroke="#8c9591" stroke-width="0.48" opacity="0.10"/>
<path d="M65.2,201.7 l-5.7,3.6" stroke="#8c9591" stroke-width="0.48" opacity="0.10"/>
<path d="M127.1,18.4 Q121.3,19.2 115.6,20.9" stroke="#8c9591" stroke-width="0.60" fill="none" opacity="0.12"/>
<path d="M123.7,19.0 l-4.8,6.7" stroke="#8c9591" stroke-width="0.48" opacity="0.10"/>
<path d="M120.2,19.7 l-5.3,5.2" stroke="#8c9591" stroke-width="0.48" opacity="0.10"/>
<path d="M117.5,20.4 l-7.1,-2.0" stroke="#8c9591" stroke-width="0.48" opacity="0.10"/>
<path d="M118.3,20.1 l-5.4,7.2" stroke="#8c9591" stroke-width="0.48" opacity="0.10"/>
<path d="M123.4,19.0 l-6.9,-4.5" stroke="#8c9591" stroke-width="0.48" opacity="0.10"/>
<path d="M466.5,210.4 Q450.7,207.4 435.0,206.9" stroke="#8c9591" stroke-width="0.60" fill="none" opacity="0.13"/>
<path d="M455.0,208.5 l-2.0,-2.9" stroke="#8c9591" stroke-width="0.48" opacity="0.10"/>
<path d="M438.9,207.1 l-5.1,-4.8" stroke="#8c9591" stroke-width="0.48" opacity="0.10"/>
<path d="M442.9,207.3 l-6.1,3.4" stroke="#8c9591" stroke-width="0.48" opacity="0.10"/>
<path d="M437.2,207.0 l-5.9,2.0" stroke="#8c9591" stroke-width="0.48" opacity="0.10"/>
<path d="M487.3,72.0 Q506.0,66.7 524.6,64.5" stroke="#8c9591" stroke-width="0.60" fill="none" opacity="0.21"/>
<path d="M515.9,65.7 l4.5,2.3" stroke="#8c9591" stroke-width="0.48" opacity="0.17"/>
<path d="M521.6,64.8 l5.6,-4.1" stroke="#8c9591" stroke-width="0.48" opacity="0.17"/>
<path d="M512.8,66.2 l3.3,-5.1" stroke="#8c9591" stroke-width="0.48" opacity="0.17"/>
<path d="M484.0,196.8 Q496.7,193.8 509.4,192.8" stroke="#8c9591" stroke-width="0.60" fill="none" opacity="0.11"/>
<path d="M503.8,193.3 l2.6,2.2" stroke="#8c9591" stroke-width="0.48" opacity="0.09"/>
<path d="M488.3,195.9 l4.3,-4.7" stroke="#8c9591" stroke-width="0.48" opacity="0.09"/>
<path d="M166.4,93.8 Q162.0,93.8 157.5,94.6" stroke="#8c9591" stroke-width="0.60" fill="none" opacity="0.17"/>
<path d="M158.1,94.5 l-4.9,4.2" stroke="#8c9591" stroke-width="0.48" opacity="0.14"/>
<path d="M162.9,93.9 l-3.9,-2.4" stroke="#8c9591" stroke-width="0.48" opacity="0.14"/>
<path d="M163.2,93.9 l-5.4,3.3" stroke="#8c9591" stroke-width="0.48" opacity="0.14"/>
<path d="M162.0,94.0 l-4.1,-3.8" stroke="#8c9591" stroke-width="0.48" opacity="0.14"/>
<path d="M161.5,94.0 l-3.7,4.3" stroke="#8c9591" stroke-width="0.48" opacity="0.14"/>
<path d="M166.2,57.3 Q160.4,55.1 154.6,53.9" stroke="#8c9591" stroke-width="0.60" fill="none" opacity="0.11"/>
<path d="M157.4,54.6 l-6.5,1.6" stroke="#8c9591" stroke-width="0.48" opacity="0.09"/>
<path d="M161.5,55.7 l-2.3,-2.5" stroke="#8c9591" stroke-width="0.48" opacity="0.09"/>
<path d="M161.4,55.7 l-5.9,3.9" stroke="#8c9591" stroke-width="0.48" opacity="0.09"/>
<path d="M160.9,55.5 l-7.3,4.1" stroke="#8c9591" stroke-width="0.48" opacity="0.09"/>
<path d="M448.2,64.1 Q435.1,57.2 421.9,52.5" stroke="#8c9591" stroke-width="0.60" fill="none" opacity="0.21"/>
<path d="M442.3,61.1 l-3.0,-6.7" stroke="#8c9591" stroke-width="0.48" opacity="0.17"/>
<path d="M434.5,57.5 l-4.2,-0.1" stroke="#8c9591" stroke-width="0.48" opacity="0.17"/>
<path d="M427.9,54.8 l-3.0,-5.8" stroke="#8c9591" stroke-width="0.48" opacity="0.17"/>
<path d="M273.9,36.8 Q260.6,34.4 247.3,34.2" stroke="#8c9591" stroke-width="0.60" fill="none" opacity="0.15"/>
<path d="M268.9,35.9 l-7.4,-3.8" stroke="#8c9591" stroke-width="0.48" opacity="0.12"/>
<path d="M259.8,34.9 l-4.3,-4.1" stroke="#8c9591" stroke-width="0.48" opacity="0.12"/>
<path d="M257.4,34.7 l-4.6,3.6" stroke="#8c9591" stroke-width="0.48" opacity="0.12"/>
<path d="M258.0,34.7 l-7.0,-6.6" stroke="#8c9591" stroke-width="0.48" opacity="0.12"/>
<path d="M252.5,34.4 l-2.9,1.9" stroke="#8c9591" stroke-width="0.48" opacity="0.12"/>
<path d="M77.2,0 L89.7,0 L91.1,215 L77.2,215z" fill="url(#trd)"/>
<path d="M139.4,0 L146.4,0 L146.4,215 L139.4,215z" fill="#322927"/>
<path d="M408.8,0 L422.7,0 L423.5,215 L409.5,215z" fill="url(#tri)"/>
<path d="M431.1,0 L440.8,0 L440.8,215 L431.1,215z" fill="url(#trj)"/>
<path d="M62.4,200.4 Q82.2,190.9 101.9,184.8" stroke="#b0b8b5" stroke-width="0.57" fill="none" opacity="0.29"/>
<path d="M80.9,192.3 l4.4,-6.6" stroke="#b0b8b5" stroke-width="0.46" opacity="0.23"/>
<path d="M92.9,187.8 l3.2,-4.8" stroke="#b0b8b5" stroke-width="0.46" opacity="0.23"/>
<path d="M430.2,96.5 Q396.2,80.8 362.2,70.8" stroke="#b0b8b5" stroke-width="0.70" fill="none" opacity="0.32"/>
<path d="M368.4,72.7 l-2.6,-7.0" stroke="#b0b8b5" stroke-width="0.56" opacity="0.25"/>
<path d="M409.8,87.6 l-4.0,1.3" stroke="#b0b8b5" stroke-width="0.56" opacity="0.25"/>
<path d="M412.2,88.6 l-3.0,-3.4" stroke="#b0b8b5" stroke-width="0.56" opacity="0.25"/>
<path d="M418.5,91.3 l-7.2,3.1" stroke="#b0b8b5" stroke-width="0.56" opacity="0.25"/>
<path d="M149.9,169.9 Q164.0,165.3 178.1,163.1" stroke="#b0b8b5" stroke-width="0.57" fill="none" opacity="0.22"/>
<path d="M164.7,165.8 l3.5,-6.7" stroke="#b0b8b5" stroke-width="0.46" opacity="0.17"/>
<path d="M157.4,167.6 l6.8,-7.0" stroke="#b0b8b5" stroke-width="0.46" opacity="0.17"/>
<path d="M163.8,166.0 l2.2,-3.6" stroke="#b0b8b5" stroke-width="0.46" opacity="0.17"/>
<path d="M165.0,165.7 l2.9,0.8" stroke="#b0b8b5" stroke-width="0.46" opacity="0.17"/>
<path d="M170.7,164.5 l4.2,-4.7" stroke="#b0b8b5" stroke-width="0.46" opacity="0.17"/>
<path d="M378.4,76.0 Q396.4,76.0 414.4,78.9" stroke="#b0b8b5" stroke-width="0.61" fill="none" opacity="0.26"/>
<path d="M396.2,76.7 l4.6,-2.0" stroke="#b0b8b5" stroke-width="0.49" opacity="0.21"/>
<path d="M398.2,76.9 l6.9,-5.2" stroke="#b0b8b5" stroke-width="0.49" opacity="0.21"/>
<path d="M403.8,77.4 l5.0,6.5" stroke="#b0b8b5" stroke-width="0.49" opacity="0.21"/>
<path d="M401.0,77.1 l5.8,5.0" stroke="#b0b8b5" stroke-width="0.49" opacity="0.21"/>
<path d="M412.6,64.5 Q388.5,56.5 364.4,52.5" stroke="#b0b8b5" stroke-width="0.72" fill="none" opacity="0.27"/>
<path d="M397.3,59.8 l-6.9,2.6" stroke="#b0b8b5" stroke-width="0.58" opacity="0.21"/>
<path d="M377.6,55.0 l-4.4,3.1" stroke="#b0b8b5" stroke-width="0.58" opacity="0.21"/>
<path d="M401.8,61.1 l-4.8,-5.5" stroke="#b0b8b5" stroke-width="0.58" opacity="0.21"/>
<path d="M420.8,56.3 Q453.7,50.8 486.6,50.5" stroke="#b0b8b5" stroke-width="0.87" fill="none" opacity="0.37"/>
<path d="M432.7,54.5 l4.1,-3.8" stroke="#b0b8b5" stroke-width="0.70" opacity="0.30"/>
<path d="M478.0,50.7 l3.0,-2.8" stroke="#b0b8b5" stroke-width="0.70" opacity="0.30"/>
<path d="M79.0,14.3 Q53.1,14.5 27.3,18.9" stroke="#b0b8b5" stroke-width="0.66" fill="none" opacity="0.25"/>
<path d="M38.5,17.2 l-7.5,-6.3" stroke="#b0b8b5" stroke-width="0.53" opacity="0.20"/>
<path d="M58.6,15.1 l-4.1,2.8" stroke="#b0b8b5" stroke-width="0.53" opacity="0.20"/>
<path d="M115.6,61.4 Q124.8,59.4 134.0,58.8" stroke="#b0b8b5" stroke-width="0.62" fill="none" opacity="0.28"/>
<path d="M118.8,60.8 l3.5,-3.4" stroke="#b0b8b5" stroke-width="0.50" opacity="0.23"/>
<path d="M130.3,59.1 l3.0,0.9" stroke="#b0b8b5" stroke-width="0.50" opacity="0.23"/>
<path d="M131.8,59.0 l4.0,-5.2" stroke="#b0b8b5" stroke-width="0.50" opacity="0.23"/>
<path d="M132.2,59.0 l4.8,-7.6" stroke="#b0b8b5" stroke-width="0.50" opacity="0.23"/>
<path d="M118.9,60.8 l4.0,2.5" stroke="#b0b8b5" stroke-width="0.50" opacity="0.23"/>
<path d="M50.9,128.7 Q23.2,117.0 -4.5,110.0" stroke="#b0b8b5" stroke-width="0.66" fill="none" opacity="0.22"/>
<path d="M1.5,111.6 l-5.5,-4.4" stroke="#b0b8b5" stroke-width="0.53" opacity="0.17"/>
<path d="M39.6,124.2 l-5.1,-7.1" stroke="#b0b8b5" stroke-width="0.53" opacity="0.17"/>
<path d="M11.6,114.5 l-1.7,-4.0" stroke="#b0b8b5" stroke-width="0.53" opacity="0.17"/>
<path d="M36.5,123.0 l-2.2,-5.6" stroke="#b0b8b5" stroke-width="0.53" opacity="0.17"/>
<path d="M150.5,3.2 Q170.6,1.2 190.7,2.3" stroke="#b0b8b5" stroke-width="0.63" fill="none" opacity="0.22"/>
<path d="M158.4,2.5 l5.3,-6.5" stroke="#b0b8b5" stroke-width="0.50" opacity="0.18"/>
<path d="M169.5,2.0 l3.3,-1.4" stroke="#b0b8b5" stroke-width="0.50" opacity="0.18"/>
<path d="M185.5,2.1 l5.2,4.1" stroke="#b0b8b5" stroke-width="0.50" opacity="0.18"/>
<path d="M186.3,2.1 l4.4,3.0" stroke="#b0b8b5" stroke-width="0.50" opacity="0.18"/>
<path d="M146.3,158.6 Q154.5,156.6 162.8,155.9" stroke="#b0b8b5" stroke-width="0.77" fill="none" opacity="0.29"/>
<path d="M159.5,156.2 l5.1,3.7" stroke="#b0b8b5" stroke-width="0.62" opacity="0.23"/>
<path d="M154.7,156.9 l4.6,1.4" stroke="#b0b8b5" stroke-width="0.62" opacity="0.23"/>
<path d="M150.2,157.7 l2.6,-1.8" stroke="#b0b8b5" stroke-width="0.62" opacity="0.23"/>
<path d="M156.4,156.6 l1.9,-2.7" stroke="#b0b8b5" stroke-width="0.62" opacity="0.23"/>
<path d="M157.7,156.4 l5.3,-6.4" stroke="#b0b8b5" stroke-width="0.62" opacity="0.23"/>
<path d="M54.9,28.6 Q30.7,23.1 6.4,21.5" stroke="#b0b8b5" stroke-width="0.86" fill="none" opacity="0.23"/>
<path d="M47.0,26.9 l-3.0,0.9" stroke="#b0b8b5" stroke-width="0.69" opacity="0.19"/>
<path d="M272.3,1.4 Q280.2,0.5 288.1,0.9" stroke="#b0b8b5" stroke-width="0.57" fill="none" opacity="0.27"/>
<path d="M285.4,0.8 l3.3,1.8" stroke="#b0b8b5" stroke-width="0.46" opacity="0.22"/>
<path d="M284.2,0.8 l2.7,-2.5" stroke="#b0b8b5" stroke-width="0.46" opacity="0.22"/>
<path d="M284.0,0.8 l4.4,-3.3" stroke="#b0b8b5" stroke-width="0.46" opacity="0.22"/>
<path d="M279.8,0.8 l2.7,2.6" stroke="#b0b8b5" stroke-width="0.46" opacity="0.22"/>
<path d="M287.3,0.9 l8.0,-3.4" stroke="#b0b8b5" stroke-width="0.46" opacity="0.22"/>
<path d="M48.8,131.7 Q22.3,135.8 -4.2,144.2" stroke="#b0b8b5" stroke-width="0.65" fill="none" opacity="0.32"/>
<path d="M-1.3,143.3 l-4.3,6.5" stroke="#b0b8b5" stroke-width="0.52" opacity="0.26"/>
<path d="M409.3,107.2 Q374.6,109.3 339.9,117.0" stroke="#b0b8b5" stroke-width="0.85" fill="none" opacity="0.27"/>
<path d="M347.9,115.3 l-6.6,-4.7" stroke="#b0b8b5" stroke-width="0.68" opacity="0.22"/>
<path d="M363.7,112.3 l-4.9,6.4" stroke="#b0b8b5" stroke-width="0.68" opacity="0.22"/>
<path d="M378.4,28.4 Q411.4,31.6 444.4,40.3" stroke="#b0b8b5" stroke-width="0.89" fill="none" opacity="0.27"/>
<path d="M395.0,30.4 l3.4,4.5" stroke="#b0b8b5" stroke-width="0.71" opacity="0.22"/>
<path d="M409.8,32.7 l6.3,7.7" stroke="#b0b8b5" stroke-width="0.71" opacity="0.22"/>
<path d="M416.3,33.9 l5.9,6.2" stroke="#b0b8b5" stroke-width="0.71" opacity="0.22"/>
<path d="M397.4,30.7 l8.5,-2.1" stroke="#b0b8b5" stroke-width="0.71" opacity="0.22"/>
<path d="M434.9,37.9 l6.9,6.9" stroke="#b0b8b5" stroke-width="0.71" opacity="0.22"/>
<path d="M377.8,154.9 Q396.2,150.5 414.6,149.2" stroke="#b0b8b5" stroke-width="0.84" fill="none" opacity="0.24"/>
<path d="M387.4,152.8 l4.5,-2.5" stroke="#b0b8b5" stroke-width="0.67" opacity="0.19"/>
<path d="M409.6,149.6 l7.4,4.0" stroke="#b0b8b5" stroke-width="0.67" opacity="0.19"/>
<path d="M411.5,149.4 l5.4,-6.6" stroke="#b0b8b5" stroke-width="0.67" opacity="0.19"/>
<path d="M404.2,150.2 l5.4,3.1" stroke="#b0b8b5" stroke-width="0.67" opacity="0.19"/>
<path d="M409.4,149.6 l4.3,1.0" stroke="#b0b8b5" stroke-width="0.67" opacity="0.19"/>
<path d="M361.0,150.2 Q324.4,150.1 287.7,155.9" stroke="#b0b8b5" stroke-width="0.58" fill="none" opacity="0.33"/>
<path d="M346.4,150.4 l-7.4,-3.7" stroke="#b0b8b5" stroke-width="0.47" opacity="0.27"/>
<path d="M335.8,150.9 l-3.2,-1.5" stroke="#b0b8b5" stroke-width="0.47" opacity="0.27"/>
<path d="M294.4,154.9 l-4.6,5.8" stroke="#b0b8b5" stroke-width="0.47" opacity="0.27"/>
<path d="M324.0,151.6 l-2.6,2.4" stroke="#b0b8b5" stroke-width="0.47" opacity="0.27"/>
<path d="M364.1,38.4 Q331.5,23.8 298.9,14.7" stroke="#b0b8b5" stroke-width="0.83" fill="none" opacity="0.24"/>
<path d="M312.2,18.6 l-3.5,0.9" stroke="#b0b8b5" stroke-width="0.66" opacity="0.19"/>
<path d="M309.0,17.6 l-2.4,-4.4" stroke="#b0b8b5" stroke-width="0.66" opacity="0.19"/>
<path d="M336.4,27.0 l-7.5,3.0" stroke="#b0b8b5" stroke-width="0.66" opacity="0.19"/>
<path d="M420.2,22.0 Q439.0,22.1 457.9,25.3" stroke="#b0b8b5" stroke-width="0.69" fill="none" opacity="0.32"/>
<path d="M450.9,24.2 l4.9,-4.8" stroke="#b0b8b5" stroke-width="0.55" opacity="0.25"/>
<path d="M428.9,22.2 l6.3,7.0" stroke="#b0b8b5" stroke-width="0.55" opacity="0.25"/>
<path d="M443.6,23.3 l6.6,6.3" stroke="#b0b8b5" stroke-width="0.55" opacity="0.25"/>
<path d="M91.4,209.4 Q108.2,202.3 125.1,198.0" stroke="#b0b8b5" stroke-width="0.63" fill="none" opacity="0.26"/>
<path d="M113.4,201.3 l7.1,-6.2" stroke="#b0b8b5" stroke-width="0.50" opacity="0.21"/>
<path d="M110.7,202.1 l1.7,-3.8" stroke="#b0b8b5" stroke-width="0.50" opacity="0.21"/>
<path d="M109.1,202.7 l3.4,-7.9" stroke="#b0b8b5" stroke-width="0.50" opacity="0.21"/>
<path d="M114.7,171.7 Q132.7,174.4 150.7,180.0" stroke="#b0b8b5" stroke-width="0.80" fill="none" opacity="0.20"/>
<path d="M148.4,179.3 l3.6,4.3" stroke="#b0b8b5" stroke-width="0.64" opacity="0.16"/>
<path d="M429.6,176.0 Q403.7,170.3 377.7,168.7" stroke="#b0b8b5" stroke-width="0.65" fill="none" opacity="0.25"/>
<path d="M386.4,169.4 l-5.1,1.4" stroke="#b0b8b5" stroke-width="0.52" opacity="0.20"/>
<path d="M400.8,170.9 l-6.4,-7.6" stroke="#b0b8b5" stroke-width="0.52" opacity="0.20"/>
<path d="M139.9,164.8 Q118.3,154.7 96.7,148.3" stroke="#b0b8b5" stroke-width="0.59" fill="none" opacity="0.22"/>
<path d="M108.1,152.0 l-2.6,-2.4" stroke="#b0b8b5" stroke-width="0.47" opacity="0.18"/>
<path d="M133.1,161.7 l-2.5,-3.9" stroke="#b0b8b5" stroke-width="0.47" opacity="0.18"/>
<path d="M133.3,161.8 l-2.7,-3.8" stroke="#b0b8b5" stroke-width="0.47" opacity="0.18"/>
<path d="M330.6,207.3 Q354.5,201.1 378.4,198.8" stroke="#b0b8b5" stroke-width="0.80" fill="none" opacity="0.21"/>
<path d="M367.9,200.0 l6.7,4.3" stroke="#b0b8b5" stroke-width="0.64" opacity="0.16"/>
<path d="M375.4,199.1 l5.2,-3.1" stroke="#b0b8b5" stroke-width="0.64" opacity="0.16"/>
<path d="M354.9,202.0 l8.3,3.8" stroke="#b0b8b5" stroke-width="0.64" opacity="0.16"/>
<path d="M373.5,199.3 l5.0,-6.6" stroke="#b0b8b5" stroke-width="0.64" opacity="0.16"/>
<path d="M374.2,199.2 l7.3,5.7" stroke="#b0b8b5" stroke-width="0.64" opacity="0.16"/>
<path d="M323.9,19.8 Q307.1,15.2 290.4,13.3" stroke="#b0b8b5" stroke-width="0.78" fill="none" opacity="0.24"/>
<path d="M294.5,13.8 l-3.1,2.2" stroke="#b0b8b5" stroke-width="0.62" opacity="0.19"/>
<path d="M425.9,170.5 Q459.6,166.1 493.2,167.0" stroke="#b0b8b5" stroke-width="0.84" fill="none" opacity="0.33"/>
<path d="M473.9,166.9 l3.2,1.3" stroke="#b0b8b5" stroke-width="0.67" opacity="0.27"/>
<path d="M437.6,169.1 l7.0,-3.8" stroke="#b0b8b5" stroke-width="0.67" opacity="0.27"/>
<path d="M481.8,166.9 l5.9,-5.8" stroke="#b0b8b5" stroke-width="0.67" opacity="0.27"/>
<path d="M489.5,166.9 l4.5,-3.4" stroke="#b0b8b5" stroke-width="0.67" opacity="0.27"/>
<path d="M488.3,166.9 l5.8,-2.9" stroke="#b0b8b5" stroke-width="0.67" opacity="0.27"/>
<path d="M409.9,118.2 Q390.6,111.9 371.3,108.8" stroke="#b0b8b5" stroke-width="0.66" fill="none" opacity="0.35"/>
<path d="M403.0,116.1 l-6.8,-6.2" stroke="#b0b8b5" stroke-width="0.53" opacity="0.28"/>
<path d="M383.2,111.0 l-3.1,1.4" stroke="#b0b8b5" stroke-width="0.53" opacity="0.28"/>
<path d="M391.3,112.9 l-3.2,1.3" stroke="#b0b8b5" stroke-width="0.53" opacity="0.28"/>
<path d="M379.3,110.3 l-2.6,-1.9" stroke="#b0b8b5" stroke-width="0.53" opacity="0.28"/>
<path d="M403.2,116.1 l-4.1,0.5" stroke="#b0b8b5" stroke-width="0.53" opacity="0.28"/>
<path d="M318.0,24.4 Q303.3,24.4 288.7,26.8" stroke="#b0b8b5" stroke-width="0.82" fill="none" opacity="0.26"/>
<path d="M311.4,24.5 l-6.2,4.0" stroke="#b0b8b5" stroke-width="0.65" opacity="0.21"/>
<path d="M379.8,148.5 Q400.3,139.4 420.7,133.8" stroke="#b0b8b5" stroke-width="0.70" fill="none" opacity="0.27"/>
<path d="M394.8,142.3 l9.2,3.0" stroke="#b0b8b5" stroke-width="0.56" opacity="0.22"/>
<path d="M374.1,207.4 Q393.3,207.4 412.4,210.5" stroke="#b0b8b5" stroke-width="0.87" fill="none" opacity="0.30"/>
<path d="M406.2,209.6 l3.5,-2.8" stroke="#b0b8b5" stroke-width="0.69" opacity="0.24"/>
<path d="M380.7,207.5 l5.9,3.7" stroke="#b0b8b5" stroke-width="0.69" opacity="0.24"/>
<path d="M167.0,207.4 Q145.4,198.8 123.9,193.9" stroke="#b0b8b5" stroke-width="0.58" fill="none" opacity="0.27"/>
<path d="M159.6,204.6 l-7.1,4.4" stroke="#b0b8b5" stroke-width="0.46" opacity="0.21"/>
<path d="M142.1,198.7 l-2.2,-3.6" stroke="#b0b8b5" stroke-width="0.46" opacity="0.21"/>
<path d="M138.5,197.7 l-8.0,4.7" stroke="#b0b8b5" stroke-width="0.46" opacity="0.21"/>
<path d="M143.1,199.0 l-3.7,-3.0" stroke="#b0b8b5" stroke-width="0.46" opacity="0.21"/>
<path d="M363.8,115.7 Q334.2,120.0 304.6,129.1" stroke="#b0b8b5" stroke-width="0.77" fill="none" opacity="0.33"/>
<path d="M348.4,118.3 l-5.6,4.5" stroke="#b0b8b5" stroke-width="0.61" opacity="0.27"/>
<path d="M336.9,120.6 l-6.0,3.8" stroke="#b0b8b5" stroke-width="0.61" opacity="0.27"/>
<path d="M329.7,122.2 l-6.3,-1.8" stroke="#b0b8b5" stroke-width="0.61" opacity="0.27"/>
<path d="M331.6,121.8 l-6.1,-3.1" stroke="#b0b8b5" stroke-width="0.61" opacity="0.27"/>
<path d="M326.9,122.9 l-8.0,5.3" stroke="#b0b8b5" stroke-width="0.61" opacity="0.27"/>
<path d="M423.6,161.2 Q460.2,152.0 496.8,148.8" stroke="#b0b8b5" stroke-width="0.80" fill="none" opacity="0.28"/>
<path d="M484.6,150.0 l6.9,5.3" stroke="#b0b8b5" stroke-width="0.64" opacity="0.22"/>
<path d="M90.9,95.2 Q127.6,96.7 164.2,104.0" stroke="#b0b8b5" stroke-width="0.76" fill="none" opacity="0.30"/>
<path d="M122.2,97.5 l6.7,-5.0" stroke="#b0b8b5" stroke-width="0.61" opacity="0.24"/>
<path d="M152.5,101.8 l5.0,4.1" stroke="#b0b8b5" stroke-width="0.61" opacity="0.24"/>
<path d="M142.6,100.2 l3.8,5.3" stroke="#b0b8b5" stroke-width="0.61" opacity="0.24"/>
<path d="M154.1,102.1 l5.6,3.1" stroke="#b0b8b5" stroke-width="0.61" opacity="0.24"/>
<path d="M89.9,20.5 Q100.4,19.2 110.9,19.7" stroke="#b0b8b5" stroke-width="0.60" fill="none" opacity="0.34"/>
<path d="M102.6,19.6 l6.8,-6.0" stroke="#b0b8b5" stroke-width="0.48" opacity="0.27"/>
<path d="M105.9,19.6 l4.3,3.8" stroke="#b0b8b5" stroke-width="0.48" opacity="0.27"/>
<path d="M94.5,20.0 l2.0,-2.3" stroke="#b0b8b5" stroke-width="0.48" opacity="0.27"/>
<path d="M94.2,20.0 l6.9,-6.4" stroke="#b0b8b5" stroke-width="0.48" opacity="0.27"/>
<path d="M440.3,94.3 Q466.0,91.1 491.7,91.9" stroke="#b0b8b5" stroke-width="0.73" fill="none" opacity="0.30"/>
<path d="M467.4,92.0 l7.5,6.0" stroke="#b0b8b5" stroke-width="0.58" opacity="0.24"/>
<path d="M482.0,91.8 l5.9,2.2" stroke="#b0b8b5" stroke-width="0.58" opacity="0.24"/>
<path d="M451.3,93.1 l5.4,-3.1" stroke="#b0b8b5" stroke-width="0.58" opacity="0.24"/>
<path d="M487.4,91.8 l3.4,3.7" stroke="#b0b8b5" stroke-width="0.58" opacity="0.24"/>
<path d="M468.6,92.0 l4.0,1.9" stroke="#b0b8b5" stroke-width="0.58" opacity="0.24"/>
<path d="M422.3,77.9 Q454.4,76.6 486.5,80.4" stroke="#b0b8b5" stroke-width="0.57" fill="none" opacity="0.25"/>
<path d="M437.4,77.5 l7.4,-2.6" stroke="#b0b8b5" stroke-width="0.45" opacity="0.20"/>
<path d="M444.6,77.6 l3.5,3.0" stroke="#b0b8b5" stroke-width="0.45" opacity="0.20"/>
<path d="M471.1,78.9 l5.5,7.0" stroke="#b0b8b5" stroke-width="0.45" opacity="0.20"/>
<path d="M269.8,47.3 Q288.2,44.8 306.5,45.3" stroke="#b0b8b5" stroke-width="0.66" fill="none" opacity="0.27"/>
<path d="M301.1,45.2 l2.8,1.8" stroke="#b0b8b5" stroke-width="0.53" opacity="0.21"/>
<path d="M292.3,45.4 l5.6,-4.2" stroke="#b0b8b5" stroke-width="0.53" opacity="0.21"/>
<path d="M281.6,46.0 l7.9,-5.4" stroke="#b0b8b5" stroke-width="0.53" opacity="0.21"/>
<path d="M299.6,45.2 l8.2,-4.6" stroke="#b0b8b5" stroke-width="0.53" opacity="0.21"/>
<path d="M428.7,65.1 Q417.4,62.9 406.0,62.5" stroke="#b0b8b5" stroke-width="0.74" fill="none" opacity="0.22"/>
<path d="M409.8,62.7 l-5.5,-7.8" stroke="#b0b8b5" stroke-width="0.59" opacity="0.18"/>
<path d="M424.8,64.3 l-4.3,2.3" stroke="#b0b8b5" stroke-width="0.59" opacity="0.18"/>
<path d="M409.6,62.6 l-2.7,2.2" stroke="#b0b8b5" stroke-width="0.59" opacity="0.18"/>
<path d="M421.7,63.9 l-2.6,1.9" stroke="#b0b8b5" stroke-width="0.59" opacity="0.18"/>
<path d="M321.5,27.4 Q302.0,18.0 282.6,12.0" stroke="#b0b8b5" stroke-width="0.63" fill="none" opacity="0.36"/>
<path d="M314.4,24.1 l-5.8,2.9" stroke="#b0b8b5" stroke-width="0.51" opacity="0.29"/>
<path d="M287.1,13.5 l-3.5,-4.9" stroke="#b0b8b5" stroke-width="0.51" opacity="0.29"/>
<path d="M292.0,15.2 l-7.5,1.1" stroke="#b0b8b5" stroke-width="0.51" opacity="0.29"/>
<path d="M301.3,18.6 l-8.0,0.9" stroke="#b0b8b5" stroke-width="0.51" opacity="0.29"/>
<path d="M312.0,23.0 l-6.7,1.0" stroke="#b0b8b5" stroke-width="0.51" opacity="0.29"/>
<path d="M317.5,111.4 Q293.2,107.4 268.9,107.3" stroke="#b0b8b5" stroke-width="0.60" fill="none" opacity="0.28"/>
<path d="M271.7,107.3 l-3.8,-3.5" stroke="#b0b8b5" stroke-width="0.48" opacity="0.23"/>
<path d="M307.9,110.0 l-4.5,-3.2" stroke="#b0b8b5" stroke-width="0.48" opacity="0.23"/>
<path d="M275.8,107.4 l-2.6,-3.2" stroke="#b0b8b5" stroke-width="0.48" opacity="0.23"/>
<path d="M281.6,107.6 l-4.3,2.7" stroke="#b0b8b5" stroke-width="0.48" opacity="0.23"/>
<path d="M363.7,148.2 Q348.0,149.3 332.2,153.0" stroke="#b0b8b5" stroke-width="0.65" fill="none" opacity="0.31"/>
<path d="M334.0,152.6 l-7.4,-2.0" stroke="#b0b8b5" stroke-width="0.52" opacity="0.25"/>
<path d="M341.2,151.1 l-8.8,-2.4" stroke="#b0b8b5" stroke-width="0.52" opacity="0.25"/>
<path d="M340.5,151.2 l-8.3,-4.4" stroke="#b0b8b5" stroke-width="0.52" opacity="0.25"/>
<path d="M423.0,155.7 Q457.8,152.6 492.7,155.1" stroke="#b0b8b5" stroke-width="0.71" fill="none" opacity="0.33"/>
<path d="M476.3,154.2 l6.1,2.5" stroke="#b0b8b5" stroke-width="0.57" opacity="0.27"/>
<path d="M476.7,154.2 l6.8,-3.2" stroke="#b0b8b5" stroke-width="0.57" opacity="0.27"/>
<path d="M487.1,154.7 l2.7,1.4" stroke="#b0b8b5" stroke-width="0.57" opacity="0.27"/>
<path d="M260.2,103.8 Q226.1,99.6 192.0,101.0" stroke="#b0b8b5" stroke-width="0.70" fill="none" opacity="0.30"/>
<path d="M219.3,100.8 l-5.7,3.6" stroke="#b0b8b5" stroke-width="0.56" opacity="0.24"/>
<path d="M67.3,58.1 Q96.9,49.1 126.5,44.9" stroke="#b0b8b5" stroke-width="0.83" fill="none" opacity="0.32"/>
<path d="M80.7,54.3 l7.8,5.1" stroke="#b0b8b5" stroke-width="0.66" opacity="0.26"/>
<path d="M106.7,48.2 l7.3,4.1" stroke="#b0b8b5" stroke-width="0.66" opacity="0.26"/>
<path d="M90.6,51.7 l7.3,-6.0" stroke="#b0b8b5" stroke-width="0.66" opacity="0.26"/>
<path d="M114.6,46.8 l3.3,-2.8" stroke="#b0b8b5" stroke-width="0.66" opacity="0.26"/>
<path d="M260.1,110.3 Q236.4,108.9 212.7,111.4" stroke="#b0b8b5" stroke-width="0.64" fill="none" opacity="0.35"/>
<path d="M249.7,109.9 l-3.8,-2.5" stroke="#b0b8b5" stroke-width="0.51" opacity="0.28"/>
<path d="M220.2,110.7 l-8.6,3.9" stroke="#b0b8b5" stroke-width="0.51" opacity="0.28"/>
<path d="M228.4,110.2 l-5.4,4.1" stroke="#b0b8b5" stroke-width="0.51" opacity="0.28"/>
<path d="M228.0,110.2 l-3.5,3.3" stroke="#b0b8b5" stroke-width="0.51" opacity="0.28"/>
<path d="M215.1,111.1 l-3.2,-2.8" stroke="#b0b8b5" stroke-width="0.51" opacity="0.28"/>
<path d="M104.2,198.2 Q69.4,203.0 34.5,213.6" stroke="#b0b8b5" stroke-width="0.80" fill="none" opacity="0.30"/>
<path d="M92.1,200.1 l-5.7,-3.5" stroke="#b0b8b5" stroke-width="0.64" opacity="0.24"/>
<path d="M75.6,203.1 l-3.0,5.7" stroke="#b0b8b5" stroke-width="0.64" opacity="0.24"/>
<path d="M52.3,208.6 l-6.1,-3.4" stroke="#b0b8b5" stroke-width="0.64" opacity="0.24"/>
<path d="M93.6,199.8 l-7.5,5.9" stroke="#b0b8b5" stroke-width="0.64" opacity="0.24"/>
<path d="M76.0,164.2 Q48.2,165.5 20.5,171.3" stroke="#b0b8b5" stroke-width="0.85" fill="none" opacity="0.34"/>
<path d="M49.5,166.4 l-3.0,2.7" stroke="#b0b8b5" stroke-width="0.68" opacity="0.27"/>
<path d="M58.9,165.4 l-4.4,2.8" stroke="#b0b8b5" stroke-width="0.68" opacity="0.27"/>
<path d="M43.4,167.3 l-5.8,-1.9" stroke="#b0b8b5" stroke-width="0.68" opacity="0.27"/>
<path d="M79.2,73.5 Q67.8,73.9 56.4,76.1" stroke="#b0b8b5" stroke-width="0.66" fill="none" opacity="0.34"/>
<path d="M67.2,74.4 l-5.9,-2.1" stroke="#b0b8b5" stroke-width="0.53" opacity="0.27"/>
<path d="M73.4,73.8 l-6.1,6.9" stroke="#b0b8b5" stroke-width="0.53" opacity="0.27"/>
<path d="M335.6,119.0 Q358.3,120.9 381.0,126.5" stroke="#b0b8b5" stroke-width="0.70" fill="none" opacity="0.35"/>
<path d="M345.4,120.0 l3.0,-1.3" stroke="#b0b8b5" stroke-width="0.56" opacity="0.28"/>
<path d="M372.0,124.4 l7.9,-6.0" stroke="#b0b8b5" stroke-width="0.56" opacity="0.28"/>
<path d="M343.9,119.8 l8.5,-5.1" stroke="#b0b8b5" stroke-width="0.56" opacity="0.28"/>
<path d="M53.9,77.0 Q35.5,77.1 17.1,80.2" stroke="#b0b8b5" stroke-width="0.85" fill="none" opacity="0.32"/>
<path d="M27.2,78.7 l-7.8,6.2" stroke="#b0b8b5" stroke-width="0.68" opacity="0.26"/>
<path d="M37.2,77.7 l-5.1,7.1" stroke="#b0b8b5" stroke-width="0.68" opacity="0.26"/>
<path d="M26.8,78.8 l-8.0,-4.2" stroke="#b0b8b5" stroke-width="0.68" opacity="0.26"/>
<path d="M21.7,79.5 l-4.9,3.7" stroke="#b0b8b5" stroke-width="0.68" opacity="0.26"/>
<path d="M41.8,77.4 l-6.1,-6.1" stroke="#b0b8b5" stroke-width="0.68" opacity="0.26"/>
<path d="M90.3,206.2 Q118.4,193.3 146.5,185.3" stroke="#b0b8b5" stroke-width="0.85" fill="none" opacity="0.32"/>
<path d="M130.0,190.4 l3.7,-5.4" stroke="#b0b8b5" stroke-width="0.68" opacity="0.26"/>
<path d="M133.3,189.3 l4.8,-4.2" stroke="#b0b8b5" stroke-width="0.68" opacity="0.26"/>
<path d="M117.2,195.0 l7.1,0.3" stroke="#b0b8b5" stroke-width="0.68" opacity="0.26"/>
<path d="M131.8,189.8 l4.8,2.2" stroke="#b0b8b5" stroke-width="0.68" opacity="0.26"/>
<path d="M444.0,150.2 Q478.1,151.0 512.3,157.3" stroke="#b0b8b5" stroke-width="0.56" fill="none" opacity="0.37"/>
<path d="M491.8,154.0 l8.9,-3.1" stroke="#b0b8b5" stroke-width="0.45" opacity="0.30"/>
<path d="M101.3,181.4 Q66.6,185.4 31.8,195.0" stroke="#b0b8b5" stroke-width="0.89" fill="none" opacity="0.31"/>
<path d="M87.3,183.2 l-4.9,3.9" stroke="#b0b8b5" stroke-width="0.71" opacity="0.25"/>
<path d="M76.0,185.0 l-1.8,2.6" stroke="#b0b8b5" stroke-width="0.71" opacity="0.25"/>
<path d="M74.8,185.3 l-4.1,-1.5" stroke="#b0b8b5" stroke-width="0.71" opacity="0.25"/>
<path d="M69.7,186.2 l-2.5,3.8" stroke="#b0b8b5" stroke-width="0.71" opacity="0.25"/>
<path d="M89.9,182.9 l-8.3,-1.8" stroke="#b0b8b5" stroke-width="0.71" opacity="0.25"/>
<path d="M334.3,36.0 Q366.0,34.2 397.7,37.5" stroke="#b0b8b5" stroke-width="0.64" fill="none" opacity="0.22"/>
<path d="M377.7,35.9 l4.2,-4.3" stroke="#b0b8b5" stroke-width="0.51" opacity="0.18"/>
<path d="M381.2,36.1 l2.0,2.4" stroke="#b0b8b5" stroke-width="0.51" opacity="0.18"/>
<path d="M352.2,35.4 l3.4,2.9" stroke="#b0b8b5" stroke-width="0.51" opacity="0.18"/>
<path d="M381.4,36.2 l8.3,-3.9" stroke="#b0b8b5" stroke-width="0.51" opacity="0.18"/>
<path d="M443.9,28.6 Q473.3,16.7 502.7,9.7" stroke="#b0b8b5" stroke-width="0.61" fill="none" opacity="0.32"/>
<path d="M499.3,10.6 l3.5,-3.2" stroke="#b0b8b5" stroke-width="0.49" opacity="0.26"/>
<path d="M482.9,15.0 l4.7,1.5" stroke="#b0b8b5" stroke-width="0.49" opacity="0.26"/>
<path d="M483.9,14.7 l5.1,-6.5" stroke="#b0b8b5" stroke-width="0.49" opacity="0.26"/>
<path d="M497.4,11.0 l5.5,2.7" stroke="#b0b8b5" stroke-width="0.49" opacity="0.26"/>
<path d="M498.3,10.8 l5.8,3.0" stroke="#b0b8b5" stroke-width="0.49" opacity="0.26"/>
<path d="M103.3,162.0 Q84.6,154.4 65.9,150.0" stroke="#b0b8b5" stroke-width="0.90" fill="none" opacity="0.36"/>
<path d="M95.3,158.9 l-5.2,1.1" stroke="#b0b8b5" stroke-width="0.72" opacity="0.29"/>
<path d="M95.1,158.8 l-5.3,1.9" stroke="#b0b8b5" stroke-width="0.72" opacity="0.29"/>
<path d="M87.7,156.2 l-1.6,-3.7" stroke="#b0b8b5" stroke-width="0.72" opacity="0.29"/>
<path d="M81.1,154.1 l-4.3,1.7" stroke="#b0b8b5" stroke-width="0.72" opacity="0.29"/>
<path d="M87.6,156.2 l-1.4,-3.1" stroke="#b0b8b5" stroke-width="0.72" opacity="0.29"/>
<path d="M409.2,206.3 Q386.1,205.6 363.0,208.6" stroke="#b0b8b5" stroke-width="0.58" fill="none" opacity="0.27"/>
<path d="M368.5,208.0 l-3.0,-1.0" stroke="#b0b8b5" stroke-width="0.46" opacity="0.21"/>
<path d="M371.7,207.6 l-2.9,1.6" stroke="#b0b8b5" stroke-width="0.46" opacity="0.21"/>
<path d="M391.2,206.3 l-3.3,3.2" stroke="#b0b8b5" stroke-width="0.46" opacity="0.21"/>
<path d="M369.6,207.8 l-4.5,-4.7" stroke="#b0b8b5" stroke-width="0.46" opacity="0.21"/>
<path d="M80.3,18.3 Q63.7,18.0 47.1,20.4" stroke="#b0b8b5" stroke-width="0.71" fill="none" opacity="0.23"/>
<path d="M62.6,18.8 l-7.0,-4.9" stroke="#b0b8b5" stroke-width="0.57" opacity="0.19"/>
<path d="M59.7,19.0 l-6.9,4.4" stroke="#b0b8b5" stroke-width="0.57" opacity="0.19"/>
<path d="M58.5,19.1 l-4.2,5.0" stroke="#b0b8b5" stroke-width="0.57" opacity="0.19"/>
<path d="M152.8,152.9 Q188.9,154.5 225.0,162.0" stroke="#b0b8b5" stroke-width="0.83" fill="none" opacity="0.32"/>
<path d="M173.3,154.3 l4.9,-2.4" stroke="#b0b8b5" stroke-width="0.66" opacity="0.26"/>
<path d="M164.8,153.6 l7.7,-2.7" stroke="#b0b8b5" stroke-width="0.66" opacity="0.26"/>
<path d="M150.0,15.9 Q167.3,11.5 184.5,10.0" stroke="#b0b8b5" stroke-width="0.72" fill="none" opacity="0.26"/>
<path d="M160.9,13.4 l6.4,-4.3" stroke="#b0b8b5" stroke-width="0.57" opacity="0.21"/>
<path d="M174.4,11.1 l5.0,3.9" stroke="#b0b8b5" stroke-width="0.57" opacity="0.21"/>
<path d="M166.1,12.4 l8.2,2.4" stroke="#b0b8b5" stroke-width="0.57" opacity="0.21"/>
<path d="M173.3,11.3 l4.3,-4.7" stroke="#b0b8b5" stroke-width="0.57" opacity="0.21"/>
<path d="M166.9,12.3 l5.4,-3.2" stroke="#b0b8b5" stroke-width="0.57" opacity="0.21"/>
<path d="M65.1,30.8 Q99.1,23.2 133.0,21.1" stroke="#b0b8b5" stroke-width="0.89" fill="none" opacity="0.31"/>
<path d="M116.0,22.5 l4.9,3.1" stroke="#b0b8b5" stroke-width="0.71" opacity="0.25"/>
<path d="M84.9,26.9 l2.8,-2.4" stroke="#b0b8b5" stroke-width="0.71" opacity="0.25"/>
<path d="M321.6,115.4 Q311.2,116.9 300.9,120.2" stroke="#b0b8b5" stroke-width="0.61" fill="none" opacity="0.21"/>
<path d="M305.4,118.8 l-3.2,-0.6" stroke="#b0b8b5" stroke-width="0.49" opacity="0.16"/>
<path d="M317.3,116.1 l-5.6,7.2" stroke="#b0b8b5" stroke-width="0.49" opacity="0.16"/>
<path d="M318.1,115.9 l-2.6,2.3" stroke="#b0b8b5" stroke-width="0.49" opacity="0.16"/>
<path d="M303.1,119.5 l-8.6,-1.4" stroke="#b0b8b5" stroke-width="0.49" opacity="0.16"/>
<path d="M303.0,119.5 l-5.6,4.6" stroke="#b0b8b5" stroke-width="0.49" opacity="0.16"/>
<path d="M139.7,174.4 Q104.4,162.4 69.0,156.2" stroke="#b0b8b5" stroke-width="0.67" fill="none" opacity="0.32"/>
<path d="M97.4,162.1 l-4.0,-5.1" stroke="#b0b8b5" stroke-width="0.54" opacity="0.26"/>
<path d="M378.6,145.5 Q404.8,140.9 431.1,140.6" stroke="#b0b8b5" stroke-width="0.71" fill="none" opacity="0.38"/>
<path d="M424.4,140.8 l7.6,4.2" stroke="#b0b8b5" stroke-width="0.57" opacity="0.30"/>
<path d="M408.8,141.6 l2.7,1.5" stroke="#b0b8b5" stroke-width="0.57" opacity="0.30"/>
<path d="M362.4,143.2 Q348.4,136.8 334.3,132.8" stroke="#b0b8b5" stroke-width="0.73" fill="none" opacity="0.23"/>
<path d="M339.6,134.4 l-5.5,0.4" stroke="#b0b8b5" stroke-width="0.59" opacity="0.19"/>
<path d="M352.4,138.9 l-4.7,-4.4" stroke="#b0b8b5" stroke-width="0.59" opacity="0.19"/>
<path d="M354.3,139.7 l-4.6,-4.3" stroke="#b0b8b5" stroke-width="0.59" opacity="0.19"/>
<path d="M407.6,121.4 Q370.8,124.2 333.9,133.1" stroke="#b0b8b5" stroke-width="0.89" fill="none" opacity="0.35"/>
<path d="M357.9,128.0 l-4.8,-1.1" stroke="#b0b8b5" stroke-width="0.71" opacity="0.28"/>
<path d="M339.7,131.7 l-7.4,-2.6" stroke="#b0b8b5" stroke-width="0.71" opacity="0.28"/>
<path d="M172.2,154.5 Q153.0,145.4 133.8,139.7" stroke="#b0b8b5" stroke-width="0.82" fill="none" opacity="0.24"/>
<path d="M158.1,148.3 l-1.2,-3.4" stroke="#b0b8b5" stroke-width="0.66" opacity="0.19"/>
<path d="M136.5,114.5 Q101.3,107.6 66.1,106.4" stroke="#b0b8b5" stroke-width="0.81" fill="none" opacity="0.24"/>
<path d="M101.2,109.0 l-4.9,1.6" stroke="#b0b8b5" stroke-width="0.65" opacity="0.19"/>
<path d="M333.1,34.8 Q354.7,30.6 376.2,29.9" stroke="#b0b8b5" stroke-width="0.63" fill="none" opacity="0.34"/>
<path d="M349.9,32.1 l2.8,-4.0" stroke="#b0b8b5" stroke-width="0.50" opacity="0.27"/>
<path d="M358.6,31.1 l3.1,-1.6" stroke="#b0b8b5" stroke-width="0.50" opacity="0.27"/>
<path d="M349.5,32.1 l6.5,5.9" stroke="#b0b8b5" stroke-width="0.50" opacity="0.27"/>
<path d="M347.7,32.4 l5.7,-4.5" stroke="#b0b8b5" stroke-width="0.50" opacity="0.27"/>
<path d="M348.9,32.2 l5.0,-3.6" stroke="#b0b8b5" stroke-width="0.50" opacity="0.27"/>
<path d="M317.3,46.1 Q306.3,45.6 295.4,46.9" stroke="#b0b8b5" stroke-width="0.56" fill="none" opacity="0.32"/>
<path d="M303.3,46.2 l-4.6,-5.1" stroke="#b0b8b5" stroke-width="0.45" opacity="0.26"/>
<path d="M301.6,46.3 l-3.9,3.5" stroke="#b0b8b5" stroke-width="0.45" opacity="0.26"/>
<path d="M302.7,46.3 l-7.6,-6.2" stroke="#b0b8b5" stroke-width="0.45" opacity="0.26"/>
<path d="M275.0,151.4 Q283.8,147.3 292.7,144.8" stroke="#b0b8b5" stroke-width="0.90" fill="none" opacity="0.31"/>
<path d="M281.0,148.8 l7.3,-6.7" stroke="#b0b8b5" stroke-width="0.72" opacity="0.25"/>
<path d="M281.3,148.7 l1.6,-3.1" stroke="#b0b8b5" stroke-width="0.72" opacity="0.25"/>
<path d="M279.7,149.3 l2.1,-3.1" stroke="#b0b8b5" stroke-width="0.72" opacity="0.25"/>
<path d="M282.1,148.3 l4.9,-6.9" stroke="#b0b8b5" stroke-width="0.72" opacity="0.25"/>
<path d="M366.9,16.4 Q344.1,16.9 321.2,21.1" stroke="#b0b8b5" stroke-width="0.60" fill="none" opacity="0.26"/>
<path d="M328.3,19.9 l-3.5,-1.9" stroke="#b0b8b5" stroke-width="0.48" opacity="0.21"/>
<path d="M327.8,20.0 l-6.3,6.8" stroke="#b0b8b5" stroke-width="0.48" opacity="0.21"/>
<path d="M354.0,17.0 l-4.5,6.0" stroke="#b0b8b5" stroke-width="0.48" opacity="0.21"/>
<path d="M431.7,181.6 Q402.6,168.4 373.5,160.2" stroke="#b0b8b5" stroke-width="0.79" fill="none" opacity="0.23"/>
<path d="M383.6,163.2 l-6.3,0.7" stroke="#b0b8b5" stroke-width="0.64" opacity="0.19"/>
<path d="M425.3,139.5 Q439.8,138.3 454.3,139.5" stroke="#b0b8b5" stroke-width="0.63" fill="none" opacity="0.21"/>
<path d="M439.1,138.9 l8.0,-3.8" stroke="#b0b8b5" stroke-width="0.50" opacity="0.17"/>
<path d="M444.9,139.0 l8.8,4.6" stroke="#b0b8b5" stroke-width="0.50" opacity="0.17"/>
<path d="M436.3,139.0 l5.0,3.6" stroke="#b0b8b5" stroke-width="0.50" opacity="0.17"/>
<path d="M104.7,16.4 Q75.5,3.1 46.4,-5.3" stroke="#b0b8b5" stroke-width="0.61" fill="none" opacity="0.34"/>
<path d="M76.7,4.8 l-2.6,-3.4" stroke="#b0b8b5" stroke-width="0.48" opacity="0.27"/>
<path d="M95.5,12.4 l-2.4,-6.0" stroke="#b0b8b5" stroke-width="0.48" opacity="0.27"/>
<path d="M68.0,1.6 l-4.6,-4.5" stroke="#b0b8b5" stroke-width="0.48" opacity="0.27"/>
<path d="M119.3,98.7 Q148.7,95.3 178.0,96.5" stroke="#b0b8b5" stroke-width="0.56" fill="none" opacity="0.29"/>
<path d="M167.8,96.2 l6.1,-2.7" stroke="#b0b8b5" stroke-width="0.45" opacity="0.23"/>
<path d="M170.9,96.3 l5.7,2.2" stroke="#b0b8b5" stroke-width="0.45" opacity="0.23"/>
<path d="M148.5,96.5 l6.0,5.3" stroke="#b0b8b5" stroke-width="0.45" opacity="0.23"/>
<path d="M64.4,60.1 Q85.5,59.7 106.7,62.6" stroke="#b0b8b5" stroke-width="0.80" fill="none" opacity="0.30"/>
<path d="M104.3,62.3 l3.7,2.1" stroke="#b0b8b5" stroke-width="0.64" opacity="0.24"/>
<path d="M77.2,106.5 Q50.6,101.3 24.0,100.4" stroke="#b0b8b5" stroke-width="0.67" fill="none" opacity="0.33"/>
<path d="M48.1,102.1 l-4.0,3.1" stroke="#b0b8b5" stroke-width="0.54" opacity="0.26"/>
<path d="M58.1,103.3 l-3.6,-3.7" stroke="#b0b8b5" stroke-width="0.54" opacity="0.26"/>
<path d="M40.5,101.4 l-4.6,-5.2" stroke="#b0b8b5" stroke-width="0.54" opacity="0.26"/>
<path d="M48.4,102.1 l-4.7,1.2" stroke="#b0b8b5" stroke-width="0.54" opacity="0.26"/>
<path d="M31.1,100.7 l-4.4,-5.1" stroke="#b0b8b5" stroke-width="0.54" opacity="0.26"/>
<path d="M89.6,24.8 Q100.4,23.9 111.3,24.8" stroke="#b0b8b5" stroke-width="0.83" fill="none" opacity="0.37"/>
<path d="M98.0,24.4 l8.2,-3.6" stroke="#b0b8b5" stroke-width="0.67" opacity="0.29"/>
<path d="M96.1,24.4 l5.8,-6.4" stroke="#b0b8b5" stroke-width="0.67" opacity="0.29"/>
<path d="M96.1,24.4 l7.4,-4.9" stroke="#b0b8b5" stroke-width="0.67" opacity="0.29"/>
<path d="M374.1,26.9 Q405.9,15.2 437.7,8.9" stroke="#b0b8b5" stroke-width="0.79" fill="none" opacity="0.32"/>
<path d="M402.4,17.6 l2.9,-4.3" stroke="#b0b8b5" stroke-width="0.63" opacity="0.26"/>
<path d="M443.7,139.9 Q451.4,138.7 459.0,138.6" stroke="#b0b8b5" stroke-width="0.81" fill="none" opacity="0.32"/>
<path d="M452.2,138.9 l6.0,-7.0" stroke="#b0b8b5" stroke-width="0.64" opacity="0.26"/>
<path d="M448.4,139.3 l3.6,-2.4" stroke="#b0b8b5" stroke-width="0.64" opacity="0.26"/>
<path d="M181.1,192.1 Q197.9,190.2 214.7,191.0" stroke="#b0b8b5" stroke-width="0.65" fill="none" opacity="0.27"/>
<path d="M206.5,190.8 l4.5,2.3" stroke="#b0b8b5" stroke-width="0.52" opacity="0.21"/>
<path d="M186.6,191.5 l8.5,3.1" stroke="#b0b8b5" stroke-width="0.52" opacity="0.21"/>
<path d="M187.9,191.4 l4.1,-5.1" stroke="#b0b8b5" stroke-width="0.52" opacity="0.21"/>
<path d="M204.6,190.8 l4.6,-3.1" stroke="#b0b8b5" stroke-width="0.52" opacity="0.21"/>
<path d="M258.2,185.9 Q244.7,180.7 231.2,177.8" stroke="#b0b8b5" stroke-width="0.66" fill="none" opacity="0.24"/>
<path d="M241.6,180.4 l-4.5,-3.8" stroke="#b0b8b5" stroke-width="0.53" opacity="0.19"/>
<path d="M247.8,182.2 l-6.7,1.5" stroke="#b0b8b5" stroke-width="0.53" opacity="0.19"/>
<path d="M245.2,181.4 l-2.6,-2.2" stroke="#b0b8b5" stroke-width="0.53" opacity="0.19"/>
<path d="M253.2,184.0 l-1.9,-2.4" stroke="#b0b8b5" stroke-width="0.53" opacity="0.19"/>
<path d="M445.8,27.5 Q456.6,27.5 467.4,29.3" stroke="#b0b8b5" stroke-width="0.59" fill="none" opacity="0.20"/>
<path d="M458.6,28.2 l4.9,-2.0" stroke="#b0b8b5" stroke-width="0.47" opacity="0.16"/>
<path d="M463.1,28.7 l7.2,-4.5" stroke="#b0b8b5" stroke-width="0.47" opacity="0.16"/>
<path d="M462.0,28.5 l5.4,-4.6" stroke="#b0b8b5" stroke-width="0.47" opacity="0.16"/>
<path d="M270.9,43.6 Q298.9,35.4 326.9,31.7" stroke="#b0b8b5" stroke-width="0.86" fill="none" opacity="0.33"/>
<path d="M293.0,37.8 l5.3,2.2" stroke="#b0b8b5" stroke-width="0.68" opacity="0.26"/>
<path d="M305.4,35.2 l4.4,-7.5" stroke="#b0b8b5" stroke-width="0.68" opacity="0.26"/>
<path d="M296.7,37.0 l5.2,-5.5" stroke="#b0b8b5" stroke-width="0.68" opacity="0.26"/>
<path d="M287.8,39.0 l3.7,-4.0" stroke="#b0b8b5" stroke-width="0.68" opacity="0.26"/>
<path d="M333.9,120.5 Q348.6,122.8 363.3,127.5" stroke="#b0b8b5" stroke-width="0.56" fill="none" opacity="0.27"/>
<path d="M361.8,127.0 l3.6,3.7" stroke="#b0b8b5" stroke-width="0.45" opacity="0.21"/>
<path d="M340.4,121.6 l4.1,4.9" stroke="#b0b8b5" stroke-width="0.45" opacity="0.21"/>
<path d="M339.3,121.4 l5.1,8.1" stroke="#b0b8b5" stroke-width="0.45" opacity="0.21"/>
<path d="M349.0,123.5 l5.5,7.7" stroke="#b0b8b5" stroke-width="0.45" opacity="0.21"/>
<path d="M105.1,159.8 Q91.5,159.3 78.0,160.9" stroke="#b0b8b5" stroke-width="0.67" fill="none" opacity="0.27"/>
<path d="M89.3,159.9 l-7.7,-2.6" stroke="#b0b8b5" stroke-width="0.53" opacity="0.22"/>
<path d="M86.2,160.1 l-3.8,3.0" stroke="#b0b8b5" stroke-width="0.53" opacity="0.22"/>
<path d="M81.2,160.5 l-2.7,2.4" stroke="#b0b8b5" stroke-width="0.53" opacity="0.22"/>
<path d="M88.1,160.0 l-5.6,2.8" stroke="#b0b8b5" stroke-width="0.53" opacity="0.22"/>
<path d="M64.8,72.6 Q85.3,69.7 105.8,70.2" stroke="#b0b8b5" stroke-width="0.84" fill="none" opacity="0.33"/>
<path d="M94.2,70.2 l4.3,-2.0" stroke="#b0b8b5" stroke-width="0.67" opacity="0.26"/>
<path d="M99.0,70.1 l4.0,1.4" stroke="#b0b8b5" stroke-width="0.67" opacity="0.26"/>
<path d="M86.5,70.5 l7.8,2.9" stroke="#b0b8b5" stroke-width="0.67" opacity="0.26"/>
<path d="M83.8,70.7 l7.9,3.6" stroke="#b0b8b5" stroke-width="0.67" opacity="0.26"/>
<path d="M75.3,71.4 l4.4,-5.5" stroke="#b0b8b5" stroke-width="0.67" opacity="0.26"/>
<path d="M166.1,62.4 Q152.5,58.0 138.9,55.9" stroke="#b0b8b5" stroke-width="0.75" fill="none" opacity="0.37"/>
<path d="M140.3,56.1 l-4.4,-6.2" stroke="#b0b8b5" stroke-width="0.60" opacity="0.30"/>
<path d="M106.3,191.9 Q73.9,185.0 41.5,183.4" stroke="#b0b8b5" stroke-width="0.68" fill="none" opacity="0.21"/>
<path d="M78.6,187.0 l-5.2,2.6" stroke="#b0b8b5" stroke-width="0.55" opacity="0.17"/>
<path d="M91.0,188.9 l-7.4,1.9" stroke="#b0b8b5" stroke-width="0.55" opacity="0.17"/>
<path d="M69.9,185.8 l-3.4,-2.3" stroke="#b0b8b5" stroke-width="0.55" opacity="0.17"/>
<path d="M67.2,185.5 l-4.9,-5.9" stroke="#b0b8b5" stroke-width="0.55" opacity="0.17"/>
<path d="M105.8,71.4 Q74.7,75.5 43.5,84.8" stroke="#b0b8b5" stroke-width="0.78" fill="none" opacity="0.30"/>
<path d="M70.5,77.7 l-4.1,4.5" stroke="#b0b8b5" stroke-width="0.63" opacity="0.24"/>
<path d="M53.0,82.1 l-2.1,3.3" stroke="#b0b8b5" stroke-width="0.63" opacity="0.24"/>
<path d="M95.1,73.0 l-3.6,-2.6" stroke="#b0b8b5" stroke-width="0.63" opacity="0.24"/>
<path d="M56.3,81.2 l-5.6,3.9" stroke="#b0b8b5" stroke-width="0.63" opacity="0.24"/>
<path d="M171.5,47.0 Q148.9,36.5 126.4,29.8" stroke="#b0b8b5" stroke-width="0.67" fill="none" opacity="0.30"/>
<path d="M157.7,40.9 l-5.1,0.1" stroke="#b0b8b5" stroke-width="0.54" opacity="0.24"/>
<path d="M147.0,36.7 l-6.4,0.4" stroke="#b0b8b5" stroke-width="0.54" opacity="0.24"/>
<path d="M133.7,107.2 Q123.3,106.2 112.9,106.8" stroke="#b0b8b5" stroke-width="0.78" fill="none" opacity="0.32"/>
<path d="M123.7,106.6 l-5.5,4.7" stroke="#b0b8b5" stroke-width="0.63" opacity="0.26"/>
<path d="M115.1,106.7 l-5.5,-4.3" stroke="#b0b8b5" stroke-width="0.63" opacity="0.26"/>
<path d="M129.3,106.9 l-8.1,-3.4" stroke="#b0b8b5" stroke-width="0.63" opacity="0.26"/>
<path d="M129.9,106.9 l-5.6,3.4" stroke="#b0b8b5" stroke-width="0.63" opacity="0.26"/>
<path d="M122.7,106.6 l-6.2,6.9" stroke="#b0b8b5" stroke-width="0.63" opacity="0.26"/>
<path d="M114.6,158.2 Q123.1,158.5 131.5,160.2" stroke="#b0b8b5" stroke-width="0.69" fill="none" opacity="0.22"/>
<path d="M120.6,158.6 l8.2,-5.6" stroke="#b0b8b5" stroke-width="0.55" opacity="0.18"/>
<path d="M128.5,159.6 l4.0,2.9" stroke="#b0b8b5" stroke-width="0.55" opacity="0.18"/>
<path d="M118.6,158.4 l7.1,-2.9" stroke="#b0b8b5" stroke-width="0.55" opacity="0.18"/>
<path d="M125.0,159.1 l3.4,4.3" stroke="#b0b8b5" stroke-width="0.55" opacity="0.18"/>
<path d="M411.9,209.9 Q378.4,211.7 345.0,218.9" stroke="#b0b8b5" stroke-width="0.87" fill="none" opacity="0.24"/>
<path d="M353.8,217.1 l-2.9,-2.2" stroke="#b0b8b5" stroke-width="0.70" opacity="0.19"/>
<path d="M118.5,156.2 Q150.6,149.3 182.8,147.6" stroke="#b0b8b5" stroke-width="0.79" fill="none" opacity="0.27"/>
<path d="M146.0,151.2 l3.8,-2.7" stroke="#b0b8b5" stroke-width="0.63" opacity="0.22"/>
<path d="M103.1,154.8 Q68.2,160.5 33.3,172.0" stroke="#b0b8b5" stroke-width="0.66" fill="none" opacity="0.37"/>
<path d="M91.8,156.8 l-3.3,5.9" stroke="#b0b8b5" stroke-width="0.53" opacity="0.30"/>
<path d="M38.3,170.3 l-7.3,-1.9" stroke="#b0b8b5" stroke-width="0.53" opacity="0.30"/>
<path d="M57.8,164.6 l-7.3,-1.1" stroke="#b0b8b5" stroke-width="0.53" opacity="0.30"/>
<path d="M60.3,163.9 l-3.2,5.7" stroke="#b0b8b5" stroke-width="0.53" opacity="0.30"/>
<path d="M268.7,59.7 Q282.3,59.7 296.0,61.8" stroke="#b0b8b5" stroke-width="0.59" fill="none" opacity="0.24"/>
<path d="M293.2,61.4 l8.8,-2.5" stroke="#b0b8b5" stroke-width="0.47" opacity="0.19"/>
<path d="M276.2,59.8 l5.7,-4.2" stroke="#b0b8b5" stroke-width="0.47" opacity="0.19"/>
<path d="M291.3,61.1 l5.7,-1.8" stroke="#b0b8b5" stroke-width="0.47" opacity="0.19"/>
<path d="M151.3,166.0 Q173.8,164.4 196.3,166.3" stroke="#b0b8b5" stroke-width="0.83" fill="none" opacity="0.36"/>
<path d="M193.4,166.1 l2.5,-2.8" stroke="#b0b8b5" stroke-width="0.67" opacity="0.29"/>
<path d="M191.4,165.9 l6.0,-6.2" stroke="#b0b8b5" stroke-width="0.67" opacity="0.29"/>
<path d="M184.5,165.5 l7.6,-3.6" stroke="#b0b8b5" stroke-width="0.67" opacity="0.29"/>
<path d="M158.4,165.6 l7.8,4.6" stroke="#b0b8b5" stroke-width="0.67" opacity="0.29"/>
<path d="M430.3,59.7 Q403.7,58.9 377.2,62.4" stroke="#b0b8b5" stroke-width="0.68" fill="none" opacity="0.36"/>
<path d="M393.0,60.7 l-5.5,4.3" stroke="#b0b8b5" stroke-width="0.54" opacity="0.29"/>
<path d="M383.3,61.6 l-7.5,-6.2" stroke="#b0b8b5" stroke-width="0.54" opacity="0.29"/>
<path d="M382.8,61.7 l-5.2,2.4" stroke="#b0b8b5" stroke-width="0.54" opacity="0.29"/>
<path d="M397.7,60.3 l-6.9,3.7" stroke="#b0b8b5" stroke-width="0.54" opacity="0.29"/>
<path d="M360.5,85.2 Q335.4,88.2 310.4,95.2" stroke="#b0b8b5" stroke-width="0.89" fill="none" opacity="0.28"/>
<path d="M336.9,88.9 l-5.3,4.2" stroke="#b0b8b5" stroke-width="0.71" opacity="0.23"/>
<path d="M326.3,91.2 l-5.1,6.4" stroke="#b0b8b5" stroke-width="0.71" opacity="0.23"/>
<path d="M333.6,89.6 l-6.3,-1.9" stroke="#b0b8b5" stroke-width="0.71" opacity="0.23"/>
<path d="M313.4,94.4 l-2.0,2.8" stroke="#b0b8b5" stroke-width="0.71" opacity="0.23"/>
<path d="M317.0,93.4 l-8.1,-3.2" stroke="#b0b8b5" stroke-width="0.71" opacity="0.23"/>
<path d="M445.0,9.9 Q467.2,-0.3 489.5,-6.7" stroke="#b0b8b5" stroke-width="0.74" fill="none" opacity="0.30"/>
<path d="M463.9,1.9 l6.2,-7.9" stroke="#b0b8b5" stroke-width="0.59" opacity="0.24"/>
<path d="M456.8,4.8 l3.7,-3.9" stroke="#b0b8b5" stroke-width="0.59" opacity="0.24"/>
<path d="M464.2,1.8 l2.8,1.2" stroke="#b0b8b5" stroke-width="0.59" opacity="0.24"/>
<path d="M467.8,0.4 l4.8,0.6" stroke="#b0b8b5" stroke-width="0.59" opacity="0.24"/>
<path d="M151.1,55.4 Q170.5,55.9 190.0,59.5" stroke="#b0b8b5" stroke-width="0.84" fill="none" opacity="0.22"/>
<path d="M185.5,58.7 l5.5,3.0" stroke="#b0b8b5" stroke-width="0.67" opacity="0.18"/>
<path d="M185.0,58.6 l7.1,-4.2" stroke="#b0b8b5" stroke-width="0.67" opacity="0.18"/>
<path d="M159.1,55.8 l5.2,6.4" stroke="#b0b8b5" stroke-width="0.67" opacity="0.18"/>
<path d="M182.3,28.7 Q195.8,22.9 209.2,19.3" stroke="#b0b8b5" stroke-width="0.58" fill="none" opacity="0.28"/>
<path d="M200.5,21.8 l3.3,-3.4" stroke="#b0b8b5" stroke-width="0.47" opacity="0.22"/>
<path d="M193.5,24.2 l7.1,1.8" stroke="#b0b8b5" stroke-width="0.47" opacity="0.22"/>
<path d="M443.5,209.5 Q474.7,202.1 506.0,199.9" stroke="#b0b8b5" stroke-width="0.80" fill="none" opacity="0.30"/>
<path d="M494.9,200.8 l4.2,2.8" stroke="#b0b8b5" stroke-width="0.64" opacity="0.24"/>
<path d="M461.6,205.6 l5.2,-3.0" stroke="#b0b8b5" stroke-width="0.64" opacity="0.24"/>
<path d="M462.3,205.5 l5.8,3.6" stroke="#b0b8b5" stroke-width="0.64" opacity="0.24"/>
<path d="M487.2,201.7 l5.5,-5.9" stroke="#b0b8b5" stroke-width="0.64" opacity="0.24"/>
<path d="M455.6,206.8 l4.9,-7.9" stroke="#b0b8b5" stroke-width="0.64" opacity="0.24"/>
<path d="M362.6,49.0 Q354.0,48.0 345.4,48.3" stroke="#b0b8b5" stroke-width="0.78" fill="none" opacity="0.38"/>
<path d="M350.6,48.2 l-3.2,-3.9" stroke="#b0b8b5" stroke-width="0.62" opacity="0.30"/>
<path d="M348.4,48.2 l-4.9,5.1" stroke="#b0b8b5" stroke-width="0.62" opacity="0.30"/>
<path d="M348.1,48.2 l-7.9,-3.9" stroke="#b0b8b5" stroke-width="0.62" opacity="0.30"/>
<path d="M270.2,92.2 Q294.4,81.3 318.5,74.6" stroke="#b0b8b5" stroke-width="0.59" fill="none" opacity="0.36"/>
<path d="M310.6,76.9 l6.5,-5.5" stroke="#b0b8b5" stroke-width="0.47" opacity="0.29"/>
<path d="M299.3,80.6 l6.9,-7.2" stroke="#b0b8b5" stroke-width="0.47" opacity="0.29"/>
<path d="M294.6,82.3 l1.5,-3.3" stroke="#b0b8b5" stroke-width="0.47" opacity="0.29"/>
<path d="M119.2,130.3 Q133.3,127.1 147.3,126.1" stroke="#b0b8b5" stroke-width="0.80" fill="none" opacity="0.20"/>
<path d="M133.2,127.6 l3.0,1.9" stroke="#b0b8b5" stroke-width="0.64" opacity="0.16"/>
<path d="M135.0,127.4 l4.0,3.6" stroke="#b0b8b5" stroke-width="0.64" opacity="0.16"/>
<path d="M137.8,127.0 l6.4,-3.7" stroke="#b0b8b5" stroke-width="0.64" opacity="0.16"/>
<path d="M126.6,128.7 l6.0,2.0" stroke="#b0b8b5" stroke-width="0.64" opacity="0.16"/>
<path d="M46.6,0 L67.4,0 L71.6,215 L49.4,215z" fill="url(#tr)"/>
<path d="M102.7,0 L118.3,0 L118.8,215 L101.4,215z" fill="url(#tr)"/>
<path d="M169.4,0 L180,0 L182.7,215 L171.4,215z" fill="url(#tr)"/>
<path d="M313.8,0 L335.2,0 L343.4,215 L319.9,215z" fill="url(#tr)"/>
<g filter="url(#nz2)"><path d="M46.6,0 L67.4,0 L71.6,215 L49.4,215z M102.7,0 L118.3,0 L118.8,215 L101.4,215z M169.4,0 L180,0 L182.7,215 L171.4,215z M313.8,0 L335.2,0 L343.4,215 L319.9,215z" fill="#000"/></g>
<path d="M131.1,31.8 Q102.4,23.1 73.8,19.0" stroke="#bcc4c1" stroke-width="0.69" fill="none" opacity="0.43"/>
<path d="M88.1,21.3 l-4.7,3.2" stroke="#bcc4c1" stroke-width="0.55" opacity="0.34"/>
<path d="M86.6,21.1 l-7.1,1.2" stroke="#bcc4c1" stroke-width="0.55" opacity="0.34"/>
<path d="M84.5,20.7 l-2.5,-3.9" stroke="#bcc4c1" stroke-width="0.55" opacity="0.34"/>
<path d="M274.4,71.5 Q289.4,71.3 304.3,73.5" stroke="#bcc4c1" stroke-width="0.83" fill="none" opacity="0.35"/>
<path d="M279.9,71.5 l6.4,5.6" stroke="#bcc4c1" stroke-width="0.66" opacity="0.28"/>
<path d="M281.5,71.6 l6.1,4.8" stroke="#bcc4c1" stroke-width="0.66" opacity="0.28"/>
<path d="M287.3,71.8 l3.2,-3.0" stroke="#bcc4c1" stroke-width="0.66" opacity="0.28"/>
<path d="M93.0,190.6 Q109.4,186.1 125.8,184.3" stroke="#bcc4c1" stroke-width="0.75" fill="none" opacity="0.44"/>
<path d="M122.4,184.7 l3.0,-4.8" stroke="#bcc4c1" stroke-width="0.60" opacity="0.35"/>
<path d="M111.4,186.4 l8.1,-4.9" stroke="#bcc4c1" stroke-width="0.60" opacity="0.35"/>
<path d="M445.1,163.4 Q460.1,163.7 475.0,166.4" stroke="#bcc4c1" stroke-width="0.80" fill="none" opacity="0.46"/>
<path d="M463.9,164.7 l8.0,-4.8" stroke="#bcc4c1" stroke-width="0.64" opacity="0.37"/>
<path d="M380.6,6.2 Q398.4,-0.7 416.2,-4.7" stroke="#bcc4c1" stroke-width="0.61" fill="none" opacity="0.43"/>
<path d="M393.0,1.7 l2.4,-3.8" stroke="#bcc4c1" stroke-width="0.49" opacity="0.34"/>
<path d="M401.4,-0.9 l6.6,1.2" stroke="#bcc4c1" stroke-width="0.49" opacity="0.34"/>
<path d="M406.4,-2.3 l3.5,1.4" stroke="#bcc4c1" stroke-width="0.49" opacity="0.34"/>
<path d="M396.6,0.6 l7.7,3.1" stroke="#bcc4c1" stroke-width="0.49" opacity="0.34"/>
<path d="M186.0,38.4 Q203.3,36.6 220.5,37.7" stroke="#bcc4c1" stroke-width="0.65" fill="none" opacity="0.32"/>
<path d="M208.6,37.3 l4.4,2.8" stroke="#bcc4c1" stroke-width="0.52" opacity="0.25"/>
<path d="M196.1,37.6 l2.3,2.4" stroke="#bcc4c1" stroke-width="0.52" opacity="0.25"/>
<path d="M218.6,37.6 l7.7,-5.7" stroke="#bcc4c1" stroke-width="0.52" opacity="0.25"/>
<path d="M206.7,37.3 l5.5,3.9" stroke="#bcc4c1" stroke-width="0.52" opacity="0.25"/>
<path d="M206.0,37.3 l3.2,2.6" stroke="#bcc4c1" stroke-width="0.52" opacity="0.25"/>
<path d="M119.5,54.7 Q130.3,55.6 141.2,58.3" stroke="#bcc4c1" stroke-width="0.87" fill="none" opacity="0.47"/>
<path d="M138.2,57.6 l4.0,5.0" stroke="#bcc4c1" stroke-width="0.70" opacity="0.38"/>
<path d="M129.9,56.0 l4.7,-1.9" stroke="#bcc4c1" stroke-width="0.70" opacity="0.38"/>
<path d="M127.2,55.6 l8.2,-3.2" stroke="#bcc4c1" stroke-width="0.70" opacity="0.38"/>
<path d="M276.6,109.7 Q284.5,110.1 292.4,111.8" stroke="#bcc4c1" stroke-width="0.72" fill="none" opacity="0.41"/>
<path d="M288.7,111.1 l3.3,2.0" stroke="#bcc4c1" stroke-width="0.58" opacity="0.33"/>
<path d="M290.5,111.4 l3.4,3.2" stroke="#bcc4c1" stroke-width="0.58" opacity="0.33"/>
<path d="M405.4,15.9 Q385.7,11.1 366.0,9.6" stroke="#bcc4c1" stroke-width="0.60" fill="none" opacity="0.40"/>
<path d="M371.1,10.0 l-3.3,-2.4" stroke="#bcc4c1" stroke-width="0.48" opacity="0.32"/>
<path d="M369.2,9.8 l-5.8,1.9" stroke="#bcc4c1" stroke-width="0.48" opacity="0.32"/>
<path d="M376.3,10.6 l-3.7,2.0" stroke="#bcc4c1" stroke-width="0.48" opacity="0.32"/>
<path d="M446.4,119.8 Q459.3,115.1 472.2,112.6" stroke="#bcc4c1" stroke-width="0.65" fill="none" opacity="0.41"/>
<path d="M458.2,116.0 l2.0,-2.9" stroke="#bcc4c1" stroke-width="0.52" opacity="0.33"/>
<path d="M459.5,115.6 l7.2,3.8" stroke="#bcc4c1" stroke-width="0.52" opacity="0.33"/>
<path d="M466.7,113.8 l2.5,-5.0" stroke="#bcc4c1" stroke-width="0.52" opacity="0.33"/>
<path d="M153.6,161.6 Q166.8,155.9 180.1,152.5" stroke="#bcc4c1" stroke-width="0.68" fill="none" opacity="0.48"/>
<path d="M166.3,156.7 l4.9,0.5" stroke="#bcc4c1" stroke-width="0.54" opacity="0.38"/>
<path d="M173.3,154.4 l9.3,1.8" stroke="#bcc4c1" stroke-width="0.54" opacity="0.38"/>
<path d="M164.0,157.5 l2.4,-5.0" stroke="#bcc4c1" stroke-width="0.54" opacity="0.38"/>
<path d="M160.3,158.8 l6.4,1.0" stroke="#bcc4c1" stroke-width="0.54" opacity="0.38"/>
<path d="M444.2,52.9 Q471.8,53.8 499.3,59.1" stroke="#bcc4c1" stroke-width="0.73" fill="none" opacity="0.30"/>
<path d="M467.5,54.4 l7.1,-5.3" stroke="#bcc4c1" stroke-width="0.58" opacity="0.24"/>
<path d="M476.3,55.4 l3.4,-2.8" stroke="#bcc4c1" stroke-width="0.58" opacity="0.24"/>
<path d="M100.0,9.2 Q83.2,7.5 66.4,8.4" stroke="#bcc4c1" stroke-width="0.83" fill="none" opacity="0.30"/>
<path d="M93.9,8.7 l-4.2,-2.6" stroke="#bcc4c1" stroke-width="0.66" opacity="0.24"/>
<path d="M94.5,8.7 l-3.5,-1.8" stroke="#bcc4c1" stroke-width="0.66" opacity="0.24"/>
<path d="M98.8,200.3 Q80.0,199.9 61.2,202.4" stroke="#bcc4c1" stroke-width="0.86" fill="none" opacity="0.36"/>
<path d="M76.7,200.8 l-3.8,-1.5" stroke="#bcc4c1" stroke-width="0.69" opacity="0.29"/>
<path d="M85.2,200.4 l-2.4,3.1" stroke="#bcc4c1" stroke-width="0.69" opacity="0.29"/>
<path d="M276.9,101.5 Q302.9,96.6 328.8,95.8" stroke="#bcc4c1" stroke-width="0.83" fill="none" opacity="0.32"/>
<path d="M296.2,98.4 l5.5,4.4" stroke="#bcc4c1" stroke-width="0.66" opacity="0.25"/>
<path d="M322.0,96.1 l7.9,2.4" stroke="#bcc4c1" stroke-width="0.66" opacity="0.25"/>
<path d="M301.1,97.8 l6.4,-4.0" stroke="#bcc4c1" stroke-width="0.66" opacity="0.25"/>
<path d="M325.6,95.9 l5.7,-4.1" stroke="#bcc4c1" stroke-width="0.66" opacity="0.25"/>
<path d="M313.8,96.6 l6.6,-4.8" stroke="#bcc4c1" stroke-width="0.66" opacity="0.25"/>
<path d="M255.2,117.9 Q237.1,115.9 219.0,116.7" stroke="#bcc4c1" stroke-width="0.64" fill="none" opacity="0.45"/>
<path d="M225.5,116.5 l-4.0,1.8" stroke="#bcc4c1" stroke-width="0.51" opacity="0.36"/>
<path d="M222.8,116.6 l-4.1,1.8" stroke="#bcc4c1" stroke-width="0.51" opacity="0.36"/>
<path d="M405.1,60.8 Q377.2,49.1 349.2,42.1" stroke="#bcc4c1" stroke-width="0.83" fill="none" opacity="0.36"/>
<path d="M383.2,52.3 l-6.2,1.7" stroke="#bcc4c1" stroke-width="0.66" opacity="0.29"/>
<path d="M389.4,54.6 l-4.8,2.2" stroke="#bcc4c1" stroke-width="0.66" opacity="0.29"/>
<path d="M380.2,51.3 l-6.4,-7.5" stroke="#bcc4c1" stroke-width="0.66" opacity="0.29"/>
<path d="M273.4,121.6 Q291.5,119.2 309.6,119.8" stroke="#bcc4c1" stroke-width="0.62" fill="none" opacity="0.46"/>
<path d="M296.4,119.8 l3.7,3.5" stroke="#bcc4c1" stroke-width="0.50" opacity="0.37"/>
<path d="M167.5,213.7 Q159.6,212.4 151.6,212.3" stroke="#bcc4c1" stroke-width="0.74" fill="none" opacity="0.33"/>
<path d="M157.0,212.5 l-3.3,-2.3" stroke="#bcc4c1" stroke-width="0.59" opacity="0.26"/>
<path d="M160.3,212.8 l-8.2,-5.3" stroke="#bcc4c1" stroke-width="0.59" opacity="0.26"/>
<path d="M156.1,212.4 l-6.2,4.6" stroke="#bcc4c1" stroke-width="0.59" opacity="0.26"/>
<path d="M335.8,114.1 Q358.8,116.1 381.8,122.0" stroke="#bcc4c1" stroke-width="0.83" fill="none" opacity="0.33"/>
<path d="M355.5,116.5 l8.0,-4.9" stroke="#bcc4c1" stroke-width="0.66" opacity="0.27"/>
<path d="M356.0,116.6 l2.3,3.3" stroke="#bcc4c1" stroke-width="0.66" opacity="0.27"/>
<path d="M357.5,116.9 l5.2,5.5" stroke="#bcc4c1" stroke-width="0.66" opacity="0.27"/>
<path d="M101.5,158.0 Q73.2,147.6 45.0,142.0" stroke="#bcc4c1" stroke-width="0.75" fill="none" opacity="0.34"/>
<path d="M92.4,154.7 l-9.6,2.0" stroke="#bcc4c1" stroke-width="0.60" opacity="0.27"/>
<path d="M65.8,146.8 l-2.2,-4.7" stroke="#bcc4c1" stroke-width="0.60" opacity="0.27"/>
<path d="M360.9,115.7 Q342.0,113.5 323.2,114.4" stroke="#bcc4c1" stroke-width="0.75" fill="none" opacity="0.49"/>
<path d="M332.0,114.1 l-6.8,-2.8" stroke="#bcc4c1" stroke-width="0.60" opacity="0.39"/>
<path d="M331.7,114.1 l-7.4,3.0" stroke="#bcc4c1" stroke-width="0.60" opacity="0.39"/>
<path d="M273.8,169.5 Q285.1,167.6 296.4,167.6" stroke="#bcc4c1" stroke-width="0.68" fill="none" opacity="0.33"/>
<path d="M280.9,168.5 l8.5,3.2" stroke="#bcc4c1" stroke-width="0.54" opacity="0.27"/>
<path d="M283.5,168.2 l5.2,-3.9" stroke="#bcc4c1" stroke-width="0.54" opacity="0.27"/>
<path d="M74.3,161.5 Q49.9,157.8 25.5,158.0" stroke="#bcc4c1" stroke-width="0.84" fill="none" opacity="0.33"/>
<path d="M29.0,158.0 l-5.4,-5.8" stroke="#bcc4c1" stroke-width="0.68" opacity="0.26"/>
<path d="M30.6,158.0 l-2.4,-2.0" stroke="#bcc4c1" stroke-width="0.68" opacity="0.26"/>
<path d="M40.4,158.3 l-7.3,-5.5" stroke="#bcc4c1" stroke-width="0.68" opacity="0.26"/>
<path d="M50.7,158.9 l-4.3,3.4" stroke="#bcc4c1" stroke-width="0.68" opacity="0.26"/>
<path d="M381.0,202.4 Q407.3,198.6 433.5,199.1" stroke="#bcc4c1" stroke-width="0.70" fill="none" opacity="0.39"/>
<path d="M412.1,199.4 l6.6,-6.4" stroke="#bcc4c1" stroke-width="0.56" opacity="0.31"/>
<path d="M394.5,200.7 l3.8,3.1" stroke="#bcc4c1" stroke-width="0.56" opacity="0.31"/>
<path d="M398.5,200.4 l6.5,4.4" stroke="#bcc4c1" stroke-width="0.56" opacity="0.31"/>
<path d="M411.9,199.4 l5.1,-3.4" stroke="#bcc4c1" stroke-width="0.56" opacity="0.31"/>
<path d="M98.8,98.0 Q69.7,100.2 40.6,107.2" stroke="#bcc4c1" stroke-width="0.66" fill="none" opacity="0.42"/>
<path d="M51.3,104.8 l-7.5,6.3" stroke="#bcc4c1" stroke-width="0.53" opacity="0.34"/>
<path d="M75.0,100.6 l-7.6,5.2" stroke="#bcc4c1" stroke-width="0.53" opacity="0.34"/>
<path d="M87.7,99.0 l-6.7,4.3" stroke="#bcc4c1" stroke-width="0.53" opacity="0.34"/>
<path d="M50.2,105.0 l-4.2,-1.5" stroke="#bcc4c1" stroke-width="0.53" opacity="0.34"/>
<path d="M46.3,105.9 l-3.8,5.0" stroke="#bcc4c1" stroke-width="0.53" opacity="0.34"/>
<path d="M426.6,127.0 Q437.2,125.8 447.7,126.3" stroke="#bcc4c1" stroke-width="0.62" fill="none" opacity="0.46"/>
<path d="M441.8,126.1 l7.4,3.3" stroke="#bcc4c1" stroke-width="0.49" opacity="0.37"/>
<path d="M445.5,126.2 l5.4,-6.6" stroke="#bcc4c1" stroke-width="0.49" opacity="0.37"/>
<path d="M438.9,126.2 l3.3,-1.6" stroke="#bcc4c1" stroke-width="0.49" opacity="0.37"/>
<path d="M429.9,126.6 l4.8,-5.5" stroke="#bcc4c1" stroke-width="0.49" opacity="0.37"/>
<path d="M430.2,126.6 l4.7,-2.2" stroke="#bcc4c1" stroke-width="0.49" opacity="0.37"/>
<path d="M361.5,173.2 Q345.7,166.2 330.0,161.8" stroke="#bcc4c1" stroke-width="0.79" fill="none" opacity="0.42"/>
<path d="M351.5,169.0 l-2.1,-2.7" stroke="#bcc4c1" stroke-width="0.63" opacity="0.33"/>
<path d="M331.7,162.3 l-5.5,-6.3" stroke="#bcc4c1" stroke-width="0.63" opacity="0.33"/>
<path d="M356.4,171.0 l-6.8,3.2" stroke="#bcc4c1" stroke-width="0.63" opacity="0.33"/>
<path d="M425.1,145.4 Q441.8,140.0 458.5,137.4" stroke="#bcc4c1" stroke-width="0.72" fill="none" opacity="0.43"/>
<path d="M449.3,139.1 l2.2,-3.2" stroke="#bcc4c1" stroke-width="0.57" opacity="0.34"/>
<path d="M439.5,141.3 l2.1,-3.3" stroke="#bcc4c1" stroke-width="0.57" opacity="0.34"/>
<path d="M455.3,138.0 l5.3,-6.4" stroke="#bcc4c1" stroke-width="0.57" opacity="0.34"/>
<path d="M444.0,140.2 l4.2,1.4" stroke="#bcc4c1" stroke-width="0.57" opacity="0.34"/>
<path d="M164.1,127.3 Q141.5,121.8 119.0,120.1" stroke="#bcc4c1" stroke-width="0.68" fill="none" opacity="0.41"/>
<path d="M123.8,120.5 l-5.8,-7.4" stroke="#bcc4c1" stroke-width="0.54" opacity="0.33"/>
<path d="M136.8,122.0 l-9.4,2.5" stroke="#bcc4c1" stroke-width="0.54" opacity="0.33"/>
<path d="M156.6,125.6 l-3.4,2.6" stroke="#bcc4c1" stroke-width="0.54" opacity="0.33"/>
<path d="M152.2,124.7 l-2.0,-2.3" stroke="#bcc4c1" stroke-width="0.54" opacity="0.33"/>
<path d="M153.9,125.0 l-3.7,1.5" stroke="#bcc4c1" stroke-width="0.54" opacity="0.33"/>
<path d="M315.2,123.9 Q306.3,122.1 297.4,121.8" stroke="#bcc4c1" stroke-width="0.84" fill="none" opacity="0.44"/>
<path d="M309.5,122.9 l-3.9,3.3" stroke="#bcc4c1" stroke-width="0.67" opacity="0.35"/>
<path d="M304.2,122.3 l-6.1,3.8" stroke="#bcc4c1" stroke-width="0.67" opacity="0.35"/>
<path d="M301.7,122.0 l-5.1,-5.3" stroke="#bcc4c1" stroke-width="0.67" opacity="0.35"/>
<path d="M407.7,173.7 Q391.0,175.2 374.3,179.4" stroke="#bcc4c1" stroke-width="0.72" fill="none" opacity="0.41"/>
<path d="M398.3,174.8 l-2.4,2.9" stroke="#bcc4c1" stroke-width="0.57" opacity="0.33"/>
<path d="M386.1,176.8 l-8.0,5.4" stroke="#bcc4c1" stroke-width="0.57" opacity="0.33"/>
<path d="M425.2,198.9 Q398.6,199.8 371.9,205.0" stroke="#bcc4c1" stroke-width="0.79" fill="none" opacity="0.30"/>
<path d="M408.2,199.9 l-6.1,-2.1" stroke="#bcc4c1" stroke-width="0.63" opacity="0.24"/>
<path d="M401.3,200.6 l-3.3,-2.4" stroke="#bcc4c1" stroke-width="0.63" opacity="0.24"/>
<path d="M380.9,123.8 Q396.1,120.2 411.2,119.1" stroke="#bcc4c1" stroke-width="0.61" fill="none" opacity="0.42"/>
<path d="M405.2,119.6 l4.0,-2.8" stroke="#bcc4c1" stroke-width="0.49" opacity="0.34"/>
<path d="M401.7,120.0 l3.7,-2.9" stroke="#bcc4c1" stroke-width="0.49" opacity="0.34"/>
<path d="M406.3,119.5 l6.9,4.4" stroke="#bcc4c1" stroke-width="0.49" opacity="0.34"/>
<path d="M388.3,122.2 l3.1,-2.5" stroke="#bcc4c1" stroke-width="0.49" opacity="0.34"/>
<path d="M166.4,140.6 Q145.7,141.3 125.1,145.4" stroke="#bcc4c1" stroke-width="0.90" fill="none" opacity="0.50"/>
<path d="M149.7,141.7 l-5.8,5.8" stroke="#bcc4c1" stroke-width="0.72" opacity="0.40"/>
<path d="M140.4,142.8 l-7.9,-5.2" stroke="#bcc4c1" stroke-width="0.72" opacity="0.40"/>
<path d="M144.1,142.4 l-3.4,1.8" stroke="#bcc4c1" stroke-width="0.72" opacity="0.40"/>
<path d="M140.0,142.9 l-5.6,3.7" stroke="#bcc4c1" stroke-width="0.72" opacity="0.40"/>
<path d="M153.6,141.4 l-5.3,6.3" stroke="#bcc4c1" stroke-width="0.72" opacity="0.40"/>
<path d="M134.5,53.6 Q123.3,50.9 112.0,50.1" stroke="#bcc4c1" stroke-width="0.89" fill="none" opacity="0.35"/>
<path d="M122.4,51.2 l-3.4,-3.1" stroke="#bcc4c1" stroke-width="0.71" opacity="0.28"/>
<path d="M273.4,145.3 Q294.0,137.0 314.5,132.2" stroke="#bcc4c1" stroke-width="0.76" fill="none" opacity="0.43"/>
<path d="M280.6,142.5 l5.5,0.4" stroke="#bcc4c1" stroke-width="0.61" opacity="0.35"/>
<path d="M309.6,133.4 l3.8,-8.3" stroke="#bcc4c1" stroke-width="0.61" opacity="0.35"/>
<path d="M290.9,138.9 l3.8,0.7" stroke="#bcc4c1" stroke-width="0.61" opacity="0.35"/>
<path d="M254.4,146.1 Q232.8,142.1 211.2,141.6" stroke="#bcc4c1" stroke-width="0.78" fill="none" opacity="0.32"/>
<path d="M233.3,143.0 l-5.3,-6.7" stroke="#bcc4c1" stroke-width="0.62" opacity="0.26"/>
<path d="M242.8,144.2 l-3.9,1.8" stroke="#bcc4c1" stroke-width="0.62" opacity="0.26"/>
<path d="M237.7,143.5 l-2.6,1.6" stroke="#bcc4c1" stroke-width="0.62" opacity="0.26"/>
<path d="M98.9,87.9 Q81.9,86.5 64.9,87.8" stroke="#bcc4c1" stroke-width="0.72" fill="none" opacity="0.49"/>
<path d="M83.9,87.1 l-7.0,-3.6" stroke="#bcc4c1" stroke-width="0.58" opacity="0.39"/>
<path d="M75.2,138.4 Q64.4,136.4 53.6,136.2" stroke="#bcc4c1" stroke-width="0.74" fill="none" opacity="0.44"/>
<path d="M61.0,136.5 l-5.0,-3.3" stroke="#bcc4c1" stroke-width="0.59" opacity="0.35"/>
<path d="M65.3,136.9 l-6.7,5.5" stroke="#bcc4c1" stroke-width="0.59" opacity="0.35"/>
<path d="M70.8,137.6 l-5.5,-4.1" stroke="#bcc4c1" stroke-width="0.59" opacity="0.35"/>
<path d="M55.1,136.2 l-4.1,-4.7" stroke="#bcc4c1" stroke-width="0.59" opacity="0.35"/>
<path d="M59.0,136.4 l-5.4,2.1" stroke="#bcc4c1" stroke-width="0.59" opacity="0.35"/>
<path d="M67.5,97.1 Q91.7,96.0 115.9,98.7" stroke="#bcc4c1" stroke-width="0.89" fill="none" opacity="0.50"/>
<path d="M89.6,96.9 l4.4,-3.1" stroke="#bcc4c1" stroke-width="0.71" opacity="0.40"/>
<path d="M91.0,96.9 l8.4,-3.5" stroke="#bcc4c1" stroke-width="0.71" opacity="0.40"/>
<path d="M99.9,97.3 l6.7,-2.8" stroke="#bcc4c1" stroke-width="0.71" opacity="0.40"/>
<path d="M97.3,97.2 l3.0,2.3" stroke="#bcc4c1" stroke-width="0.71" opacity="0.40"/>
<path d="M94.2,97.0 l3.6,-1.4" stroke="#bcc4c1" stroke-width="0.71" opacity="0.40"/>
<path d="M426.8,179.9 Q435.1,178.6 443.4,178.6" stroke="#bcc4c1" stroke-width="0.83" fill="none" opacity="0.30"/>
<path d="M435.3,178.9 l5.5,-2.9" stroke="#bcc4c1" stroke-width="0.67" opacity="0.24"/>
<path d="M360.2,42.8 Q345.3,37.5 330.5,34.6" stroke="#bcc4c1" stroke-width="0.73" fill="none" opacity="0.42"/>
<path d="M337.6,36.1 l-3.0,-3.9" stroke="#bcc4c1" stroke-width="0.58" opacity="0.33"/>
<path d="M348.1,38.9 l-6.5,-4.7" stroke="#bcc4c1" stroke-width="0.58" opacity="0.33"/>
<path d="M275.4,83.8 Q285.5,81.5 295.5,80.8" stroke="#bcc4c1" stroke-width="0.67" fill="none" opacity="0.37"/>
<path d="M282.4,82.4 l5.5,4.2" stroke="#bcc4c1" stroke-width="0.53" opacity="0.30"/>
<path d="M290.1,81.3 l4.5,-5.7" stroke="#bcc4c1" stroke-width="0.53" opacity="0.30"/>
<path d="M285.4,81.9 l5.6,4.9" stroke="#bcc4c1" stroke-width="0.53" opacity="0.30"/>
<path d="M288.8,81.4 l4.5,2.3" stroke="#bcc4c1" stroke-width="0.53" opacity="0.30"/>
<path d="M338.4,83.1 Q347.0,82.3 355.7,82.9" stroke="#bcc4c1" stroke-width="0.82" fill="none" opacity="0.42"/>
<path d="M354.2,82.8 l7.4,4.1" stroke="#bcc4c1" stroke-width="0.65" opacity="0.34"/>
<path d="M295.8,141.2 Q311.0,135.6 326.2,132.5" stroke="#9aa39f" stroke-width="0.60" fill="none" opacity="0.24"/>
<path d="M307.2,137.3 l2.7,-3.6" stroke="#9aa39f" stroke-width="0.48" opacity="0.19"/>
<path d="M321.8,133.4 l8.1,3.1" stroke="#9aa39f" stroke-width="0.48" opacity="0.19"/>
<path d="M219.6,190.0 Q212.6,188.1 205.6,187.3" stroke="#9aa39f" stroke-width="0.60" fill="none" opacity="0.17"/>
<path d="M210.4,188.0 l-2.8,1.8" stroke="#9aa39f" stroke-width="0.48" opacity="0.13"/>
<path d="M214.0,188.7 l-3.1,-2.7" stroke="#9aa39f" stroke-width="0.48" opacity="0.13"/>
<path d="M240.0,73.1 Q260.0,64.4 280.1,59.2" stroke="#9aa39f" stroke-width="0.60" fill="none" opacity="0.25"/>
<path d="M260.6,65.1 l5.9,0.8" stroke="#9aa39f" stroke-width="0.48" opacity="0.20"/>
<path d="M262.0,64.6 l3.2,-4.3" stroke="#9aa39f" stroke-width="0.48" opacity="0.20"/>
<path d="M253.6,67.6 l2.7,-4.0" stroke="#9aa39f" stroke-width="0.48" opacity="0.20"/>
<path d="M274.5,60.7 l4.9,0.2" stroke="#9aa39f" stroke-width="0.48" opacity="0.20"/>
<path d="M272.2,61.4 l2.4,-3.6" stroke="#9aa39f" stroke-width="0.48" opacity="0.20"/>
<path d="M305.1,116.0 Q285.9,110.2 266.8,107.6" stroke="#9aa39f" stroke-width="0.60" fill="none" opacity="0.24"/>
<path d="M269.3,107.9 l-4.1,-3.9" stroke="#9aa39f" stroke-width="0.48" opacity="0.19"/>
<path d="M293.4,112.8 l-2.8,-3.5" stroke="#9aa39f" stroke-width="0.48" opacity="0.19"/>
<path d="M269.2,107.9 l-8.4,3.6" stroke="#9aa39f" stroke-width="0.48" opacity="0.19"/>
<path d="M293.6,112.8 l-3.1,-2.5" stroke="#9aa39f" stroke-width="0.48" opacity="0.19"/>
<path d="M295.3,113.3 l-4.7,-5.0" stroke="#9aa39f" stroke-width="0.48" opacity="0.19"/>
<path d="M286.7,104.5 Q280.8,103.4 274.8,103.3" stroke="#9aa39f" stroke-width="0.60" fill="none" opacity="0.23"/>
<path d="M275.5,103.3 l-5.0,-6.0" stroke="#9aa39f" stroke-width="0.48" opacity="0.19"/>
<path d="M276.2,103.4 l-8.5,3.3" stroke="#9aa39f" stroke-width="0.48" opacity="0.19"/>
<path d="M272.5,96.6 Q260.1,91.6 247.8,88.7" stroke="#9aa39f" stroke-width="0.60" fill="none" opacity="0.17"/>
<path d="M251.3,89.6 l-4.6,1.6" stroke="#9aa39f" stroke-width="0.48" opacity="0.14"/>
<path d="M291.7,49.3 Q302.5,46.2 313.3,44.9" stroke="#9aa39f" stroke-width="0.60" fill="none" opacity="0.18"/>
<path d="M298.2,47.6 l8.1,-5.4" stroke="#9aa39f" stroke-width="0.48" opacity="0.14"/>
<path d="M308.2,45.6 l4.0,-3.1" stroke="#9aa39f" stroke-width="0.48" opacity="0.14"/>
<path d="M300.5,47.1 l4.1,-6.5" stroke="#9aa39f" stroke-width="0.48" opacity="0.14"/>
<path d="M306.4,45.9 l5.3,-7.1" stroke="#9aa39f" stroke-width="0.48" opacity="0.14"/>
<path d="M211.5,69.8 Q220.7,71.5 230.0,74.7" stroke="#9aa39f" stroke-width="0.60" fill="none" opacity="0.18"/>
<path d="M222.3,72.3 l2.6,4.0" stroke="#9aa39f" stroke-width="0.48" opacity="0.15"/>
<path d="M217.7,71.1 l3.7,4.4" stroke="#9aa39f" stroke-width="0.48" opacity="0.15"/>
<path d="M215.1,70.5 l6.6,-2.6" stroke="#9aa39f" stroke-width="0.48" opacity="0.15"/>
<path d="M227.1,73.7 l2.0,4.2" stroke="#9aa39f" stroke-width="0.48" opacity="0.15"/>
<path d="M257.6,206.5 Q277.4,203.6 297.2,203.7" stroke="#9aa39f" stroke-width="0.60" fill="none" opacity="0.26"/>
<path d="M270.3,204.9 l3.8,1.6" stroke="#9aa39f" stroke-width="0.48" opacity="0.21"/>
<path d="M286.7,203.9 l6.1,-2.9" stroke="#9aa39f" stroke-width="0.48" opacity="0.21"/>
<path d="M265.2,205.5 l2.5,2.0" stroke="#9aa39f" stroke-width="0.48" opacity="0.21"/>
<path d="M237.5,173.2 Q247.6,170.4 257.7,169.2" stroke="#9aa39f" stroke-width="0.60" fill="none" opacity="0.29"/>
<path d="M254.5,169.7 l3.8,-2.8" stroke="#9aa39f" stroke-width="0.48" opacity="0.23"/>
<path d="M255.7,169.5 l4.9,-3.2" stroke="#9aa39f" stroke-width="0.48" opacity="0.23"/>
<path d="M219.2,77.9 Q240.7,70.7 262.3,67.1" stroke="#9aa39f" stroke-width="0.60" fill="none" opacity="0.24"/>
<path d="M229.9,74.6 l5.4,-3.7" stroke="#9aa39f" stroke-width="0.48" opacity="0.19"/>
<path d="M253.9,68.6 l6.4,-5.3" stroke="#9aa39f" stroke-width="0.48" opacity="0.19"/>
<path d="M252.3,69.0 l7.2,0.9" stroke="#9aa39f" stroke-width="0.48" opacity="0.19"/>
<path d="M246.6,70.2 l7.0,1.3" stroke="#9aa39f" stroke-width="0.48" opacity="0.19"/>
<path d="M255.1,68.4 l7.8,-5.7" stroke="#9aa39f" stroke-width="0.48" opacity="0.19"/>
<path d="M237.1,15.1 Q248.3,17.9 259.6,22.6" stroke="#9aa39f" stroke-width="0.60" fill="none" opacity="0.18"/>
<path d="M240.8,16.1 l8.5,-1.8" stroke="#9aa39f" stroke-width="0.48" opacity="0.15"/>
<path d="M242.2,16.5 l4.2,-2.0" stroke="#9aa39f" stroke-width="0.48" opacity="0.15"/>
<path d="M244.5,17.2 l3.7,-1.6" stroke="#9aa39f" stroke-width="0.48" opacity="0.15"/>
<path d="M309.9,172.6 Q329.0,165.0 348.0,160.6" stroke="#9aa39f" stroke-width="0.60" fill="none" opacity="0.23"/>
<path d="M345.5,161.2 l8.9,1.2" stroke="#9aa39f" stroke-width="0.48" opacity="0.18"/>
<path d="M322.5,167.9 l4.0,-4.3" stroke="#9aa39f" stroke-width="0.48" opacity="0.18"/>
<path d="M340.4,162.5 l2.0,-4.7" stroke="#9aa39f" stroke-width="0.48" opacity="0.18"/>
<path d="M256.4,128.1 Q249.7,129.8 242.9,132.5" stroke="#9aa39f" stroke-width="0.60" fill="none" opacity="0.17"/>
<path d="M248.7,130.3 l-6.2,-1.0" stroke="#9aa39f" stroke-width="0.48" opacity="0.13"/>
<path d="M246.0,131.3 l-2.7,3.1" stroke="#9aa39f" stroke-width="0.48" opacity="0.13"/>
<path d="M249.2,130.2 l-6.0,-2.7" stroke="#9aa39f" stroke-width="0.48" opacity="0.13"/>
<path d="M246.7,131.0 l-1.5,2.9" stroke="#9aa39f" stroke-width="0.48" opacity="0.13"/>
<path d="M280.4,143.8 Q271.4,139.8 262.5,137.3" stroke="#9aa39f" stroke-width="0.60" fill="none" opacity="0.17"/>
<path d="M270.3,139.7 l-8.6,2.4" stroke="#9aa39f" stroke-width="0.48" opacity="0.14"/>
<path d="M276.4,142.0 l-4.2,-6.8" stroke="#9aa39f" stroke-width="0.48" opacity="0.14"/>
<path d="M273.5,140.9 l-4.6,-7.4" stroke="#9aa39f" stroke-width="0.48" opacity="0.14"/>
<path d="M271.8,140.3 l-9.3,0.1" stroke="#9aa39f" stroke-width="0.48" opacity="0.14"/>
<path d="M234.5,9.2 Q256.7,9.6 278.9,13.6" stroke="#9aa39f" stroke-width="0.60" fill="none" opacity="0.24"/>
<path d="M245.8,9.7 l5.9,7.9" stroke="#9aa39f" stroke-width="0.48" opacity="0.19"/>
<path d="M263.4,11.3 l7.1,-6.5" stroke="#9aa39f" stroke-width="0.48" opacity="0.19"/>
<path d="M209.5,108.2 Q228.4,106.2 247.3,107.3" stroke="#9aa39f" stroke-width="0.60" fill="none" opacity="0.19"/>
<path d="M226.0,107.0 l3.1,-1.3" stroke="#9aa39f" stroke-width="0.48" opacity="0.15"/>
<path d="M222.5,107.2 l4.9,2.5" stroke="#9aa39f" stroke-width="0.48" opacity="0.15"/>
<path d="M232.3,106.9 l3.9,3.2" stroke="#9aa39f" stroke-width="0.48" opacity="0.15"/>
<path d="M241.7,107.1 l5.0,-2.8" stroke="#9aa39f" stroke-width="0.48" opacity="0.15"/>
<path d="M212.1,194.5 Q232.2,192.4 252.3,193.5" stroke="#9aa39f" stroke-width="0.60" fill="none" opacity="0.25"/>
<path d="M231.2,193.2 l7.4,-4.1" stroke="#9aa39f" stroke-width="0.48" opacity="0.20"/>
<path d="M267.1,48.3 Q274.3,44.9 281.6,42.8" stroke="#9aa39f" stroke-width="0.60" fill="none" opacity="0.27"/>
<path d="M276.4,44.5 l4.3,0.0" stroke="#9aa39f" stroke-width="0.48" opacity="0.22"/>
<path d="M304.6,133.1 Q295.8,129.4 287.0,127.2" stroke="#9aa39f" stroke-width="0.60" fill="none" opacity="0.17"/>
<path d="M297.2,130.3 l-9.5,2.7" stroke="#9aa39f" stroke-width="0.48" opacity="0.14"/>
<path d="M287.9,127.4 l-6.6,-5.7" stroke="#9aa39f" stroke-width="0.48" opacity="0.14"/>
<path d="M288.2,127.4 l-4.2,2.1" stroke="#9aa39f" stroke-width="0.48" opacity="0.14"/>
<path d="M296.3,129.9 l-5.4,-5.5" stroke="#9aa39f" stroke-width="0.48" opacity="0.14"/>
<path d="M295.6,129.7 l-5.1,2.1" stroke="#9aa39f" stroke-width="0.48" opacity="0.14"/>
<path d="M191.3,194.6 Q175.6,184.2 159.9,176.7" stroke="#9aa39f" stroke-width="0.60" fill="none" opacity="0.19"/>
<path d="M179.5,187.2 l-1.5,-2.7" stroke="#9aa39f" stroke-width="0.48" opacity="0.15"/>
<path d="M181.3,188.3 l-3.8,-7.2" stroke="#9aa39f" stroke-width="0.48" opacity="0.15"/>
<path d="M288.5,82.5 Q271.8,85.7 255.1,91.6" stroke="#9aa39f" stroke-width="0.60" fill="none" opacity="0.29"/>
<path d="M261.7,89.3 l-4.3,-1.9" stroke="#9aa39f" stroke-width="0.48" opacity="0.23"/>
<path d="M265.3,88.2 l-6.8,-2.8" stroke="#9aa39f" stroke-width="0.48" opacity="0.23"/>
<path d="M269.5,87.0 l-3.4,6.3" stroke="#9aa39f" stroke-width="0.48" opacity="0.23"/>
<path d="M307.4,189.2 Q316.8,184.4 326.2,181.3" stroke="#9aa39f" stroke-width="0.60" fill="none" opacity="0.22"/>
<path d="M319.8,183.6 l8.4,4.3" stroke="#9aa39f" stroke-width="0.48" opacity="0.17"/>
<path d="M283.1,211.7 Q297.6,206.2 312.2,203.1" stroke="#9aa39f" stroke-width="0.60" fill="none" opacity="0.23"/>
<path d="M296.9,207.0 l6.8,-5.5" stroke="#9aa39f" stroke-width="0.48" opacity="0.18"/>
<path d="M296.2,207.3 l6.9,1.4" stroke="#9aa39f" stroke-width="0.48" opacity="0.18"/>
<path d="M307.2,204.3 l4.5,-7.6" stroke="#9aa39f" stroke-width="0.48" opacity="0.18"/>
<path d="M288.7,209.7 l4.3,-4.8" stroke="#9aa39f" stroke-width="0.48" opacity="0.18"/>
<path d="M309.8,203.7 l6.6,-6.7" stroke="#9aa39f" stroke-width="0.48" opacity="0.18"/>
<path d="M240.2,14.7 Q235.3,15.9 230.4,17.9" stroke="#9aa39f" stroke-width="0.60" fill="none" opacity="0.18"/>
<path d="M235.6,16.0 l-9.7,-0.9" stroke="#9aa39f" stroke-width="0.48" opacity="0.14"/>
<path d="M257.1,202.7 Q238.2,206.9 219.4,214.1" stroke="#9aa39f" stroke-width="0.60" fill="none" opacity="0.21"/>
<path d="M226.7,211.4 l-6.2,-3.7" stroke="#9aa39f" stroke-width="0.48" opacity="0.17"/>
<path d="M224.1,212.4 l-8.2,-4.0" stroke="#9aa39f" stroke-width="0.48" opacity="0.17"/>
<path d="M245.9,205.5 l-5.7,5.8" stroke="#9aa39f" stroke-width="0.48" opacity="0.17"/>
<path d="M294.0,209.7 Q305.2,203.5 316.5,199.3" stroke="#9aa39f" stroke-width="0.60" fill="none" opacity="0.15"/>
<path d="M299.8,206.6 l3.0,0.5" stroke="#9aa39f" stroke-width="0.48" opacity="0.12"/>
<path d="M305.1,204.0 l4.8,-6.4" stroke="#9aa39f" stroke-width="0.48" opacity="0.12"/>
<path d="M307.5,203.0 l2.7,-6.3" stroke="#9aa39f" stroke-width="0.48" opacity="0.12"/>
<path d="M300.0,72.7 Q288.9,74.6 277.9,78.3" stroke="#9aa39f" stroke-width="0.60" fill="none" opacity="0.18"/>
<path d="M281.6,77.1 l-4.4,6.4" stroke="#9aa39f" stroke-width="0.48" opacity="0.15"/>
<path d="M290.7,74.6 l-8.8,-3.4" stroke="#9aa39f" stroke-width="0.48" opacity="0.15"/>
<path d="M295.8,73.5 l-3.9,3.2" stroke="#9aa39f" stroke-width="0.48" opacity="0.15"/>
<path d="M284.5,200.9 Q266.5,199.9 248.5,201.7" stroke="#9aa39f" stroke-width="0.60" fill="none" opacity="0.27"/>
<path d="M252.4,201.4 l-6.9,-6.0" stroke="#9aa39f" stroke-width="0.48" opacity="0.22"/>
<path d="M251.2,201.5 l-2.7,-2.7" stroke="#9aa39f" stroke-width="0.48" opacity="0.22"/>
<path d="M304.6,83.1 Q297.2,79.7 289.7,77.5" stroke="#9aa39f" stroke-width="0.60" fill="none" opacity="0.28"/>
<path d="M300.6,81.4 l-3.9,-4.6" stroke="#9aa39f" stroke-width="0.48" opacity="0.23"/>
<path d="M292.4,78.4 l-4.0,0.4" stroke="#9aa39f" stroke-width="0.48" opacity="0.23"/>
<path d="M293.1,78.6 l-3.9,-5.1" stroke="#9aa39f" stroke-width="0.48" opacity="0.23"/>
<path d="M190.2,148.5 Q197.8,143.8 205.4,140.6" stroke="#9aa39f" stroke-width="0.60" fill="none" opacity="0.23"/>
<path d="M200.7,142.7 l2.2,-4.1" stroke="#9aa39f" stroke-width="0.48" opacity="0.18"/>
<path d="M197.7,144.2 l2.1,-4.4" stroke="#9aa39f" stroke-width="0.48" opacity="0.18"/>
<path d="M272.4,74.9 Q293.7,68.2 315.1,65.0" stroke="#9aa39f" stroke-width="0.60" fill="none" opacity="0.22"/>
<path d="M296.5,68.4 l4.0,2.3" stroke="#9aa39f" stroke-width="0.48" opacity="0.17"/>
<path d="M310.4,65.7 l5.0,0.8" stroke="#9aa39f" stroke-width="0.48" opacity="0.17"/>
<path d="M300.7,64.4 Q284.1,60.0 267.5,58.3" stroke="#9aa39f" stroke-width="0.60" fill="none" opacity="0.27"/>
<path d="M274.4,59.1 l-8.5,4.4" stroke="#9aa39f" stroke-width="0.48" opacity="0.21"/>
<path d="M293.4,62.6 l-6.1,4.8" stroke="#9aa39f" stroke-width="0.48" opacity="0.21"/>
<path d="M274.3,59.1 l-7.4,-4.9" stroke="#9aa39f" stroke-width="0.48" opacity="0.21"/>
<path d="M292.7,196.1 Q273.1,192.9 253.6,192.8" stroke="#9aa39f" stroke-width="0.60" fill="none" opacity="0.19"/>
<path d="M272.8,193.6 l-8.1,-5.5" stroke="#9aa39f" stroke-width="0.48" opacity="0.15"/>
<path d="M268.9,193.3 l-8.4,-4.1" stroke="#9aa39f" stroke-width="0.48" opacity="0.15"/>
<path d="M259.1,192.9 l-4.0,3.2" stroke="#9aa39f" stroke-width="0.48" opacity="0.15"/>
<path d="M282.4,194.6 l-7.8,-4.1" stroke="#9aa39f" stroke-width="0.48" opacity="0.15"/>
<path d="M273.0,193.6 l-3.1,1.6" stroke="#9aa39f" stroke-width="0.48" opacity="0.15"/>
<path d="M205.1,109.7 Q221.9,99.5 238.7,92.4" stroke="#9aa39f" stroke-width="0.60" fill="none" opacity="0.22"/>
<path d="M222.6,99.9 l3.2,-5.4" stroke="#9aa39f" stroke-width="0.48" opacity="0.18"/>
<path d="M222.5,100.0 l3.2,-7.2" stroke="#9aa39f" stroke-width="0.48" opacity="0.18"/>
<path d="M224.6,99.0 l4.7,-8.5" stroke="#9aa39f" stroke-width="0.48" opacity="0.18"/>
<path d="M231.1,95.8 l5.1,-7.7" stroke="#9aa39f" stroke-width="0.48" opacity="0.18"/>
<path d="M266.6,182.9 Q251.9,175.8 237.3,171.2" stroke="#9aa39f" stroke-width="0.60" fill="none" opacity="0.26"/>
<path d="M242.0,172.7 l-2.3,-5.7" stroke="#9aa39f" stroke-width="0.48" opacity="0.21"/>
<path d="M261.7,180.6 l-6.1,0.9" stroke="#9aa39f" stroke-width="0.48" opacity="0.21"/>
<path d="M252.6,176.7 l-4.0,-0.0" stroke="#9aa39f" stroke-width="0.48" opacity="0.21"/>
<path d="M254.9,177.6 l-2.4,-2.4" stroke="#9aa39f" stroke-width="0.48" opacity="0.21"/>
<path d="M253.0,176.8 l-6.0,-6.3" stroke="#9aa39f" stroke-width="0.48" opacity="0.21"/>
<path d="M309.0,204.6 Q290.2,200.0 271.4,198.4" stroke="#9aa39f" stroke-width="0.60" fill="none" opacity="0.29"/>
<path d="M301.0,202.8 l-2.1,-3.6" stroke="#9aa39f" stroke-width="0.48" opacity="0.23"/>
<path d="M281.4,199.5 l-4.6,1.9" stroke="#9aa39f" stroke-width="0.48" opacity="0.23"/>
<path d="M293.1,201.3 l-7.6,4.0" stroke="#9aa39f" stroke-width="0.48" opacity="0.23"/>
<path d="M282.8,199.7 l-6.6,-6.0" stroke="#9aa39f" stroke-width="0.48" opacity="0.23"/>
<path d="M297.0,202.0 l-2.7,-4.1" stroke="#9aa39f" stroke-width="0.48" opacity="0.23"/>
<path d="M202.0,90.9 Q195.5,89.3 189.1,88.8" stroke="#9aa39f" stroke-width="0.60" fill="none" opacity="0.20"/>
<path d="M190.8,88.9 l-2.9,2.0" stroke="#9aa39f" stroke-width="0.48" opacity="0.16"/>
<path d="M192.5,89.1 l-3.4,0.9" stroke="#9aa39f" stroke-width="0.48" opacity="0.16"/>
<path d="M193.1,89.2 l-4.1,-3.0" stroke="#9aa39f" stroke-width="0.48" opacity="0.16"/>
<path d="M197.9,90.0 l-3.5,2.5" stroke="#9aa39f" stroke-width="0.48" opacity="0.16"/>
<path d="M293.6,110.9 Q304.8,109.4 316.0,109.6" stroke="#9aa39f" stroke-width="0.60" fill="none" opacity="0.17"/>
<path d="M304.6,109.8 l5.4,-3.3" stroke="#9aa39f" stroke-width="0.48" opacity="0.13"/>
<path d="M220.6,209.5 Q202.4,205.1 184.1,203.6" stroke="#9aa39f" stroke-width="0.60" fill="none" opacity="0.17"/>
<path d="M194.5,204.7 l-2.9,0.9" stroke="#9aa39f" stroke-width="0.48" opacity="0.14"/>
<path d="M195.2,204.8 l-2.9,-3.0" stroke="#9aa39f" stroke-width="0.48" opacity="0.14"/>
<path d="M201.8,205.7 l-4.5,-4.8" stroke="#9aa39f" stroke-width="0.48" opacity="0.14"/>
<path d="M209.8,207.1 l-8.9,3.4" stroke="#9aa39f" stroke-width="0.48" opacity="0.14"/>
<path d="M191.6,204.3 l-6.0,-5.3" stroke="#9aa39f" stroke-width="0.48" opacity="0.14"/>
<path d="M304.1,146.0 Q324.4,143.2 344.7,143.6" stroke="#9aa39f" stroke-width="0.60" fill="none" opacity="0.23"/>
<path d="M316.2,144.6 l2.8,2.2" stroke="#9aa39f" stroke-width="0.48" opacity="0.18"/>
<path d="M327.0,143.9 l5.8,-3.8" stroke="#9aa39f" stroke-width="0.48" opacity="0.18"/>
<path d="M340.9,143.6 l8.6,3.0" stroke="#9aa39f" stroke-width="0.48" opacity="0.18"/>
<path d="M336.8,143.6 l4.8,1.8" stroke="#9aa39f" stroke-width="0.48" opacity="0.18"/>
<path d="M228.4,95.6 Q234.9,94.2 241.4,93.9" stroke="#9aa39f" stroke-width="0.60" fill="none" opacity="0.29"/>
<path d="M234.7,94.5 l5.0,-3.3" stroke="#9aa39f" stroke-width="0.48" opacity="0.23"/>
<path d="M190.6,40.1 Q197.2,36.6 203.8,34.2" stroke="#9aa39f" stroke-width="0.60" fill="none" opacity="0.29"/>
<path d="M195.4,37.7 l7.9,2.6" stroke="#9aa39f" stroke-width="0.48" opacity="0.23"/>
<path d="M278.2,32.6 Q269.9,29.7 261.6,28.1" stroke="#9aa39f" stroke-width="0.60" fill="none" opacity="0.25"/>
<path d="M267.7,29.4 l-4.6,2.1" stroke="#9aa39f" stroke-width="0.48" opacity="0.20"/>
<path d="M287.7,126.8 Q301.6,119.7 315.6,114.9" stroke="#9aa39f" stroke-width="0.60" fill="none" opacity="0.25"/>
<path d="M293.7,123.8 l5.9,2.8" stroke="#9aa39f" stroke-width="0.48" opacity="0.20"/>
<path d="M271.9,49.9 Q285.6,49.4 299.4,51.0" stroke="#9aa39f" stroke-width="0.60" fill="none" opacity="0.28"/>
<path d="M276.7,49.8 l4.9,-4.5" stroke="#9aa39f" stroke-width="0.48" opacity="0.22"/>
<path d="M278.2,49.8 l5.3,3.4" stroke="#9aa39f" stroke-width="0.48" opacity="0.22"/>
<path d="M295.8,50.6 l2.8,1.4" stroke="#9aa39f" stroke-width="0.48" opacity="0.22"/>
<path d="M293.5,50.4 l7.3,6.2" stroke="#9aa39f" stroke-width="0.48" opacity="0.22"/>
<path d="M192.1,22.3 Q207.8,25.5 223.5,31.3" stroke="#9aa39f" stroke-width="0.60" fill="none" opacity="0.21"/>
<path d="M219.3,29.8 l3.8,-0.9" stroke="#9aa39f" stroke-width="0.48" opacity="0.17"/>
<path d="M209.2,26.5 l3.5,7.7" stroke="#9aa39f" stroke-width="0.48" opacity="0.17"/>
<path d="M202.6,24.7 l5.0,6.2" stroke="#9aa39f" stroke-width="0.48" opacity="0.17"/>
<path d="M208.6,26.4 l2.3,3.4" stroke="#9aa39f" stroke-width="0.48" opacity="0.17"/>
<path d="M209.4,26.6 l7.1,-1.9" stroke="#9aa39f" stroke-width="0.48" opacity="0.17"/>
<path d="M265.2,15.8 Q248.0,4.5 230.8,-3.7" stroke="#9aa39f" stroke-width="0.60" fill="none" opacity="0.22"/>
<path d="M258.9,11.8 l-4.0,-8.3" stroke="#9aa39f" stroke-width="0.48" opacity="0.17"/>
<path d="M248.2,5.4 l-1.0,-3.1" stroke="#9aa39f" stroke-width="0.48" opacity="0.17"/>
<path d="M237.9,-0.1 l-2.9,0.8" stroke="#9aa39f" stroke-width="0.48" opacity="0.17"/>
<path d="M197.3,56.8 Q175.6,54.4 153.8,55.5" stroke="#9aa39f" stroke-width="0.60" fill="none" opacity="0.18"/>
<path d="M162.1,55.2 l-6.9,3.9" stroke="#9aa39f" stroke-width="0.48" opacity="0.14"/>
<path d="M167.1,55.2 l-4.0,-4.9" stroke="#9aa39f" stroke-width="0.48" opacity="0.14"/>
<path d="M267.4,31.7 Q281.2,34.2 295.0,39.0" stroke="#9aa39f" stroke-width="0.60" fill="none" opacity="0.20"/>
<path d="M274.1,33.0 l5.2,6.1" stroke="#9aa39f" stroke-width="0.48" opacity="0.16"/>
<path d="M284.8,35.8 l4.1,-2.0" stroke="#9aa39f" stroke-width="0.48" opacity="0.16"/>
<path d="M286.5,36.3 l5.2,-1.6" stroke="#9aa39f" stroke-width="0.48" opacity="0.16"/>
<path d="M278.9,34.2 l9.1,-3.4" stroke="#9aa39f" stroke-width="0.48" opacity="0.16"/>
<path d="M221.6,114.7 Q202.7,112.0 183.8,112.3" stroke="#9aa39f" stroke-width="0.60" fill="none" opacity="0.29"/>
<path d="M199.5,112.6 l-4.5,-5.9" stroke="#9aa39f" stroke-width="0.48" opacity="0.23"/>
<path d="M191.9,112.3 l-5.7,-2.5" stroke="#9aa39f" stroke-width="0.48" opacity="0.23"/>
<path d="M194.6,112.4 l-4.0,1.9" stroke="#9aa39f" stroke-width="0.48" opacity="0.23"/>
<path d="M201.7,112.7 l-2.5,2.1" stroke="#9aa39f" stroke-width="0.48" opacity="0.23"/>
<path d="M255.9,113.0 Q270.4,110.2 285.0,109.8" stroke="#9aa39f" stroke-width="0.60" fill="none" opacity="0.22"/>
<path d="M268.6,111.0 l3.7,-5.4" stroke="#9aa39f" stroke-width="0.48" opacity="0.18"/>
<path d="M272.6,110.6 l7.0,3.0" stroke="#9aa39f" stroke-width="0.48" opacity="0.18"/>
<path d="M268.1,111.1 l7.1,-6.9" stroke="#9aa39f" stroke-width="0.48" opacity="0.18"/>
<path d="M262.1,111.9 l3.2,2.3" stroke="#9aa39f" stroke-width="0.48" opacity="0.18"/>
<path d="M225.1,122.3 Q212.4,115.4 199.7,110.7" stroke="#9aa39f" stroke-width="0.60" fill="none" opacity="0.17"/>
<path d="M211.7,115.6 l-1.7,-5.4" stroke="#9aa39f" stroke-width="0.48" opacity="0.14"/>
<path d="M217.5,118.4 l-2.2,-3.8" stroke="#9aa39f" stroke-width="0.48" opacity="0.14"/>
<path d="M271.1,172.9 Q254.7,170.3 238.4,170.3" stroke="#9aa39f" stroke-width="0.60" fill="none" opacity="0.16"/>
<path d="M249.4,170.6 l-5.6,-6.7" stroke="#9aa39f" stroke-width="0.48" opacity="0.13"/>
<path d="M242.4,170.4 l-7.4,-6.3" stroke="#9aa39f" stroke-width="0.48" opacity="0.13"/>
<path d="M257.8,171.2 l-8.3,3.7" stroke="#9aa39f" stroke-width="0.48" opacity="0.13"/>
<path d="M253.1,170.9 l-5.5,3.8" stroke="#9aa39f" stroke-width="0.48" opacity="0.13"/>
<path d="M273.0,104.5 Q263.6,106.8 254.2,110.6" stroke="#9aa39f" stroke-width="0.60" fill="none" opacity="0.19"/>
<path d="M257.5,109.4 l-6.1,-1.1" stroke="#9aa39f" stroke-width="0.48" opacity="0.15"/>
<path d="M256.6,109.7 l-4.5,-1.3" stroke="#9aa39f" stroke-width="0.48" opacity="0.15"/>
<path d="M289.8,160.4 Q271.9,158.1 254.1,158.7" stroke="#9aa39f" stroke-width="0.60" fill="none" opacity="0.26"/>
<path d="M275.2,159.0 l-4.9,-2.2" stroke="#9aa39f" stroke-width="0.48" opacity="0.21"/>
<path d="M276.2,159.1 l-3.5,-2.7" stroke="#9aa39f" stroke-width="0.48" opacity="0.21"/>
<path d="M261.4,158.6 l-3.5,3.2" stroke="#9aa39f" stroke-width="0.48" opacity="0.21"/>
<path d="M256.7,45.7 Q244.3,47.6 231.8,51.5" stroke="#9aa39f" stroke-width="0.60" fill="none" opacity="0.21"/>
<path d="M246.7,47.5 l-2.4,3.4" stroke="#9aa39f" stroke-width="0.48" opacity="0.17"/>
<path d="M248.3,47.2 l-3.6,5.8" stroke="#9aa39f" stroke-width="0.48" opacity="0.17"/>
<path d="M252.9,46.3 l-3.7,-1.2" stroke="#9aa39f" stroke-width="0.48" opacity="0.17"/>
<path d="M245.0,47.9 l-6.8,-3.9" stroke="#9aa39f" stroke-width="0.48" opacity="0.17"/>
<path d="M224.2,67.9 Q208.0,60.7 191.7,56.4" stroke="#9aa39f" stroke-width="0.60" fill="none" opacity="0.24"/>
<path d="M195.9,57.6 l-7.4,-6.5" stroke="#9aa39f" stroke-width="0.48" opacity="0.20"/>
<path d="M306.6,184.9 Q328.9,183.3 351.1,185.4" stroke="#9aa39f" stroke-width="0.60" fill="none" opacity="0.25"/>
<path d="M315.3,184.4 l3.7,4.0" stroke="#9aa39f" stroke-width="0.48" opacity="0.20"/>
<path d="M320.6,184.3 l8.3,-3.2" stroke="#9aa39f" stroke-width="0.48" opacity="0.20"/>
<path d="M318.1,184.3 l6.4,6.1" stroke="#9aa39f" stroke-width="0.48" opacity="0.20"/>
<path d="M321.7,184.2 l4.1,2.1" stroke="#9aa39f" stroke-width="0.48" opacity="0.20"/>
<path d="M190.4,180.0 Q202.0,181.0 213.5,183.8" stroke="#9aa39f" stroke-width="0.60" fill="none" opacity="0.27"/>
<path d="M210.5,183.1 l7.3,-4.5" stroke="#9aa39f" stroke-width="0.48" opacity="0.21"/>
<path d="M212.1,185.6 Q207.0,186.2 201.9,187.6" stroke="#9aa39f" stroke-width="0.60" fill="none" opacity="0.22"/>
<path d="M210.2,185.8 l-9.0,-4.3" stroke="#9aa39f" stroke-width="0.48" opacity="0.17"/>
<path d="M230.3,55.9 Q248.1,59.1 265.9,65.1" stroke="#9aa39f" stroke-width="0.60" fill="none" opacity="0.24"/>
<path d="M253.1,61.2 l4.0,-2.6" stroke="#9aa39f" stroke-width="0.48" opacity="0.19"/>
<path d="M239.6,57.8 l3.2,-0.9" stroke="#9aa39f" stroke-width="0.48" opacity="0.19"/>
<path d="M242.6,58.5 l3.1,3.6" stroke="#9aa39f" stroke-width="0.48" opacity="0.19"/>
<path d="M240.8,58.0 l4.0,-1.6" stroke="#9aa39f" stroke-width="0.48" opacity="0.19"/>
<path d="M260.5,63.4 l6.3,4.4" stroke="#9aa39f" stroke-width="0.48" opacity="0.19"/>
<path d="M210.4,60.4 Q222.0,59.3 233.6,59.9" stroke="#9aa39f" stroke-width="0.60" fill="none" opacity="0.20"/>
<path d="M222.6,59.7 l6.1,-4.5" stroke="#9aa39f" stroke-width="0.48" opacity="0.16"/>
<path d="M217.0,59.9 l5.9,-3.0" stroke="#9aa39f" stroke-width="0.48" opacity="0.16"/>
<path d="M220.3,59.8 l4.4,2.4" stroke="#9aa39f" stroke-width="0.48" opacity="0.16"/>
<path d="M231.5,59.8 l6.0,2.3" stroke="#9aa39f" stroke-width="0.48" opacity="0.16"/>
<path d="M206.6,50.8 Q201.0,52.2 195.5,54.5" stroke="#9aa39f" stroke-width="0.60" fill="none" opacity="0.24"/>
<path d="M200.9,52.4 l-6.6,-1.7" stroke="#9aa39f" stroke-width="0.48" opacity="0.19"/>
<path d="M230.4,112.1 Q237.7,110.6 245.1,110.3" stroke="#9aa39f" stroke-width="0.60" fill="none" opacity="0.23"/>
<path d="M237.0,111.0 l7.3,-6.7" stroke="#9aa39f" stroke-width="0.48" opacity="0.18"/>
<path d="M241.6,110.5 l4.2,-3.2" stroke="#9aa39f" stroke-width="0.48" opacity="0.18"/>
<path d="M243.6,110.4 l5.8,-4.2" stroke="#9aa39f" stroke-width="0.48" opacity="0.18"/>
<path d="M235.4,212.3 Q242.6,210.7 249.7,210.4" stroke="#9aa39f" stroke-width="0.60" fill="none" opacity="0.19"/>
<path d="M247.6,210.5 l6.5,-4.4" stroke="#9aa39f" stroke-width="0.48" opacity="0.15"/>
<path d="M241.5,211.2 l1.9,-2.5" stroke="#9aa39f" stroke-width="0.48" opacity="0.15"/>
<path d="M248.0,210.5 l8.3,3.3" stroke="#9aa39f" stroke-width="0.48" opacity="0.15"/>
<path d="M264.5,167.4 Q285.0,166.8 305.4,169.5" stroke="#9aa39f" stroke-width="0.60" fill="none" opacity="0.21"/>
<path d="M284.1,167.6 l3.3,-1.8" stroke="#9aa39f" stroke-width="0.48" opacity="0.17"/>
<path d="M296.7,168.5 l7.0,6.0" stroke="#9aa39f" stroke-width="0.48" opacity="0.17"/>
<path d="M283.1,167.5 l6.6,4.6" stroke="#9aa39f" stroke-width="0.48" opacity="0.17"/>
<path d="M277.7,167.3 l5.3,-4.6" stroke="#9aa39f" stroke-width="0.48" opacity="0.17"/>
<path d="M288.8,167.9 l7.1,-3.2" stroke="#9aa39f" stroke-width="0.48" opacity="0.17"/>
<path d="M296.1,133.3 Q304.2,131.1 312.2,130.2" stroke="#9aa39f" stroke-width="0.60" fill="none" opacity="0.15"/>
<path d="M302.3,131.8 l2.8,-2.8" stroke="#9aa39f" stroke-width="0.48" opacity="0.12"/>
<path d="M307.6,130.8 l4.3,0.9" stroke="#9aa39f" stroke-width="0.48" opacity="0.12"/>
<path d="M302.5,131.8 l3.1,-2.1" stroke="#9aa39f" stroke-width="0.48" opacity="0.12"/>
<path d="M291.6,137.4 Q282.5,137.1 273.5,138.3" stroke="#9aa39f" stroke-width="0.60" fill="none" opacity="0.19"/>
<path d="M275.9,138.0 l-5.4,-5.9" stroke="#9aa39f" stroke-width="0.48" opacity="0.15"/>
<path d="M285.1,137.4 l-2.9,-1.0" stroke="#9aa39f" stroke-width="0.48" opacity="0.15"/>
<path d="M287.4,137.4 l-3.9,-2.4" stroke="#9aa39f" stroke-width="0.48" opacity="0.15"/>
<path d="M275.5,138.0 l-3.4,2.4" stroke="#9aa39f" stroke-width="0.48" opacity="0.15"/>
<path d="M249.2,56.7 Q269.8,52.7 290.5,52.1" stroke="#9aa39f" stroke-width="0.60" fill="none" opacity="0.23"/>
<path d="M258.0,55.2 l5.7,-5.3" stroke="#9aa39f" stroke-width="0.48" opacity="0.19"/>
<path d="M259.5,54.9 l9.1,4.1" stroke="#9aa39f" stroke-width="0.48" opacity="0.19"/>
<path d="M256.6,55.4 l3.7,1.1" stroke="#9aa39f" stroke-width="0.48" opacity="0.19"/>
<path d="M286.6,52.2 l3.7,-3.9" stroke="#9aa39f" stroke-width="0.48" opacity="0.19"/>
<path d="M486.5,19.7 Q446.5,29.7 385.8,106.1" stroke="#c5cdc9" stroke-width=".7" fill="none" opacity="0.35"/>
<path d="M496.2,43.8 Q456.2,53.8 424.7,121.8" stroke="#c5cdc9" stroke-width=".7" fill="none" opacity="0.22"/>
<path d="M461.4,-1.0 Q421.4,9.0 356.7,76.4" stroke="#c5cdc9" stroke-width=".7" fill="none" opacity="0.28"/>
<path d="M497.9,37.3 Q457.9,47.3 393.2,89.5" stroke="#c5cdc9" stroke-width=".7" fill="none" opacity="0.22"/>
<path d="M473.2,27.2 Q433.2,37.2 363.8,98.3" stroke="#c5cdc9" stroke-width=".7" fill="none" opacity="0.22"/>
<ellipse cx="53.9" cy="52.7" rx=".8" ry="1.1" fill="#3a302e" opacity=".6"/>
<ellipse cx="60.2" cy="160.6" rx=".8" ry="1.1" fill="#3a302e" opacity=".6"/>
<ellipse cx="63.3" cy="53.7" rx=".8" ry="1.1" fill="#3a302e" opacity=".6"/>
<ellipse cx="55.0" cy="82.3" rx=".8" ry="1.1" fill="#3a302e" opacity=".6"/>
<ellipse cx="63.7" cy="15.5" rx=".8" ry="1.1" fill="#3a302e" opacity=".6"/>
<ellipse cx="62.7" cy="178.4" rx=".8" ry="1.1" fill="#3a302e" opacity=".6"/>
<ellipse cx="66.5" cy="206.3" rx=".8" ry="1.1" fill="#3a302e" opacity=".6"/>
<ellipse cx="54.0" cy="1.2" rx=".8" ry="1.1" fill="#3a302e" opacity=".6"/>
<ellipse cx="59.7" cy="108.1" rx=".8" ry="1.1" fill="#3a302e" opacity=".6"/>
<ellipse cx="55.2" cy="76.0" rx=".8" ry="1.1" fill="#3a302e" opacity=".6"/>
<ellipse cx="66.6" cy="57.1" rx=".8" ry="1.1" fill="#3a302e" opacity=".6"/>
<ellipse cx="58.3" cy="106.0" rx=".8" ry="1.1" fill="#3a302e" opacity=".6"/>
<ellipse cx="112.3" cy="159.1" rx=".8" ry="1.1" fill="#3a302e" opacity=".6"/>
<ellipse cx="112.8" cy="172.0" rx=".8" ry="1.1" fill="#3a302e" opacity=".6"/>
<ellipse cx="107.4" cy="66.3" rx=".8" ry="1.1" fill="#3a302e" opacity=".6"/>
<ellipse cx="112.4" cy="107.9" rx=".8" ry="1.1" fill="#3a302e" opacity=".6"/>
<ellipse cx="114.1" cy="57.6" rx=".8" ry="1.1" fill="#3a302e" opacity=".6"/>
<ellipse cx="107.3" cy="26.1" rx=".8" ry="1.1" fill="#3a302e" opacity=".6"/>
<ellipse cx="106.8" cy="82.9" rx=".8" ry="1.1" fill="#3a302e" opacity=".6"/>
<ellipse cx="108.1" cy="28.3" rx=".8" ry="1.1" fill="#3a302e" opacity=".6"/>
<ellipse cx="111.0" cy="1.8" rx=".8" ry="1.1" fill="#3a302e" opacity=".6"/>
<ellipse cx="106.4" cy="117.9" rx=".8" ry="1.1" fill="#3a302e" opacity=".6"/>
<ellipse cx="109.1" cy="159.3" rx=".8" ry="1.1" fill="#3a302e" opacity=".6"/>
<ellipse cx="113.8" cy="117.7" rx=".8" ry="1.1" fill="#3a302e" opacity=".6"/>
<ellipse cx="173.5" cy="107.6" rx=".8" ry="1.1" fill="#3a302e" opacity=".6"/>
<ellipse cx="173.8" cy="71.7" rx=".8" ry="1.1" fill="#3a302e" opacity=".6"/>
<ellipse cx="174.2" cy="190.9" rx=".8" ry="1.1" fill="#3a302e" opacity=".6"/>
<ellipse cx="175.3" cy="15.3" rx=".8" ry="1.1" fill="#3a302e" opacity=".6"/>
<ellipse cx="176.9" cy="72.1" rx=".8" ry="1.1" fill="#3a302e" opacity=".6"/>
<ellipse cx="174.1" cy="4.8" rx=".8" ry="1.1" fill="#3a302e" opacity=".6"/>
<ellipse cx="173.5" cy="67.7" rx=".8" ry="1.1" fill="#3a302e" opacity=".6"/>
<ellipse cx="177.5" cy="110.4" rx=".8" ry="1.1" fill="#3a302e" opacity=".6"/>
<ellipse cx="175.9" cy="198.4" rx=".8" ry="1.1" fill="#3a302e" opacity=".6"/>
<ellipse cx="176.2" cy="2.3" rx=".8" ry="1.1" fill="#3a302e" opacity=".6"/>
<ellipse cx="175.7" cy="32.1" rx=".8" ry="1.1" fill="#3a302e" opacity=".6"/>
<ellipse cx="177.7" cy="133.4" rx=".8" ry="1.1" fill="#3a302e" opacity=".6"/>
<ellipse cx="323.6" cy="122.1" rx=".8" ry="1.1" fill="#3a302e" opacity=".6"/>
<ellipse cx="332.5" cy="18.5" rx=".8" ry="1.1" fill="#3a302e" opacity=".6"/>
<ellipse cx="324.6" cy="76.1" rx=".8" ry="1.1" fill="#3a302e" opacity=".6"/>
<ellipse cx="331.1" cy="116.6" rx=".8" ry="1.1" fill="#3a302e" opacity=".6"/>
<ellipse cx="319.2" cy="130.1" rx=".8" ry="1.1" fill="#3a302e" opacity=".6"/>
<ellipse cx="330.9" cy="179.9" rx=".8" ry="1.1" fill="#3a302e" opacity=".6"/>
<ellipse cx="331.0" cy="186.9" rx=".8" ry="1.1" fill="#3a302e" opacity=".6"/>
<ellipse cx="323.9" cy="141.4" rx=".8" ry="1.1" fill="#3a302e" opacity=".6"/>
<ellipse cx="335.8" cy="74.5" rx=".8" ry="1.1" fill="#3a302e" opacity=".6"/>
<ellipse cx="335.4" cy="67.6" rx=".8" ry="1.1" fill="#3a302e" opacity=".6"/>
<ellipse cx="327.2" cy="56.0" rx=".8" ry="1.1" fill="#3a302e" opacity=".6"/>
<ellipse cx="330.5" cy="207.3" rx=".8" ry="1.1" fill="#3a302e" opacity=".6"/>
</g></svg>
  <div class="a" style="left:67.5px;top:157.5px;width:71.5px;height:25px;border-radius:4px;background:#eef8ee;border:1px solid #fff"></div>
  <div class="a" style="left:76.5px;top:164.5px;font-size:12.4px;line-height:12.4px;color:#6cbf6c">Approved</div>

  <div class="a" style="left:59px;top:391px;font-size:14.4px;line-height:14.4px;color:#333;-webkit-text-stroke:0.3px #333">Pending</div>
  <div class="a" style="left:153px;top:391px;font-size:14.2px;line-height:14.2px;color:#333;-webkit-text-stroke:0.3px #333">Resolved</div>
  <div class="a" style="left:59.5px;top:416px;width:478px;height:2px;background:#e4e6ec"></div>
  <div class="a" style="left:59.2px;top:416px;width:54px;height:2px;background:#3c5ce0"></div>

  <svg class="a" style="left:74.5px;top:453.5px" width="35" height="35" viewBox="0 0 35 35"><defs><clipPath id="ac"><circle cx="17.3" cy="17.5" r="17.2"/></clipPath><radialGradient id="fg" cx=".5" cy=".45" r=".55"><stop offset="0" stop-color="#e6e6e6"/><stop offset=".75" stop-color="#cfcfcf"/><stop offset="1" stop-color="#9a9a9a"/></radialGradient></defs><g clip-path="url(#ac)"><rect width="35" height="35" fill="#2c2c2c"/><rect x="2" y="4" width="10" height="1.3" fill="#6a6a6a" opacity=".85"/><rect x="25" y="5.5" width="9" height="1.3" fill="#5a5a5a" opacity=".8"/><rect x="2" y="8" width="10" height="1.3" fill="#6a6a6a" opacity=".85"/><rect x="25" y="9.5" width="9" height="1.3" fill="#5a5a5a" opacity=".8"/><rect x="2" y="12" width="10" height="1.3" fill="#6a6a6a" opacity=".85"/><rect x="25" y="13.5" width="9" height="1.3" fill="#5a5a5a" opacity=".8"/><rect x="2" y="16" width="10" height="1.3" fill="#6a6a6a" opacity=".85"/><rect x="25" y="17.5" width="9" height="1.3" fill="#5a5a5a" opacity=".8"/><rect x="2" y="20" width="10" height="1.3" fill="#6a6a6a" opacity=".85"/><rect x="25" y="21.5" width="9" height="1.3" fill="#5a5a5a" opacity=".8"/><rect x="2" y="24" width="10" height="1.3" fill="#6a6a6a" opacity=".85"/><rect x="25" y="25.5" width="9" height="1.3" fill="#5a5a5a" opacity=".8"/><rect x="2" y="28" width="10" height="1.3" fill="#6a6a6a" opacity=".85"/><rect x="25" y="29.5" width="9" height="1.3" fill="#5a5a5a" opacity=".8"/><circle cx="9.5" cy="15" r="1.8" fill="#999" opacity=".7"/><circle cx="9" cy="21.5" r="1.8" fill="#999" opacity=".6"/><circle cx="9" cy="28" r="1.8" fill="#888" opacity=".5"/><path d="M3,35 Q6,29 13,27.5 L22,27.5 Q29,29 32,35z" fill="#242424"/><path d="M15,24 H21 V29 H15z" fill="#c8c8c8"/><path d="M11.5,28 Q14,26.5 17.5,27 Q21,26.5 24,28 L21,35 H14z" fill="#d6d6d6"/><path d="M16.9,29.5 L18.3,29.5 L18.8,35 L16.4,35z" fill="#333"/><ellipse cx="18" cy="16.8" rx="6.8" ry="9.2" fill="url(#fg)"/><path d="M11.5,12.5 Q12,7.3 18,7.3 Q24,7.3 24.6,12.5 Q22,9.8 18,9.8 Q14,9.8 11.5,12.5z" fill="#a8a8a8"/><path d="M14.5,16.2 h2.4 M19.3,16.2 h2.4" stroke="#8a8a8a" stroke-width=".7"/><path d="M15.5,21.8 Q18,23.2 20.8,21.8" stroke="#a0a0a0" stroke-width=".6" fill="none"/></g></svg>
  <div class="a" style="left:126px;top:454.3px;font-size:13px;line-height:13px;font-weight:bold;color:#555">Andre Gagnon</div>
  <div class="a" style="left:226px;top:455.6px;font-size:11px;line-height:11px;color:#c8c8c8">4d</div>
  <div class="a" style="left:125.5px;top:472.9px;font-size:13.75px;line-height:13.75px;color:#777">sdgasdgasdg</div>
  <svg style="left:476px;top:462.5px" width="18" height="18" viewBox="0 0 18 18"><circle cx="9" cy="9" r="8.5" fill="none" stroke="#dcdcdc" stroke-width="1" stroke-dasharray="3 2"/></svg>
  <svg style="left:508px;top:463.8px" width="15" height="20" viewBox="0 0 15 20">
    <path fill="#3c5ce0" d="M2,0 H13 Q15,0 15,2 V13.8 Q15,15.8 13,15.8 H8 L4,19.9 V15.8 H2 Q0,15.8 0,13.8 V2 Q0,0 2,0z"/>
  </svg>
  <svg style="left:0;top:0" width="595" height="792" viewBox="0 0 595 792"><path fill="#fff" d="M515.3,469 H517.3 V475.9 H515.3 V471.3 L513.2,472.1 V470.3z"/></svg>
</div>
</body></html>
